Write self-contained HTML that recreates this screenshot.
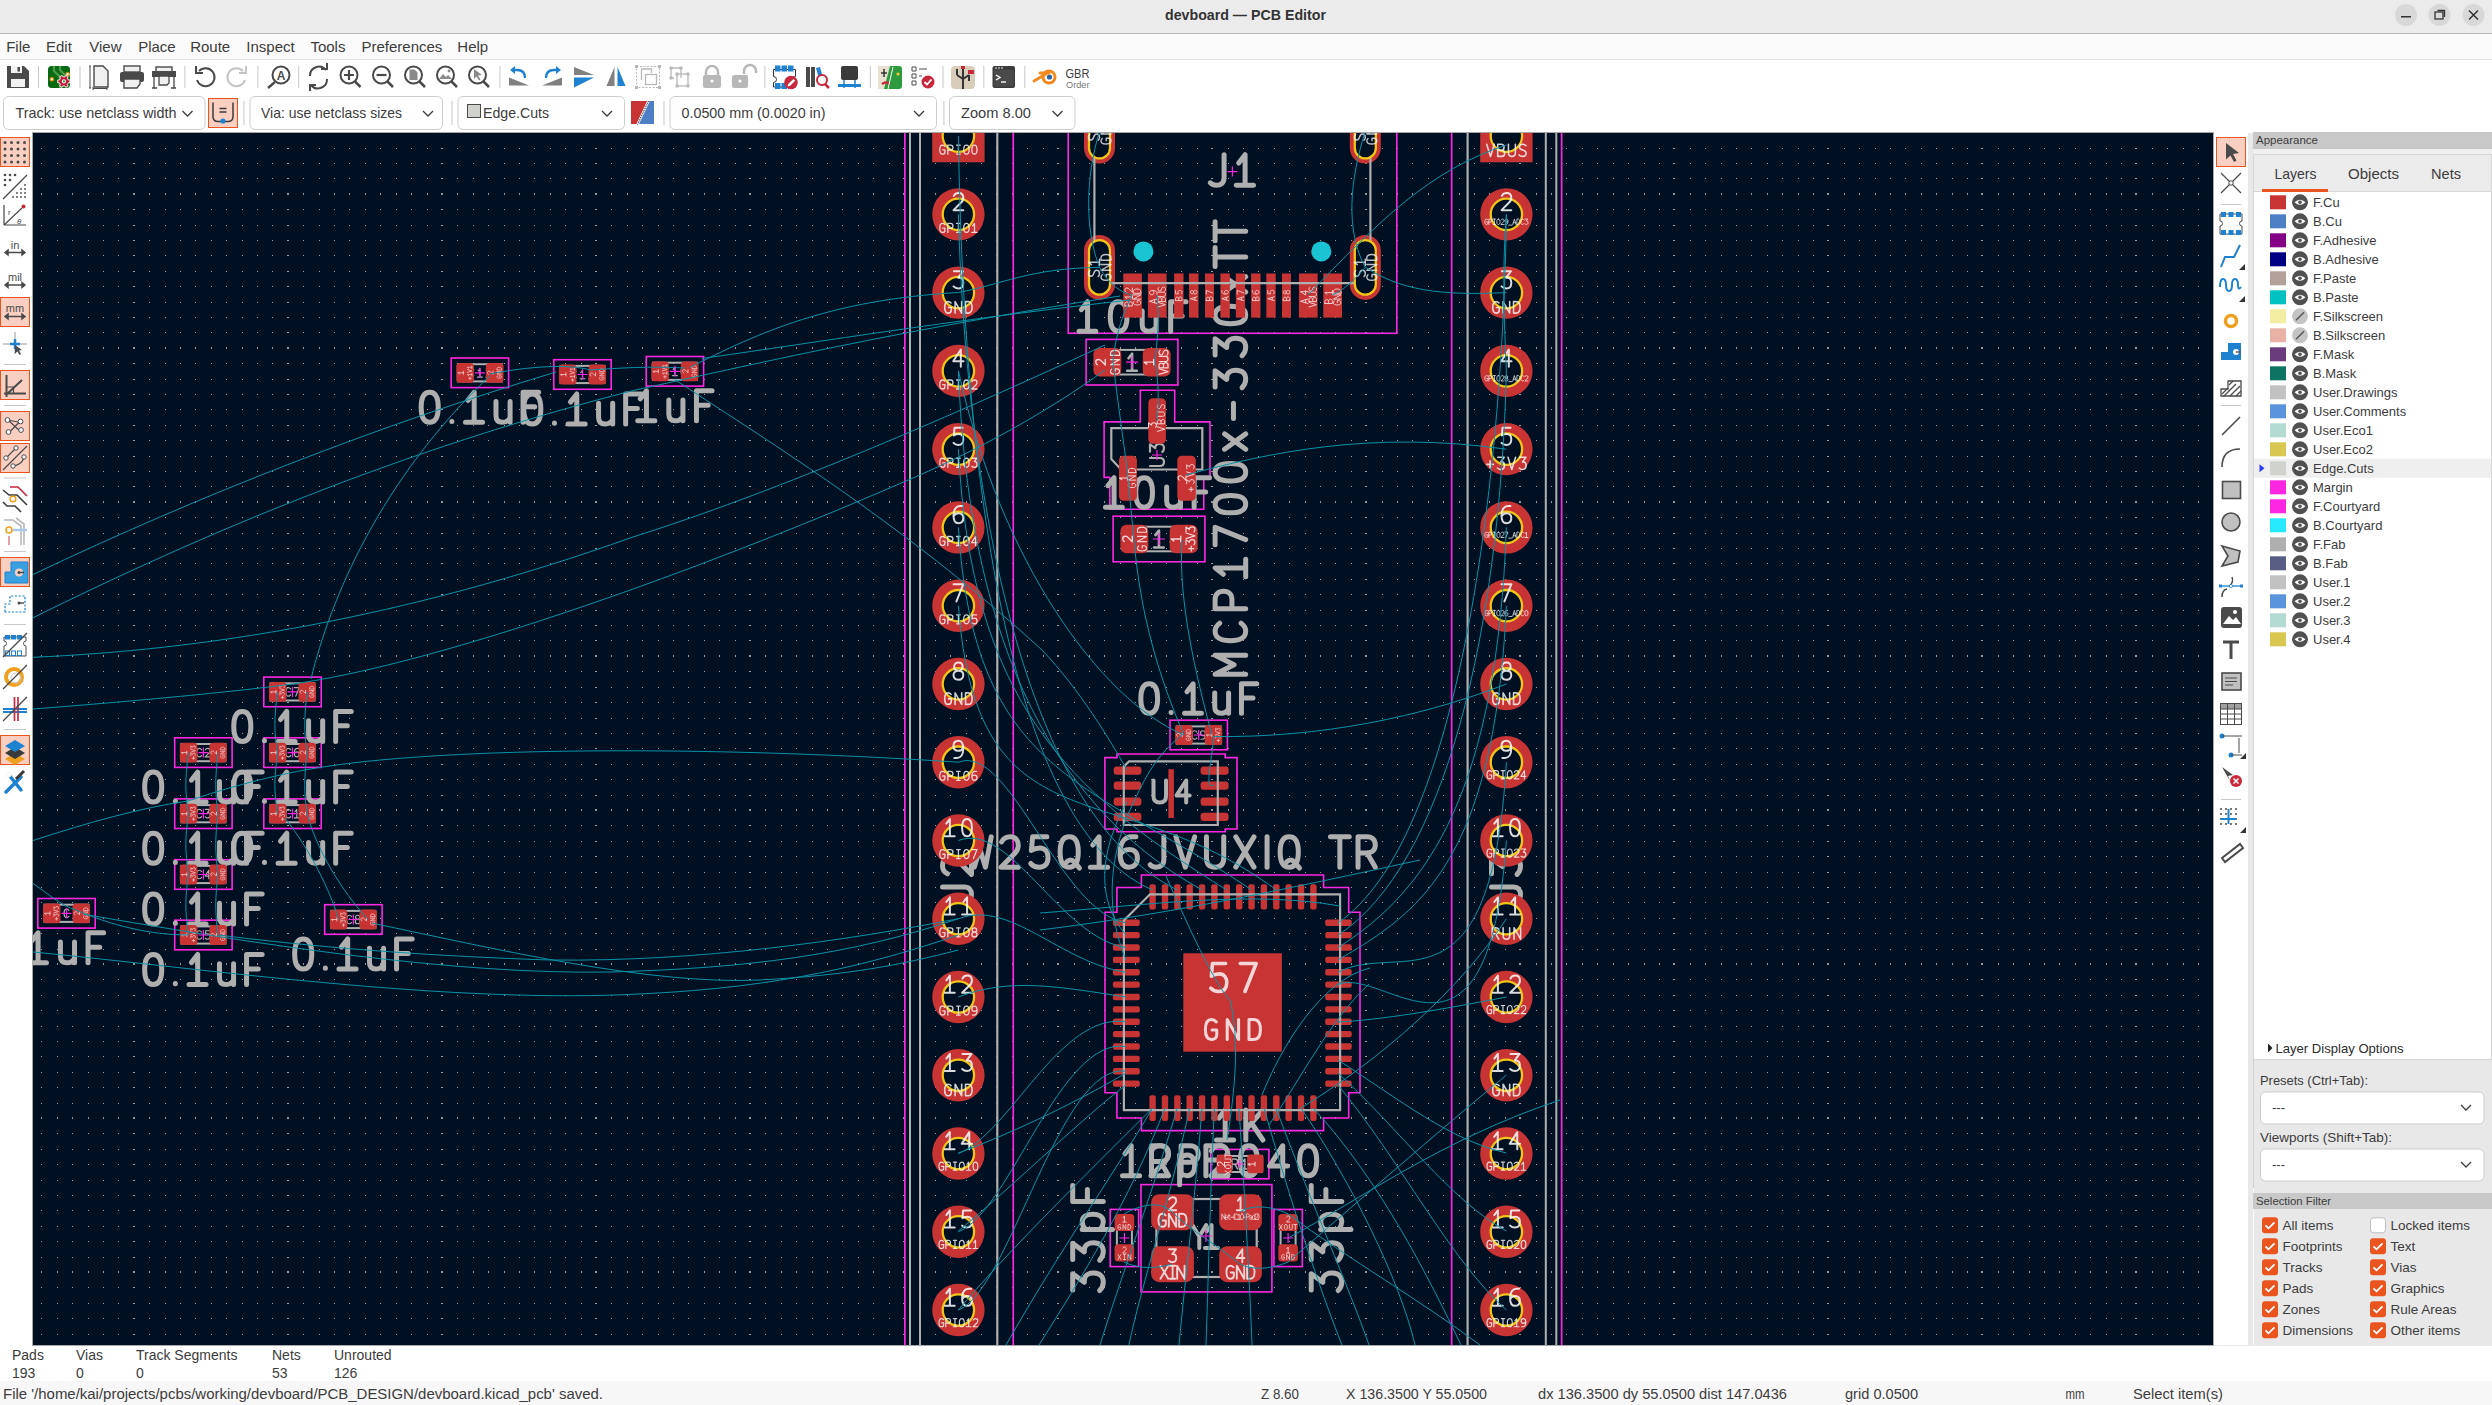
<!DOCTYPE html><html><head><meta charset="utf-8"><style>
html,body{margin:0;padding:0;width:2492px;height:1405px;overflow:hidden;background:#fafafa}
svg{display:block}
text{font-family:"Liberation Sans", sans-serif}
</style></head><body>
<svg width="2492" height="1405" viewBox="0 0 2492 1405">
<rect x="0" y="0" width="2492" height="33" fill="#ebebeb"/>
<rect x="0" y="33" width="2492" height="1" fill="#bcbcbc"/>
<text x="1245.5" y="20" text-anchor="middle" font-size="15" font-weight="bold" fill="#333" textLength="161" lengthAdjust="spacingAndGlyphs">devboard — PCB Editor</text>
<circle cx="2406" cy="15" r="11" fill="#d8d8d8"/>
<circle cx="2439.5" cy="15" r="11" fill="#d8d8d8"/>
<circle cx="2473.5" cy="15" r="11" fill="#d8d8d8"/>
<rect x="2401" y="16" width="10" height="1.5" fill="#333"/>
<rect x="2435" y="12" width="8" height="7" fill="none" stroke="#333" stroke-width="1.3"/><path d="M2437.5 10.5h7v6.5" fill="none" stroke="#333" stroke-width="1.3"/>
<path d="M2469 10.5l9 9M2478 10.5l-9 9" stroke="#333" stroke-width="1.5"/>
<rect x="0" y="34" width="2492" height="25" fill="#fafafa"/>
<rect x="0" y="59" width="2492" height="1" fill="#e2e2e2"/>
<text x="6.2" y="52" font-size="15" fill="#3c3c3c">File</text>
<text x="46" y="52" font-size="15" fill="#3c3c3c">Edit</text>
<text x="89.3" y="52" font-size="15" fill="#3c3c3c">View</text>
<text x="138.2" y="52" font-size="15" fill="#3c3c3c">Place</text>
<text x="190.2" y="52" font-size="15" fill="#3c3c3c">Route</text>
<text x="246.3" y="52" font-size="15" fill="#3c3c3c">Inspect</text>
<text x="310.4" y="52" font-size="15" fill="#3c3c3c">Tools</text>
<text x="361.5" y="52" font-size="15" fill="#3c3c3c">Preferences</text>
<text x="457.3" y="52" font-size="15" fill="#3c3c3c">Help</text>
<rect x="0" y="60" width="2492" height="73" fill="#ffffff"/>
<path d="M7 66h17l5 5v17h-22z" fill="#4a4a4a"/><rect x="11" y="79" width="14" height="8" fill="#f2f2f2"/><rect x="11" y="66" width="11" height="7" fill="#f2f2f2"/><rect x="17.5" y="67" width="2.5" height="4.5" fill="#4a4a4a"/>
<rect x="38" y="66" width="1" height="22" fill="#c8c8c8"/>
<rect x="48" y="66" width="22" height="22" rx="3.5" fill="#0a6a12"/><path d="M54 66v5l6 6v11M60 66v4l5 5h5" stroke="#4a9a4a" stroke-width="2.2" fill="none"/><circle cx="51.8" cy="79.3" r="1.7" fill="#fff" stroke="#e88a10" stroke-width="1.1"/><circle cx="67.6" cy="74.2" r="1.7" fill="#fff" stroke="#e88a10" stroke-width="1.1"/>
<path d="M70.04 79.98L70.04 82.82L68.39 82.77L67.34 84.61L68.20 86.01L65.74 87.42L64.96 85.98L62.84 85.98L62.06 87.42L59.60 86.01L60.46 84.61L59.41 82.77L57.76 82.82L57.76 79.98L59.41 80.03L60.46 78.19L59.60 76.79L62.06 75.38L62.84 76.82L64.96 76.82L65.74 75.38L68.20 76.79L67.34 78.19L68.39 80.03Z" fill="#c0183a" stroke="#fff" stroke-width="0.9" stroke-linejoin="round"/><circle cx="63.9" cy="81.4" r="2.1" fill="#fff"/><circle cx="63.9" cy="81.4" r="1.1" fill="#2a9a2a"/>
<rect x="79.5" y="66" width="1" height="22" fill="#c8c8c8"/>
<path d="M94 66h9l5 5v16h-14z" fill="#f0f0f0" stroke="#4a4a4a" stroke-width="1.4"/><path d="M90 66v22M89 66h2M89 88h2M93 88.5h14M93 87v3M107 87v3" stroke="#4a4a4a" stroke-width="1"/>
<rect x="124" y="66" width="16" height="6" fill="#f0f0f0" stroke="#4a4a4a" stroke-width="1.4"/><rect x="120" y="72" width="24" height="10" rx="2" fill="#4a4a4a"/><path d="M124 79h16v5l-3 4h-13z" fill="#f0f0f0" stroke="#4a4a4a" stroke-width="1.4"/>
<rect x="156" y="67" width="16" height="5" fill="#f0f0f0" stroke="#4a4a4a" stroke-width="1.4"/><rect x="152" y="71" width="24" height="6" fill="#4a4a4a"/><path d="M159 76h10v7l-2 2h-8z" fill="#f0f0f0" stroke="#4a4a4a" stroke-width="1.3"/><path d="M154 77v11M174 77v11M152 88h5M171 88h5" stroke="#4a4a4a" stroke-width="1.3"/>
<rect x="184.4" y="66" width="1" height="22" fill="#c8c8c8"/>
<path d="M199 71a9 9 0 1 1 -2 9" fill="none" stroke="#4a4a4a" stroke-width="2"/><path d="M196 66v7h7" fill="none" stroke="#4a4a4a" stroke-width="2"/>
<path d="M243 71a9 9 0 1 0 2 9" fill="none" stroke="#c4c4c4" stroke-width="2"/><path d="M246 66v7h-7" fill="none" stroke="#c4c4c4" stroke-width="2"/>
<rect x="257.4" y="66" width="1" height="22" fill="#c8c8c8"/>
<circle cx="281" cy="75" r="8.5" fill="none" stroke="#4a4a4a" stroke-width="2"/><path d="M275 82l-7 6" stroke="#4a4a4a" stroke-width="2.4"/><text x="281" y="80" font-size="12" font-weight="bold" text-anchor="middle" fill="#4a4a4a">A</text>
<rect x="298.2" y="66" width="1" height="22" fill="#c8c8c8"/>
<path d="M310 76a9 9 0 0 1 16-6M327 79a9 9 0 0 1 -16 6" fill="none" stroke="#4a4a4a" stroke-width="2"/><path d="M321 69h6v-6M316 85h-6v6" fill="none" stroke="#4a4a4a" stroke-width="2"/>
<circle cx="349" cy="75" r="8.5" fill="none" stroke="#4a4a4a" stroke-width="2"/><path d="M355 81.5l5.5 5.5" stroke="#4a4a4a" stroke-width="2.5"/><path d="M344 75h10M349 70v10" stroke="#4a4a4a" stroke-width="2.2"/>
<circle cx="381.5" cy="75" r="8.5" fill="none" stroke="#4a4a4a" stroke-width="2"/><path d="M387.5 81.5l5.5 5.5" stroke="#4a4a4a" stroke-width="2.5"/><path d="M376.5 75h10" stroke="#4a4a4a" stroke-width="2.2"/>
<circle cx="413.5" cy="75" r="8.5" fill="none" stroke="#4a4a4a" stroke-width="2"/><path d="M419.5 81.5l5.5 5.5" stroke="#4a4a4a" stroke-width="2.5"/><path d="M409.5 69.5h5l3 3v7.5h-8z" fill="#8a8a8a"/>
<circle cx="445.5" cy="75" r="8.5" fill="none" stroke="#4a4a4a" stroke-width="2"/><path d="M451.5 81.5l5.5 5.5" stroke="#4a4a4a" stroke-width="2.5"/><path d="M439 79l4-5 3 3 2-2 4 4z" fill="#8a8a8a"/><circle cx="449" cy="71" r="1.4" fill="#8a8a8a"/>
<circle cx="477.5" cy="75" r="8.5" fill="none" stroke="#4a4a4a" stroke-width="2"/><path d="M483.5 81.5l5.5 5.5" stroke="#4a4a4a" stroke-width="2.5"/><path d="M474 69l8 6-4 .5 2.5 4-1.5 1-2.5-4-2.5 2.5z" fill="#8a8a8a"/>
<rect x="499.4" y="66" width="1" height="22" fill="#c8c8c8"/>
<path d="M509 85.5v-8l20 8z" fill="#808080"/><path d="M525 78q0-8-8-8h-3" fill="none" stroke="#1e82d0" stroke-width="2.3"/><path d="M510 70l5-4v8z" fill="#1e82d0"/>
<path d="M562 85.5v-8l-20 8z" fill="#808080"/><path d="M546 78q0-8 8-8h3" fill="none" stroke="#1e82d0" stroke-width="2.3"/><path d="M561 70l-5-4v8z" fill="#1e82d0"/>
<path d="M574 67l20 8h-20z" fill="#808080"/><path d="M574 77.5h20l-20 10z" fill="#1e82d0"/>
<path d="M614.5 67v19h-8z" fill="#808080"/><path d="M617.5 67v19h8z" fill="#1e82d0"/>
<rect x="636.5" y="66.5" width="23" height="21" fill="none" stroke="#b8b8b8" stroke-width="1" stroke-dasharray="2 1.5"/><path d="M641.5 80v-11h10v4" fill="none" stroke="#b8b8b8" stroke-width="1.3"/><rect x="645.5" y="74.5" width="11" height="10" fill="none" stroke="#b8b8b8" stroke-width="1.3"/>
<rect x="635.0" y="65.0" width="3" height="3" fill="#b8b8b8"/>
<rect x="658.0" y="65.0" width="3" height="3" fill="#b8b8b8"/>
<rect x="635.0" y="86.0" width="3" height="3" fill="#b8b8b8"/>
<rect x="658.0" y="86.0" width="3" height="3" fill="#b8b8b8"/>
<path d="M671 68h10v10" fill="none" stroke="#b8b8b8" stroke-width="1.3"/><path d="M671 68v10h3" fill="none" stroke="#b8b8b8" stroke-width="1.3"/><rect x="677" y="74" width="11" height="12" fill="none" stroke="#b8b8b8" stroke-width="1.3"/>
<rect x="669.5" y="66.5" width="3" height="3" fill="#b8b8b8"/>
<rect x="679.5" y="66.5" width="3" height="3" fill="#b8b8b8"/>
<rect x="669.5" y="76.5" width="3" height="3" fill="#b8b8b8"/>
<rect x="675.5" y="72.5" width="3" height="3" fill="#b8b8b8"/>
<rect x="686.5" y="72.5" width="3" height="3" fill="#b8b8b8"/>
<rect x="675.5" y="84.5" width="3" height="3" fill="#b8b8b8"/>
<rect x="686.5" y="84.5" width="3" height="3" fill="#b8b8b8"/>
<path d="M706 75v-3a6 6 0 0 1 12 0v3" fill="none" stroke="#b8b8b8" stroke-width="2.5"/><rect x="703" y="75" width="18" height="13" rx="2" fill="#b8b8b8"/><circle cx="712" cy="81" r="1.6" fill="#fff"/>
<path d="M744 74v-3a6 6 0 0 1 12 0v2" fill="none" stroke="#b8b8b8" stroke-width="2.5"/><rect x="732" y="75" width="16" height="13" rx="2" fill="#b8b8b8"/><circle cx="740" cy="81" r="1.6" fill="#fff"/>
<rect x="764.4" y="66" width="1" height="22" fill="#c8c8c8"/>
<path d="M773.5 69.5h22v7a3 3 0 0 0 0 6v4.5h-22v-4.5a3 3 0 0 0 0-6z" fill="none" stroke="#333" stroke-width="1"/>
<rect x="775" y="65.5" width="5.5" height="6" fill="#1e82d0"/><rect x="775" y="83" width="5.5" height="6" fill="#1e82d0"/>
<rect x="781.5" y="65.5" width="5.5" height="6" fill="#1e82d0"/><rect x="781.5" y="83" width="5.5" height="6" fill="#1e82d0"/>
<rect x="788" y="65.5" width="5.5" height="6" fill="#1e82d0"/><rect x="788" y="83" width="5.5" height="6" fill="#1e82d0"/>
<circle cx="791" cy="82.5" r="6.8" fill="#c8283c"/><path d="M787.5 86.5l.8-2.6 5-5 1.9 1.9-5 5z" fill="#fff"/>
<rect x="806" y="67" width="4" height="20" fill="#4a4a4a"/><rect x="811" y="67" width="4" height="20" fill="#4a4a4a"/><path d="M816 68l4-1 5 18-4 1z" fill="#1e82d0"/><circle cx="822" cy="80" r="5" fill="#fff" stroke="#c8283c" stroke-width="2"/><path d="M825 84l4 4" stroke="#c8283c" stroke-width="2.5"/>
<rect x="841" y="66" width="17" height="14" rx="2" fill="#3a3a3a"/><rect x="838" y="84" width="23" height="3" fill="#1e82d0"/><path d="M844 80v8M855 80v8" stroke="#1e82d0" stroke-width="1.5"/>
<rect x="869.8" y="66" width="1" height="22" fill="#c8c8c8"/>
<rect x="878" y="66" width="24" height="23" rx="3" fill="#2e9a3e"/><path d="M878 66h12l-6 23h-6z" fill="#e8e0d0"/><path d="M884 69v8m-3-4h6" stroke="#333" stroke-width="1.5"/><path d="M882 84q4-3 8 0" stroke="#c8283c" stroke-width="2.5" fill="none"/><path d="M893 67l-5 22" stroke="#fff" stroke-width="1"/><circle cx="898" cy="74" r="1.6" fill="#ffc040"/>
<path d="M912 67h4v4h-4zM912 74h4v4h-4zM912 81h4v4h-4z" fill="none" stroke="#4a4a4a" stroke-width="1"/><path d="M919 69h8M919 76h3" stroke="#4a4a4a" stroke-width="1.2"/><circle cx="928" cy="82" r="6.5" fill="#c8283c"/><path d="M924.5 82l2.5 2.5 4.5-5" stroke="#fff" stroke-width="1.8" fill="none"/>
<rect x="942.5" y="66" width="1" height="22" fill="#c8c8c8"/>
<rect x="951" y="66" width="24" height="23" rx="4" fill="#d8cdb8"/><path d="M963 66v23M957 75l6 4M963 79l6-4M957 75v-6M969 75v6" stroke="#333" stroke-width="2" fill="none"/><rect x="968" y="70" width="6" height="4" fill="#c8283c"/><rect x="961" y="66" width="4" height="3" fill="#c8283c"/>
<rect x="983.3" y="66" width="1" height="22" fill="#c8c8c8"/>
<rect x="992.5" y="66" width="22.5" height="22" rx="2" fill="#3c3c3c"/><rect x="994" y="70" width="19.5" height="16.5" fill="#4a4a4a"/><path d="M996 75l4 2.5-4 2.5" stroke="#fff" stroke-width="1.4" fill="none"/><path d="M1001 82h5" stroke="#fff" stroke-width="1.4"/><circle cx="996" cy="68" r=".8" fill="#fff"/><circle cx="999" cy="68" r=".8" fill="#fff"/><circle cx="1002" cy="68" r=".8" fill="#fff"/>
<rect x="1024.3" y="66" width="1" height="22" fill="#c8c8c8"/>
<circle cx="1049" cy="77" r="7.5" fill="#f08a1e"/><circle cx="1049" cy="77" r="4.5" fill="#fff"/><circle cx="1049.5" cy="77" r="2.6" fill="#2a64a8"/><path d="M1034 81l12-7M1040 73h9" stroke="#f08a1e" stroke-width="3" stroke-linecap="round"/>
<text x="1065.5" y="78" font-size="12.5" fill="#3a3a3a" textLength="24" lengthAdjust="spacingAndGlyphs">GBR</text><text x="1066" y="87.5" font-size="9" fill="#777" textLength="23.5" lengthAdjust="spacingAndGlyphs">Order</text>
<rect x="3.5" y="96.5" width="201.5" height="33" rx="5" fill="#fff" stroke="#cdcdcd" stroke-width="1"/>
<text x="15.5" y="117.8" font-size="15" fill="#3c3c3c" textLength="161" lengthAdjust="spacingAndGlyphs">Track: use netclass width</text>
<path d="M182.5 111l5 5 5-5" fill="none" stroke="#3c3c3c" stroke-width="1.3"/>
<rect x="208.5" y="98.5" width="29" height="29" fill="#f9cfc2" stroke="#e9541f" stroke-width="1"/><path d="M213 102.5v14q0 5 5 5h10q5 0 5-5v-14" fill="none" stroke="#3c3c3c" stroke-width="1.5"/><path d="M219.5 108.5h7M219.5 112h7" stroke="#3c3c3c" stroke-width="1.3"/><circle cx="223" cy="121" r="2.6" fill="#1e82d0"/>
<rect x="243.4" y="101" width="1" height="24" fill="#c8c8c8"/>
<rect x="250.0" y="96.5" width="192.5" height="33" rx="5" fill="#fff" stroke="#cdcdcd" stroke-width="1"/>
<text x="261" y="117.8" font-size="15" fill="#3c3c3c" textLength="141" lengthAdjust="spacingAndGlyphs">Via: use netclass sizes</text>
<path d="M423 111l5 5 5-5" fill="none" stroke="#3c3c3c" stroke-width="1.3"/>
<rect x="451.5" y="101" width="1" height="24" fill="#c8c8c8"/>
<rect x="458.0" y="96.5" width="166.5" height="33" rx="5" fill="#fff" stroke="#cdcdcd" stroke-width="1"/>
<text x="483" y="117.8" font-size="15" fill="#3c3c3c" textLength="66" lengthAdjust="spacingAndGlyphs">Edge.Cuts</text>
<path d="M602 111l5 5 5-5" fill="none" stroke="#3c3c3c" stroke-width="1.3"/>
<rect x="467.5" y="104.5" width="13" height="13" fill="#d0d2cd" stroke="#4a4a4a" stroke-width="1"/>
<path d="M631 101h23v23h-23z" fill="#4d7fc4"/><path d="M631 101h18l-11 23h-7z" fill="#c83434"/><path d="M648.5 101l-11 23.5" stroke="#fff" stroke-width="2.4"/><path d="M648.5 101l-11 23.5" stroke="#222" stroke-width="1" stroke-dasharray="1.5 1"/>
<rect x="663.5" y="101" width="1" height="24" fill="#c8c8c8"/>
<rect x="670.0" y="96.5" width="266.5" height="33" rx="5" fill="#fff" stroke="#cdcdcd" stroke-width="1"/>
<text x="681.5" y="117.8" font-size="15" fill="#3c3c3c" textLength="144" lengthAdjust="spacingAndGlyphs">0.0500 mm (0.0020 in)</text>
<path d="M914 111l5 5 5-5" fill="none" stroke="#3c3c3c" stroke-width="1.3"/>
<rect x="943.4" y="101" width="1" height="24" fill="#c8c8c8"/>
<rect x="949.5" y="96.5" width="125.5" height="33" rx="5" fill="#fff" stroke="#cdcdcd" stroke-width="1"/>
<text x="961" y="117.8" font-size="15" fill="#3c3c3c" textLength="70" lengthAdjust="spacingAndGlyphs">Zoom 8.00</text>
<path d="M1052.5 111l5 5 5-5" fill="none" stroke="#3c3c3c" stroke-width="1.3"/>
<rect x="0" y="133" width="33" height="1212" fill="#ffffff"/>
<rect x="0.5" y="137.5" width="29" height="29" fill="#f9cfc2" stroke="#e9541f" stroke-width="1"/>
<rect x="0.5" y="297.5" width="29" height="29" fill="#f9cfc2" stroke="#e9541f" stroke-width="1"/>
<rect x="0.5" y="370.5" width="29" height="29" fill="#f9cfc2" stroke="#e9541f" stroke-width="1"/>
<rect x="0.5" y="411.5" width="29" height="29" fill="#f9cfc2" stroke="#e9541f" stroke-width="1"/>
<rect x="0.5" y="443.5" width="29" height="29" fill="#f9cfc2" stroke="#e9541f" stroke-width="1"/>
<rect x="0.5" y="557.5" width="29" height="29" fill="#f9cfc2" stroke="#e9541f" stroke-width="1"/>
<rect x="0.5" y="735.5" width="29" height="29" fill="#f9cfc2" stroke="#e9541f" stroke-width="1"/>
<rect x="4" y="364" width="22" height="1" fill="#c8c8c8"/>
<rect x="4" y="405" width="22" height="1" fill="#c8c8c8"/>
<rect x="4" y="477.5" width="22" height="1" fill="#c8c8c8"/>
<rect x="4" y="551" width="22" height="1" fill="#c8c8c8"/>
<rect x="4" y="624" width="22" height="1" fill="#c8c8c8"/>
<rect x="4" y="729" width="22" height="1" fill="#c8c8c8"/>
<circle cx="5.0" cy="142.5" r="1.5" fill="#4a4a4a"/>
<circle cx="5.0" cy="149.0" r="1.5" fill="#4a4a4a"/>
<circle cx="5.0" cy="155.5" r="1.5" fill="#4a4a4a"/>
<circle cx="5.0" cy="162.0" r="1.5" fill="#4a4a4a"/>
<circle cx="11.5" cy="142.5" r="1.5" fill="#4a4a4a"/>
<circle cx="11.5" cy="149.0" r="1.5" fill="#4a4a4a"/>
<circle cx="11.5" cy="155.5" r="1.5" fill="#4a4a4a"/>
<circle cx="11.5" cy="162.0" r="1.5" fill="#4a4a4a"/>
<circle cx="18.0" cy="142.5" r="1.5" fill="#4a4a4a"/>
<circle cx="18.0" cy="149.0" r="1.5" fill="#4a4a4a"/>
<circle cx="18.0" cy="155.5" r="1.5" fill="#4a4a4a"/>
<circle cx="18.0" cy="162.0" r="1.5" fill="#4a4a4a"/>
<circle cx="24.5" cy="142.5" r="1.5" fill="#4a4a4a"/>
<circle cx="24.5" cy="149.0" r="1.5" fill="#4a4a4a"/>
<circle cx="24.5" cy="155.5" r="1.5" fill="#4a4a4a"/>
<circle cx="24.5" cy="162.0" r="1.5" fill="#4a4a4a"/>
<path d="M3 199l24-24" stroke="#4a4a4a" stroke-width="1.2"/>
<circle cx="5" cy="175" r="1.3" fill="#4a4a4a"/>
<circle cx="5" cy="180" r="1.3" fill="#4a4a4a"/>
<circle cx="5" cy="185" r="1.3" fill="#4a4a4a"/>
<circle cx="10" cy="175" r="1.3" fill="#4a4a4a"/>
<circle cx="10" cy="180" r="1.3" fill="#4a4a4a"/>
<circle cx="15" cy="175" r="1.3" fill="#4a4a4a"/>
<circle cx="25" cy="185" r=".9" fill="#4a4a4a"/>
<circle cx="25" cy="189" r=".9" fill="#4a4a4a"/>
<circle cx="21" cy="189" r=".9" fill="#4a4a4a"/>
<circle cx="25" cy="193" r=".9" fill="#4a4a4a"/>
<circle cx="21" cy="193" r=".9" fill="#4a4a4a"/>
<circle cx="17" cy="193" r=".9" fill="#4a4a4a"/>
<circle cx="25" cy="197" r=".9" fill="#4a4a4a"/>
<circle cx="21" cy="197" r=".9" fill="#4a4a4a"/>
<circle cx="17" cy="197" r=".9" fill="#4a4a4a"/>
<circle cx="13" cy="197" r=".9" fill="#4a4a4a"/>
<path d="M4 225v-20M4 225h22M4 225l18-17" stroke="#4a4a4a" stroke-width="1.2" fill="none"/><circle cx="23.5" cy="206.5" r="2" fill="#c8283c"/><text x="8" y="215" font-size="8" fill="#4a4a4a">r</text><text x="17" y="224" font-size="8" font-style="italic" fill="#4a4a4a">θ</text>
<text x="15" y="249" font-size="11" text-anchor="middle" fill="#4a4a4a">in</text><path d="M5 252.5h20M5 252.5l3-2.5v5zM25 252.5l-3-2.5v5z" stroke="#4a4a4a" stroke-width="1.5" fill="#4a4a4a"/>
<text x="15" y="281" font-size="11" text-anchor="middle" fill="#4a4a4a">mil</text><path d="M5 285h20M5 285l3-2.5v5zM25 285l-3-2.5v5z" stroke="#4a4a4a" stroke-width="1.5" fill="#4a4a4a"/>
<text x="15" y="312" font-size="11" text-anchor="middle" fill="#4a4a4a">mm</text><path d="M5 316.5h20M5 316.5l3-2.5v5zM25 316.5l-3-2.5v5z" stroke="#4a4a4a" stroke-width="1.5" fill="#4a4a4a"/>
<path d="M15 332v22M3 344h24" stroke="#999" stroke-width="1"/><path d="M15 339v10M10 344h10" stroke="#1e82d0" stroke-width="2.5"/><path d="M15 345l7 5-3 .5 2 3.5-1.5 1-2-3.5-2.5 2z" fill="#4a4a4a"/>
<path d="M6.5 375v22M4 393.5h22M6 395l16-15" stroke="#4a4a4a" stroke-width="2" fill="none"/><path d="M6.5 387h7v6.5" stroke="#4a4a4a" stroke-width="1.2" fill="none"/>
<path d="M7.5 420l13 2.5M8.5 433l13-13M8 420l13 12" stroke="#4a4a4a" stroke-width="1.2"/>
<circle cx="7.5" cy="420" r="2.4" fill="#fff" stroke="#4a4a4a" stroke-width="1"/>
<circle cx="20.5" cy="421.5" r="2.4" fill="#fff" stroke="#4a4a4a" stroke-width="1"/>
<circle cx="8.5" cy="432" r="2.4" fill="#fff" stroke="#4a4a4a" stroke-width="1"/>
<circle cx="21" cy="430" r="2.4" fill="#fff" stroke="#4a4a4a" stroke-width="1"/>
<path d="M3 470l24-24M6 458l10-10M13 466q8-1 11-8" stroke="#4a4a4a" stroke-width="1.2" fill="none"/>
<circle cx="6" cy="458" r="2.2" fill="#fff" stroke="#4a4a4a" stroke-width="1"/>
<circle cx="16" cy="448" r="2.2" fill="#fff" stroke="#4a4a4a" stroke-width="1"/>
<circle cx="13" cy="466" r="2.2" fill="#fff" stroke="#4a4a4a" stroke-width="1"/>
<circle cx="24" cy="457" r="2.2" fill="#fff" stroke="#4a4a4a" stroke-width="1"/>
<path d="M3 490l6 5h8l10 10M3 502l4 4h8l6 6" stroke="#3c3c3c" stroke-width="1.6" fill="none"/><path d="M10 487h8l9 9" stroke="#c8283c" stroke-width="1.6" fill="none"/><circle cx="13" cy="499" r="2.8" fill="#fff" stroke="#f0a020" stroke-width="1.6"/>
<path d="M9 545v-8M4 520h9l8 6v19M16 518l8 6v21" stroke="#b8b8b8" stroke-width="1.6" fill="none"/><path d="M9 545v-9" stroke="#e8a0a8" stroke-width="2"/><path d="M13 530h14" stroke="#a8c8e8" stroke-width="2.5"/><circle cx="9" cy="530" r="3" fill="#fff" stroke="#f0a020" stroke-width="1.6"/>
<path d="M5 583v-11h6v-10h17v21z" fill="#3aa0e0" stroke="#1e82d0" stroke-width="1"/><circle cx="19" cy="572.5" r="4" fill="#f9cfc2"/><path d="M18 572.5h6" stroke="#4a4a4a" stroke-width="1.5"/><circle cx="19" cy="572.5" r="1.5" fill="#4a4a4a"/>
<path d="M5 612v-8h5v-8h15v16z" fill="none" stroke="#1e82d0" stroke-width="1.2" stroke-dasharray="2.2 1.5"/><path d="M18 603h6" stroke="#4a4a4a" stroke-width="1.4"/><circle cx="19" cy="603" r="1.5" fill="#4a4a4a"/>
<path d="M4 637h22v4a2.5 2.5 0 0 0 0 5v10h-22v-10a2.5 2.5 0 0 0 0-5z" fill="none" stroke="#4a4a4a" stroke-width="1"/>
<rect x="5" y="635" width="5" height="4.5" fill="#1e82d0"/><rect x="5.5" y="651" width="4" height="4.5" fill="#fff" stroke="#1e82d0" stroke-width="1"/>
<rect x="11" y="635" width="5" height="4.5" fill="#1e82d0"/><rect x="11.5" y="651" width="4" height="4.5" fill="#fff" stroke="#1e82d0" stroke-width="1"/>
<rect x="17" y="635" width="5" height="4.5" fill="#1e82d0"/><rect x="17.5" y="651" width="4" height="4.5" fill="#fff" stroke="#1e82d0" stroke-width="1"/>
<path d="M3 657l24-24" stroke="#4a4a4a" stroke-width="1.2"/>
<circle cx="14" cy="677" r="8" fill="none" stroke="#f0a020" stroke-width="4"/><circle cx="16" cy="678" r="5" fill="none" stroke="#c8c8c8" stroke-width="1"/><path d="M3 689l24-24" stroke="#4a4a4a" stroke-width="1.2"/>
<path d="M3 709h24M3 712h24" stroke="#1e82d0" stroke-width="2"/><path d="M14.5 697v24M18 697v24" stroke="#c8283c" stroke-width="1.7"/><path d="M3 721l24-24" stroke="#4a4a4a" stroke-width="1.2"/>
<path d="M15 753l10 6-10 6-10-6z" fill="#f0a020"/><path d="M15 747l10 6-10 6-10-6z" fill="#3a3a3a"/><path d="M15 740l10 6-10 6-10-6z" fill="#1e82d0"/>
<path d="M6 792l15-15M9 775l12 15" stroke="#1e82d0" stroke-width="3.5" stroke-linecap="round"/><path d="M24 771l-8 8" stroke="#3a3a3a" stroke-width="3"/><circle cx="8" cy="774" r="3.5" fill="#fafafa"/>
<rect x="2213" y="133" width="35" height="1212" fill="#ffffff"/>
<rect x="2248" y="133" width="5" height="1212" fill="#e8e8e8"/><rect x="2253" y="133" width="1" height="1212" fill="#fafafa"/>
<rect x="2216.5" y="137.5" width="29" height="29" fill="#f9cfc2" stroke="#e9541f" stroke-width="1"/>
<path d="M2226 143l13 10-6 1 3.5 6.5-2.5 1.5-3.5-6.5-4.5 4z" fill="#4a4a4a"/>
<path d="M2221 173l20 20M2241 173l-20 20" stroke="#4a4a4a" stroke-width="1.2"/><circle cx="2231" cy="183" r="2.2" fill="#fafafa" stroke="#4a4a4a" stroke-width="1"/>
<rect x="2221" y="204" width="20" height="1" fill="#c8c8c8"/>
<path d="M2220 214h22v7a2.5 2.5 0 0 0 0 5v8h-22v-8a2.5 2.5 0 0 0 0-5z" fill="none" stroke="#4a4a4a" stroke-width="1"/>
<rect x="2221" y="212" width="5" height="5" fill="#1e82d0"/><rect x="2221" y="230" width="5" height="5" fill="#1e82d0"/>
<rect x="2228.5" y="212" width="5" height="5" fill="#1e82d0"/><rect x="2228.5" y="230" width="5" height="5" fill="#1e82d0"/>
<rect x="2236" y="212" width="5" height="5" fill="#1e82d0"/><rect x="2236" y="230" width="5" height="5" fill="#1e82d0"/>
<path d="M2221 267l4-10h9l6-12" stroke="#1e82d0" stroke-width="2" fill="none"/><path d="M2245 264v6h-6z" fill="#333"/>
<path d="M2220 287q0-8 3-8t3 6 3 6 3-6 3-6 3 6 3 2" stroke="#1e82d0" stroke-width="2" fill="none"/><path d="M2245 296v6h-6z" fill="#333"/>
<circle cx="2231" cy="321" r="5.5" fill="none" stroke="#f0a020" stroke-width="3.5"/>
<path d="M2221 360v-8h7v-9h13v17z" fill="#1e82d0"/><circle cx="2236" cy="352" r="3" fill="#fafafa"/><path d="M2236 352h5" stroke="#4a4a4a" stroke-width="1.3"/>
<path d="M2221 396v-7h7v-8h13v15z" fill="#fff" stroke="#4a4a4a" stroke-width="1.3"/><path d="M2222 394l6-6M2224 396l12-12M2230 396l10-10M2236 396l5-5M2229 385l4-4" stroke="#4a4a4a" stroke-width="1.3"/>
<rect x="2221" y="405" width="20" height="1" fill="#c8c8c8"/>
<path d="M2222 435l18-18" stroke="#4a4a4a" stroke-width="1.6"/>
<path d="M2222 467q0-18 18-18" stroke="#4a4a4a" stroke-width="1.6" fill="none"/>
<rect x="2222.5" y="481.5" width="18" height="17" fill="#c0c0c0" stroke="#4a4a4a" stroke-width="1.6"/>
<circle cx="2231" cy="522" r="9" fill="#c0c0c0" stroke="#4a4a4a" stroke-width="1.6"/>
<path d="M2222 546l18 5-2 11-16 4 6-10z" fill="#c0c0c0" stroke="#4a4a4a" stroke-width="1.6"/>
<path d="M2222 597q0-7 5-8M2232 577q2 5-3 10" stroke="#4a4a4a" stroke-width="1.5" fill="none"/><path d="M2220 586h22" stroke="#1e82d0" stroke-width="1.3"/><rect x="2219" y="584.5" width="3" height="3" fill="#1e82d0"/><rect x="2240" y="584.5" width="3" height="3" fill="#1e82d0"/><circle cx="2231" cy="586" r="1.6" fill="#fff" stroke="#1e82d0" stroke-width=".8"/>
<rect x="2221" y="607" width="21" height="21" rx="3" fill="#4a4a4a"/><path d="M2223 624l6-8 4 4 3-3 5 7z" fill="#fff"/><circle cx="2235" cy="612" r="2" fill="#fff"/>
<path d="M2223 642h16M2231 642v17" stroke="#4a4a4a" stroke-width="3"/>
<rect x="2222" y="673" width="19" height="17" fill="#c0c0c0" stroke="#4a4a4a" stroke-width="1.6"/><path d="M2225 678h12M2225 681.5h12M2225 685h8" stroke="#4a4a4a" stroke-width="1.2"/>
<rect x="2220.5" y="703.5" width="21" height="21" fill="#fff" stroke="#4a4a4a" stroke-width="1"/><rect x="2221" y="704" width="20" height="5" fill="#a0a0a0"/><path d="M2221 709h20M2221 714h20M2221 719h20M2227.5 704v20M2234.5 704v20" stroke="#4a4a4a" stroke-width="1"/>
<circle cx="2222" cy="736" r="2.5" fill="#1e82d0"/><circle cx="2231" cy="755" r="2.5" fill="#1e82d0"/><path d="M2222 736h20M2231 755h11M2239 738v15" stroke="#4a4a4a" stroke-width="1"/><path d="M2246 753v6h-6z" fill="#333"/>
<path d="M2222 767l11 8-5 1 2 5z" fill="#4a4a4a"/><circle cx="2236" cy="781" r="6" fill="#c8283c"/><path d="M2233.5 778.5l5 5M2238.5 778.5l-5 5" stroke="#fff" stroke-width="1.5"/>
<rect x="2221" y="799" width="20" height="1" fill="#c8c8c8"/>
<circle cx="2221" cy="809" r="1" fill="#4a4a4a"/>
<circle cx="2221" cy="814" r="1" fill="#4a4a4a"/>
<circle cx="2221" cy="819" r="1" fill="#4a4a4a"/>
<circle cx="2221" cy="824" r="1" fill="#4a4a4a"/>
<circle cx="2226" cy="809" r="1" fill="#4a4a4a"/>
<circle cx="2226" cy="814" r="1" fill="#4a4a4a"/>
<circle cx="2226" cy="819" r="1" fill="#4a4a4a"/>
<circle cx="2226" cy="824" r="1" fill="#4a4a4a"/>
<circle cx="2231" cy="809" r="1" fill="#4a4a4a"/>
<circle cx="2231" cy="814" r="1" fill="#4a4a4a"/>
<circle cx="2231" cy="819" r="1" fill="#4a4a4a"/>
<circle cx="2231" cy="824" r="1" fill="#4a4a4a"/>
<circle cx="2236" cy="809" r="1" fill="#4a4a4a"/>
<circle cx="2236" cy="814" r="1" fill="#4a4a4a"/>
<circle cx="2236" cy="819" r="1" fill="#4a4a4a"/>
<circle cx="2236" cy="824" r="1" fill="#4a4a4a"/>
<path d="M2228.5 809v15M2221 819h15" stroke="#1e82d0" stroke-width="2"/><path d="M2246 827v6h-6z" fill="#333"/>
<path d="M2222 858l18-14 3 4-18 14z" fill="none" stroke="#4a4a4a" stroke-width="2"/>
<rect x="2254" y="133" width="238" height="1212" fill="#e8e8e8"/>
<rect x="2253" y="132" width="239" height="17" fill="#c8c8c8"/>
<text x="2256" y="144" font-size="11.5" fill="#3c3c3c" textLength="62" lengthAdjust="spacingAndGlyphs">Appearance</text>
<rect x="2253" y="149" width="239" height="5" fill="#f0f0f0"/>
<rect x="2253.5" y="154.5" width="238" height="905" fill="#ffffff" stroke="#d6d6d6" stroke-width="1"/>
<rect x="2254" y="155" width="237" height="36" fill="#ebebeb"/>
<rect x="2254" y="191" width="237" height="1" fill="#d6d6d6"/>
<text x="2274.5" y="178.5" font-size="15" fill="#3c3c3c" textLength="42" lengthAdjust="spacingAndGlyphs">Layers</text>
<text x="2348" y="178.5" font-size="15" fill="#3c3c3c" textLength="51" lengthAdjust="spacingAndGlyphs">Objects</text>
<text x="2431" y="178.5" font-size="15" fill="#3c3c3c" textLength="30" lengthAdjust="spacingAndGlyphs">Nets</text>
<rect x="2262" y="189" width="66" height="3" fill="#e9541f"/>
<rect x="2270" y="195.3" width="16" height="14" fill="#c83434"/>
<circle cx="2300" cy="202.3" r="8" fill="#505050"/><path d="M2294.5 202.3q5.5-5 11 0q-5.5 5-11 0z" fill="#fff"/><circle cx="2300" cy="202.3" r="1.8" fill="#505050"/>
<text x="2313" y="206.8" font-size="13" fill="#3c3c3c">F.Cu</text>
<rect x="2270" y="214.3" width="16" height="14" fill="#4d7fc4"/>
<circle cx="2300" cy="221.3" r="8" fill="#505050"/><path d="M2294.5 221.3q5.5-5 11 0q-5.5 5-11 0z" fill="#fff"/><circle cx="2300" cy="221.3" r="1.8" fill="#505050"/>
<text x="2313" y="225.8" font-size="13" fill="#3c3c3c">B.Cu</text>
<rect x="2270" y="233.3" width="16" height="14" fill="#840084"/>
<circle cx="2300" cy="240.3" r="8" fill="#505050"/><path d="M2294.5 240.3q5.5-5 11 0q-5.5 5-11 0z" fill="#fff"/><circle cx="2300" cy="240.3" r="1.8" fill="#505050"/>
<text x="2313" y="244.8" font-size="13" fill="#3c3c3c">F.Adhesive</text>
<rect x="2270" y="252.3" width="16" height="14" fill="#000084"/>
<circle cx="2300" cy="259.3" r="8" fill="#505050"/><path d="M2294.5 259.3q5.5-5 11 0q-5.5 5-11 0z" fill="#fff"/><circle cx="2300" cy="259.3" r="1.8" fill="#505050"/>
<text x="2313" y="263.8" font-size="13" fill="#3c3c3c">B.Adhesive</text>
<rect x="2270" y="271.3" width="16" height="14" fill="#b4a09a"/>
<circle cx="2300" cy="278.3" r="8" fill="#505050"/><path d="M2294.5 278.3q5.5-5 11 0q-5.5 5-11 0z" fill="#fff"/><circle cx="2300" cy="278.3" r="1.8" fill="#505050"/>
<text x="2313" y="282.8" font-size="13" fill="#3c3c3c">F.Paste</text>
<rect x="2270" y="290.3" width="16" height="14" fill="#00c2c2"/>
<circle cx="2300" cy="297.3" r="8" fill="#505050"/><path d="M2294.5 297.3q5.5-5 11 0q-5.5 5-11 0z" fill="#fff"/><circle cx="2300" cy="297.3" r="1.8" fill="#505050"/>
<text x="2313" y="301.8" font-size="13" fill="#3c3c3c">B.Paste</text>
<rect x="2270" y="309.3" width="16" height="14" fill="#f2eda1"/>
<circle cx="2300" cy="316.3" r="8" fill="#c4c4c4"/><path d="M2296 320.3l8-8" stroke="#555" stroke-width="1.4"/>
<text x="2313" y="320.8" font-size="13" fill="#3c3c3c">F.Silkscreen</text>
<rect x="2270" y="328.3" width="16" height="14" fill="#e8b2a7"/>
<circle cx="2300" cy="335.3" r="8" fill="#c4c4c4"/><path d="M2296 339.3l8-8" stroke="#555" stroke-width="1.4"/>
<text x="2313" y="339.8" font-size="13" fill="#3c3c3c">B.Silkscreen</text>
<rect x="2270" y="347.3" width="16" height="14" fill="#6a3c7e"/>
<circle cx="2300" cy="354.3" r="8" fill="#505050"/><path d="M2294.5 354.3q5.5-5 11 0q-5.5 5-11 0z" fill="#fff"/><circle cx="2300" cy="354.3" r="1.8" fill="#505050"/>
<text x="2313" y="358.8" font-size="13" fill="#3c3c3c">F.Mask</text>
<rect x="2270" y="366.3" width="16" height="14" fill="#0e7462"/>
<circle cx="2300" cy="373.3" r="8" fill="#505050"/><path d="M2294.5 373.3q5.5-5 11 0q-5.5 5-11 0z" fill="#fff"/><circle cx="2300" cy="373.3" r="1.8" fill="#505050"/>
<text x="2313" y="377.8" font-size="13" fill="#3c3c3c">B.Mask</text>
<rect x="2270" y="385.3" width="16" height="14" fill="#c2c2c2"/>
<circle cx="2300" cy="392.3" r="8" fill="#505050"/><path d="M2294.5 392.3q5.5-5 11 0q-5.5 5-11 0z" fill="#fff"/><circle cx="2300" cy="392.3" r="1.8" fill="#505050"/>
<text x="2313" y="396.8" font-size="13" fill="#3c3c3c">User.Drawings</text>
<rect x="2270" y="404.3" width="16" height="14" fill="#5994dc"/>
<circle cx="2300" cy="411.3" r="8" fill="#505050"/><path d="M2294.5 411.3q5.5-5 11 0q-5.5 5-11 0z" fill="#fff"/><circle cx="2300" cy="411.3" r="1.8" fill="#505050"/>
<text x="2313" y="415.8" font-size="13" fill="#3c3c3c">User.Comments</text>
<rect x="2270" y="423.3" width="16" height="14" fill="#b4dbd2"/>
<circle cx="2300" cy="430.3" r="8" fill="#505050"/><path d="M2294.5 430.3q5.5-5 11 0q-5.5 5-11 0z" fill="#fff"/><circle cx="2300" cy="430.3" r="1.8" fill="#505050"/>
<text x="2313" y="434.8" font-size="13" fill="#3c3c3c">User.Eco1</text>
<rect x="2270" y="442.3" width="16" height="14" fill="#d8c852"/>
<circle cx="2300" cy="449.3" r="8" fill="#505050"/><path d="M2294.5 449.3q5.5-5 11 0q-5.5 5-11 0z" fill="#fff"/><circle cx="2300" cy="449.3" r="1.8" fill="#505050"/>
<text x="2313" y="453.8" font-size="13" fill="#3c3c3c">User.Eco2</text>
<rect x="2254" y="458.8" width="237" height="19" fill="#efefef"/>
<path d="M2259.5 464.3l5 4-5 4z" fill="#2a3cf0"/>
<rect x="2270" y="461.3" width="16" height="14" fill="#d0d2cd"/>
<circle cx="2300" cy="468.3" r="8" fill="#505050"/><path d="M2294.5 468.3q5.5-5 11 0q-5.5 5-11 0z" fill="#fff"/><circle cx="2300" cy="468.3" r="1.8" fill="#505050"/>
<text x="2313" y="472.8" font-size="13" fill="#3c3c3c">Edge.Cuts</text>
<rect x="2270" y="480.3" width="16" height="14" fill="#ff26e2"/>
<circle cx="2300" cy="487.3" r="8" fill="#505050"/><path d="M2294.5 487.3q5.5-5 11 0q-5.5 5-11 0z" fill="#fff"/><circle cx="2300" cy="487.3" r="1.8" fill="#505050"/>
<text x="2313" y="491.8" font-size="13" fill="#3c3c3c">Margin</text>
<rect x="2270" y="499.3" width="16" height="14" fill="#ff26e2"/>
<circle cx="2300" cy="506.3" r="8" fill="#505050"/><path d="M2294.5 506.3q5.5-5 11 0q-5.5 5-11 0z" fill="#fff"/><circle cx="2300" cy="506.3" r="1.8" fill="#505050"/>
<text x="2313" y="510.8" font-size="13" fill="#3c3c3c">F.Courtyard</text>
<rect x="2270" y="518.3" width="16" height="14" fill="#26e9ff"/>
<circle cx="2300" cy="525.3" r="8" fill="#505050"/><path d="M2294.5 525.3q5.5-5 11 0q-5.5 5-11 0z" fill="#fff"/><circle cx="2300" cy="525.3" r="1.8" fill="#505050"/>
<text x="2313" y="529.8" font-size="13" fill="#3c3c3c">B.Courtyard</text>
<rect x="2270" y="537.3" width="16" height="14" fill="#afafaf"/>
<circle cx="2300" cy="544.3" r="8" fill="#505050"/><path d="M2294.5 544.3q5.5-5 11 0q-5.5 5-11 0z" fill="#fff"/><circle cx="2300" cy="544.3" r="1.8" fill="#505050"/>
<text x="2313" y="548.8" font-size="13" fill="#3c3c3c">F.Fab</text>
<rect x="2270" y="556.3" width="16" height="14" fill="#585d84"/>
<circle cx="2300" cy="563.3" r="8" fill="#505050"/><path d="M2294.5 563.3q5.5-5 11 0q-5.5 5-11 0z" fill="#fff"/><circle cx="2300" cy="563.3" r="1.8" fill="#505050"/>
<text x="2313" y="567.8" font-size="13" fill="#3c3c3c">B.Fab</text>
<rect x="2270" y="575.3" width="16" height="14" fill="#c2c2c2"/>
<circle cx="2300" cy="582.3" r="8" fill="#505050"/><path d="M2294.5 582.3q5.5-5 11 0q-5.5 5-11 0z" fill="#fff"/><circle cx="2300" cy="582.3" r="1.8" fill="#505050"/>
<text x="2313" y="586.8" font-size="13" fill="#3c3c3c">User.1</text>
<rect x="2270" y="594.3" width="16" height="14" fill="#5994dc"/>
<circle cx="2300" cy="601.3" r="8" fill="#505050"/><path d="M2294.5 601.3q5.5-5 11 0q-5.5 5-11 0z" fill="#fff"/><circle cx="2300" cy="601.3" r="1.8" fill="#505050"/>
<text x="2313" y="605.8" font-size="13" fill="#3c3c3c">User.2</text>
<rect x="2270" y="613.3" width="16" height="14" fill="#b4dbd2"/>
<circle cx="2300" cy="620.3" r="8" fill="#505050"/><path d="M2294.5 620.3q5.5-5 11 0q-5.5 5-11 0z" fill="#fff"/><circle cx="2300" cy="620.3" r="1.8" fill="#505050"/>
<text x="2313" y="624.8" font-size="13" fill="#3c3c3c">User.3</text>
<rect x="2270" y="632.3" width="16" height="14" fill="#d8c852"/>
<circle cx="2300" cy="639.3" r="8" fill="#505050"/><path d="M2294.5 639.3q5.5-5 11 0q-5.5 5-11 0z" fill="#fff"/><circle cx="2300" cy="639.3" r="1.8" fill="#505050"/>
<text x="2313" y="643.8" font-size="13" fill="#3c3c3c">User.4</text>
<path d="M2268 1043.5l4.5 4.5-4.5 4.5z" fill="#222"/><text x="2275.5" y="1052.5" font-size="13" fill="#2c2c2c" textLength="128" lengthAdjust="spacingAndGlyphs">Layer Display Options</text>
<text x="2260" y="1085" font-size="13" fill="#3c3c3c" textLength="108" lengthAdjust="spacingAndGlyphs">Presets (Ctrl+Tab):</text>
<rect x="2260.5" y="1092" width="223.5" height="32" rx="5" fill="#fff" stroke="#cdcdcd"/><text x="2272" y="1112" font-size="13" fill="#3c3c3c">---</text><path d="M2461 1105l5 5 5-5" fill="none" stroke="#3c3c3c" stroke-width="1.3"/>
<text x="2260" y="1142" font-size="13" fill="#3c3c3c" textLength="132" lengthAdjust="spacingAndGlyphs">Viewports (Shift+Tab):</text>
<rect x="2260.5" y="1149" width="223.5" height="32" rx="5" fill="#fff" stroke="#cdcdcd"/><text x="2272" y="1169" font-size="13" fill="#3c3c3c">---</text><path d="M2461 1162l5 5 5-5" fill="none" stroke="#3c3c3c" stroke-width="1.3"/>
<rect x="2253" y="1060" width="1" height="128" fill="#cfcfcf"/>
<rect x="2253" y="1193" width="239" height="16" fill="#c8c8c8"/><text x="2256" y="1205" font-size="11.5" fill="#3c3c3c" textLength="75" lengthAdjust="spacingAndGlyphs">Selection Filter</text>
<rect x="2262" y="1217.3" width="16" height="16" rx="3" fill="#e9541f"/><path d="M2265.5 1225.3l3 3 6-6" stroke="#fff" stroke-width="1.8" fill="none"/>
<text x="2282.5" y="1230.3" font-size="13.5" fill="#3c3c3c">All items</text>
<rect x="2370.5" y="1217.8" width="15" height="15" rx="3" fill="#fff" stroke="#bdbdbd"/>
<text x="2390.5" y="1230.3" font-size="13.5" fill="#3c3c3c">Locked items</text>
<rect x="2262" y="1238.3" width="16" height="16" rx="3" fill="#e9541f"/><path d="M2265.5 1246.3l3 3 6-6" stroke="#fff" stroke-width="1.8" fill="none"/>
<text x="2282.5" y="1251.3" font-size="13.5" fill="#3c3c3c">Footprints</text>
<rect x="2370" y="1238.3" width="16" height="16" rx="3" fill="#e9541f"/><path d="M2373.5 1246.3l3 3 6-6" stroke="#fff" stroke-width="1.8" fill="none"/>
<text x="2390.5" y="1251.3" font-size="13.5" fill="#3c3c3c">Text</text>
<rect x="2262" y="1259.3" width="16" height="16" rx="3" fill="#e9541f"/><path d="M2265.5 1267.3l3 3 6-6" stroke="#fff" stroke-width="1.8" fill="none"/>
<text x="2282.5" y="1272.3" font-size="13.5" fill="#3c3c3c">Tracks</text>
<rect x="2370" y="1259.3" width="16" height="16" rx="3" fill="#e9541f"/><path d="M2373.5 1267.3l3 3 6-6" stroke="#fff" stroke-width="1.8" fill="none"/>
<text x="2390.5" y="1272.3" font-size="13.5" fill="#3c3c3c">Vias</text>
<rect x="2262" y="1280.3" width="16" height="16" rx="3" fill="#e9541f"/><path d="M2265.5 1288.3l3 3 6-6" stroke="#fff" stroke-width="1.8" fill="none"/>
<text x="2282.5" y="1293.3" font-size="13.5" fill="#3c3c3c">Pads</text>
<rect x="2370" y="1280.3" width="16" height="16" rx="3" fill="#e9541f"/><path d="M2373.5 1288.3l3 3 6-6" stroke="#fff" stroke-width="1.8" fill="none"/>
<text x="2390.5" y="1293.3" font-size="13.5" fill="#3c3c3c">Graphics</text>
<rect x="2262" y="1301.3" width="16" height="16" rx="3" fill="#e9541f"/><path d="M2265.5 1309.3l3 3 6-6" stroke="#fff" stroke-width="1.8" fill="none"/>
<text x="2282.5" y="1314.3" font-size="13.5" fill="#3c3c3c">Zones</text>
<rect x="2370" y="1301.3" width="16" height="16" rx="3" fill="#e9541f"/><path d="M2373.5 1309.3l3 3 6-6" stroke="#fff" stroke-width="1.8" fill="none"/>
<text x="2390.5" y="1314.3" font-size="13.5" fill="#3c3c3c">Rule Areas</text>
<rect x="2262" y="1322.3" width="16" height="16" rx="3" fill="#e9541f"/><path d="M2265.5 1330.3l3 3 6-6" stroke="#fff" stroke-width="1.8" fill="none"/>
<text x="2282.5" y="1335.3" font-size="13.5" fill="#3c3c3c">Dimensions</text>
<rect x="2370" y="1322.3" width="16" height="16" rx="3" fill="#e9541f"/><path d="M2373.5 1330.3l3 3 6-6" stroke="#fff" stroke-width="1.8" fill="none"/>
<text x="2390.5" y="1335.3" font-size="13.5" fill="#3c3c3c">Other items</text>
<rect x="0" y="1345" width="2492" height="37" fill="#ffffff"/>
<rect x="2214" y="1345" width="278" height="1" fill="#e8e8e8"/>
<rect x="0" y="1381" width="2492" height="24" fill="#f7f7f7"/>
<text x="12" y="1360" font-size="14" fill="#3c3c3c">Pads</text><text x="12" y="1378" font-size="14" fill="#3c3c3c">193</text>
<text x="76" y="1360" font-size="14" fill="#3c3c3c">Vias</text><text x="76" y="1378" font-size="14" fill="#3c3c3c">0</text>
<text x="136" y="1360" font-size="14" fill="#3c3c3c">Track Segments</text><text x="136" y="1378" font-size="14" fill="#3c3c3c">0</text>
<text x="272" y="1360" font-size="14" fill="#3c3c3c">Nets</text><text x="272" y="1378" font-size="14" fill="#3c3c3c">53</text>
<text x="334" y="1360" font-size="14" fill="#3c3c3c">Unrouted</text><text x="334" y="1378" font-size="14" fill="#3c3c3c">126</text>
<text x="3" y="1399" font-size="14" fill="#3c3c3c" textLength="600" lengthAdjust="spacingAndGlyphs">File '/home/kai/projects/pcbs/working/devboard/PCB_DESIGN/devboard.kicad_pcb' saved.</text>
<text x="1261" y="1399" font-size="14" fill="#3c3c3c" textLength="38" lengthAdjust="spacingAndGlyphs">Z 8.60</text>
<text x="1346" y="1399" font-size="14" fill="#3c3c3c" textLength="141" lengthAdjust="spacingAndGlyphs">X 136.3500  Y 55.0500</text>
<text x="1538" y="1399" font-size="14" fill="#3c3c3c" textLength="249" lengthAdjust="spacingAndGlyphs">dx 136.3500  dy 55.0500  dist 147.0436</text>
<text x="1845" y="1399" font-size="14" fill="#3c3c3c" textLength="73" lengthAdjust="spacingAndGlyphs">grid 0.0500</text>
<text x="2065.5" y="1399" font-size="14" fill="#3c3c3c" textLength="19" lengthAdjust="spacingAndGlyphs">mm</text>
<text x="2133" y="1399" font-size="14" fill="#3c3c3c" textLength="90" lengthAdjust="spacingAndGlyphs">Select item(s)</text>
<defs><clipPath id="cv"><rect x="33" y="133" width="2180" height="1212"/></clipPath>
<path id="grow" d="M41 0h1m15 0h1m14 0h1m15 0h1m14 0h1m14 0h1m14 0h2m14 0h1m15 0h1m14 0h1m14 0h1m15 0h1m14 0h1m15 0h1m14 0h1m14 0h1m14 0h2m14 0h1m15 0h1m14 0h1m14 0h1m15 0h1m14 0h1m15 0h1m14 0h1m15 0h1m13 0h2m14 0h1m15 0h1m14 0h1m15 0h1m14 0h1m14 0h1m15 0h1m14 0h1m15 0h1m13 0h2m14 0h1m15 0h1m14 0h1m15 0h1m14 0h1m14 0h1m15 0h1m14 0h1m15 0h1m13 0h2m14 0h1m15 0h1m14 0h1m15 0h1m14 0h1m14 0h1m15 0h1m14 0h1m15 0h1m13 0h2m14 0h1m15 0h1m14 0h1m15 0h1m14 0h1m14 0h1m15 0h1m14 0h1m15 0h1m13 0h2m15 0h1m14 0h1m14 0h1m15 0h1m14 0h1m15 0h1m14 0h1m14 0h1m15 0h1m13 0h2m15 0h1m14 0h1m14 0h1m15 0h1m14 0h1m15 0h1m14 0h1m14 0h1m15 0h1m13 0h2m15 0h1m14 0h1m14 0h1m15 0h1m14 0h1m15 0h1m14 0h1m14 0h1m15 0h1m13 0h2m15 0h1m14 0h1m14 0h1m15 0h1m14 0h1m15 0h1m14 0h1m15 0h1m14 0h1m13 0h2m15 0h1m14 0h1m15 0h1m14 0h1m14 0h1m15 0h1m14 0h1m15 0h1m14 0h1m13 0h2m15 0h1m14 0h1m15 0h1m14 0h1m14 0h1m15 0h1m14 0h1m15 0h1m14 0h1m13 0h2m15 0h1m14 0h1m15 0h1m14 0h1m14 0h1m15 0h1m14 0h1m15 0h1m14 0h1m13 0h2m15 0h1m14 0h1m15 0h1m14 0h1m14 0h1" transform="translate(0 0.5)" stroke="#9c9c9c" stroke-width="1" shape-rendering="crispEdges"/>
<path id="grow2" d="M41 0h1m15 0h1m14 0h1m15 0h1m14 0h1m14 0h1m14 0h2m14 0h1m15 0h1m14 0h1m14 0h1m15 0h1m14 0h1m15 0h1m14 0h1m14 0h1m14 0h2m14 0h1m15 0h1m14 0h1m14 0h1m15 0h1m14 0h1m15 0h1m14 0h1m15 0h1m13 0h2m14 0h1m15 0h1m14 0h1m15 0h1m14 0h1m14 0h1m15 0h1m14 0h1m15 0h1m13 0h2m14 0h1m15 0h1m14 0h1m15 0h1m14 0h1m14 0h1m15 0h1m14 0h1m15 0h1m13 0h2m14 0h1m15 0h1m14 0h1m15 0h1m14 0h1m14 0h1m15 0h1m14 0h1m15 0h1m13 0h2m14 0h1m15 0h1m14 0h1m15 0h1m14 0h1m14 0h1m15 0h1m14 0h1m15 0h1m13 0h2m15 0h1m14 0h1m14 0h1m15 0h1m14 0h1m15 0h1m14 0h1m14 0h1m15 0h1m13 0h2m15 0h1m14 0h1m14 0h1m15 0h1m14 0h1m15 0h1m14 0h1m14 0h1m15 0h1m13 0h2m15 0h1m14 0h1m14 0h1m15 0h1m14 0h1m15 0h1m14 0h1m14 0h1m15 0h1m13 0h2m15 0h1m14 0h1m14 0h1m15 0h1m14 0h1m15 0h1m14 0h1m15 0h1m14 0h1m13 0h2m15 0h1m14 0h1m15 0h1m14 0h1m14 0h1m15 0h1m14 0h1m15 0h1m14 0h1m13 0h2m15 0h1m14 0h1m15 0h1m14 0h1m14 0h1m15 0h1m14 0h1m15 0h1m14 0h1m13 0h2m15 0h1m14 0h1m15 0h1m14 0h1m14 0h1m15 0h1m14 0h1m15 0h1m14 0h1m13 0h2m15 0h1m14 0h1m15 0h1m14 0h1m14 0h1" stroke="#969696" stroke-width="2" shape-rendering="crispEdges"/></defs>
<rect x="32" y="132" width="2182" height="1214" fill="#a8a8a8"/>
<rect x="33" y="133" width="2180" height="1212" fill="#001023"/>
<g clip-path="url(#cv)">
<use href="#grow" y="148"/>
<use href="#grow" y="163"/>
<use href="#grow" y="178"/>
<use href="#grow2" y="194"/>
<use href="#grow" y="209"/>
<use href="#grow" y="225"/>
<use href="#grow" y="240"/>
<use href="#grow" y="255"/>
<use href="#grow" y="271"/>
<use href="#grow" y="286"/>
<use href="#grow" y="302"/>
<use href="#grow" y="317"/>
<use href="#grow" y="332"/>
<use href="#grow2" y="348"/>
<use href="#grow" y="363"/>
<use href="#grow" y="379"/>
<use href="#grow" y="394"/>
<use href="#grow" y="409"/>
<use href="#grow" y="425"/>
<use href="#grow" y="440"/>
<use href="#grow" y="456"/>
<use href="#grow" y="471"/>
<use href="#grow" y="486"/>
<use href="#grow2" y="502"/>
<use href="#grow" y="517"/>
<use href="#grow" y="533"/>
<use href="#grow" y="548"/>
<use href="#grow" y="563"/>
<use href="#grow" y="579"/>
<use href="#grow" y="594"/>
<use href="#grow" y="610"/>
<use href="#grow" y="625"/>
<use href="#grow" y="640"/>
<use href="#grow2" y="656"/>
<use href="#grow" y="671"/>
<use href="#grow" y="687"/>
<use href="#grow" y="702"/>
<use href="#grow" y="718"/>
<use href="#grow" y="733"/>
<use href="#grow" y="748"/>
<use href="#grow" y="764"/>
<use href="#grow" y="779"/>
<use href="#grow" y="795"/>
<use href="#grow2" y="810"/>
<use href="#grow" y="825"/>
<use href="#grow" y="841"/>
<use href="#grow" y="856"/>
<use href="#grow" y="872"/>
<use href="#grow" y="887"/>
<use href="#grow" y="902"/>
<use href="#grow" y="918"/>
<use href="#grow" y="933"/>
<use href="#grow" y="949"/>
<use href="#grow2" y="964"/>
<use href="#grow" y="979"/>
<use href="#grow" y="995"/>
<use href="#grow" y="1010"/>
<use href="#grow" y="1026"/>
<use href="#grow" y="1041"/>
<use href="#grow" y="1056"/>
<use href="#grow" y="1072"/>
<use href="#grow" y="1087"/>
<use href="#grow" y="1103"/>
<use href="#grow2" y="1118"/>
<use href="#grow" y="1133"/>
<use href="#grow" y="1149"/>
<use href="#grow" y="1164"/>
<use href="#grow" y="1180"/>
<use href="#grow" y="1195"/>
<use href="#grow" y="1210"/>
<use href="#grow" y="1226"/>
<use href="#grow" y="1241"/>
<use href="#grow" y="1257"/>
<use href="#grow2" y="1272"/>
<use href="#grow" y="1287"/>
<use href="#grow" y="1303"/>
<use href="#grow" y="1318"/>
<use href="#grow" y="1334"/>
<use href="#grow" y="1349"/>
<rect x="909.00" y="133" width="2" height="1212" fill="#afafaf"/>
<rect x="919.00" y="133" width="2" height="1212" fill="#afafaf"/>
<rect x="996.20" y="133" width="2.2" height="1212" fill="#afafaf"/>
<rect x="1466.50" y="133" width="2.2" height="1212" fill="#afafaf"/>
<rect x="1544.80" y="133" width="2" height="1212" fill="#afafaf"/>
<rect x="1555.30" y="133" width="2" height="1212" fill="#afafaf"/>
<rect x="457.90" y="364.20" width="44.00" height="17.20" fill="none" stroke="#afafaf" stroke-width="2"/>
<rect x="560.50" y="365.90" width="44.00" height="17.20" fill="none" stroke="#afafaf" stroke-width="2"/>
<rect x="652.90" y="362.70" width="44.00" height="17.20" fill="none" stroke="#afafaf" stroke-width="2"/>
<rect x="270.50" y="683.30" width="44.00" height="17.20" fill="none" stroke="#afafaf" stroke-width="2"/>
<rect x="181.40" y="744.00" width="44.00" height="17.20" fill="none" stroke="#afafaf" stroke-width="2"/>
<rect x="270.50" y="744.00" width="44.00" height="17.20" fill="none" stroke="#afafaf" stroke-width="2"/>
<rect x="181.40" y="805.10" width="44.00" height="17.20" fill="none" stroke="#afafaf" stroke-width="2"/>
<rect x="270.50" y="805.10" width="44.00" height="17.20" fill="none" stroke="#afafaf" stroke-width="2"/>
<rect x="181.40" y="865.90" width="44.00" height="17.20" fill="none" stroke="#afafaf" stroke-width="2"/>
<rect x="181.40" y="926.40" width="44.00" height="17.20" fill="none" stroke="#afafaf" stroke-width="2"/>
<rect x="44.50" y="904.70" width="44.00" height="17.20" fill="none" stroke="#afafaf" stroke-width="2"/>
<rect x="331.40" y="910.90" width="44.00" height="17.20" fill="none" stroke="#afafaf" stroke-width="2"/>
<rect x="1108.00" y="349.90" width="48.00" height="24.60" fill="none" stroke="#afafaf" stroke-width="2"/>
<path d="M1111.30 428.20L1202.30 428.20L1202.30 469.50L1121.00 469.50L1111.30 459.00L1111.30 428.20Z" fill="none" stroke="#afafaf" stroke-width="2.2"/>
<rect x="1135.00" y="526.70" width="48.00" height="24.60" fill="none" stroke="#afafaf" stroke-width="2"/>
<rect x="1176.70" y="726.40" width="44.00" height="17.20" fill="none" stroke="#afafaf" stroke-width="2"/>
<rect x="1218.00" y="1156.00" width="44.00" height="16.00" fill="none" stroke="#afafaf" stroke-width="2"/>
<rect x="1156.40" y="1199.00" width="100.30" height="78.00" fill="none" stroke="#afafaf" stroke-width="2.2"/>
<rect x="1116.90" y="1218.00" width="15.00" height="40.00" fill="none" stroke="#afafaf" stroke-width="2"/>
<rect x="1280.60" y="1218.00" width="15.00" height="40.00" fill="none" stroke="#afafaf" stroke-width="2"/>
<rect x="904.00" y="133" width="1.7" height="1212" fill="#ff26e2"/>
<rect x="1012.40" y="133" width="1.7" height="1212" fill="#ff26e2"/>
<rect x="1450.80" y="133" width="1.7" height="1212" fill="#ff26e2"/>
<rect x="1560.80" y="133" width="1.7" height="1212" fill="#ff26e2"/>
<rect x="451.20" y="358.00" width="57.40" height="29.60" fill="none" stroke="#ff26e2" stroke-width="1.6"/>
<rect x="553.80" y="359.70" width="57.40" height="29.60" fill="none" stroke="#ff26e2" stroke-width="1.6"/>
<rect x="646.20" y="356.50" width="57.40" height="29.60" fill="none" stroke="#ff26e2" stroke-width="1.6"/>
<rect x="263.80" y="677.10" width="57.40" height="29.60" fill="none" stroke="#ff26e2" stroke-width="1.6"/>
<rect x="174.70" y="737.80" width="57.40" height="29.60" fill="none" stroke="#ff26e2" stroke-width="1.6"/>
<rect x="263.80" y="737.80" width="57.40" height="29.60" fill="none" stroke="#ff26e2" stroke-width="1.6"/>
<rect x="174.70" y="798.90" width="57.40" height="29.60" fill="none" stroke="#ff26e2" stroke-width="1.6"/>
<rect x="263.80" y="798.90" width="57.40" height="29.60" fill="none" stroke="#ff26e2" stroke-width="1.6"/>
<rect x="174.70" y="859.70" width="57.40" height="29.60" fill="none" stroke="#ff26e2" stroke-width="1.6"/>
<rect x="174.70" y="920.20" width="57.40" height="29.60" fill="none" stroke="#ff26e2" stroke-width="1.6"/>
<rect x="37.80" y="898.50" width="57.40" height="29.60" fill="none" stroke="#ff26e2" stroke-width="1.6"/>
<rect x="324.70" y="904.70" width="57.40" height="29.60" fill="none" stroke="#ff26e2" stroke-width="1.6"/>
<rect x="1068.20" y="60.00" width="328.60" height="273.30" fill="none" stroke="#ff26e2" stroke-width="1.6"/>
<rect x="1086.10" y="339.40" width="91.80" height="45.60" fill="none" stroke="#ff26e2" stroke-width="1.6"/>
<path d="M1140.30 390.30L1174.70 390.30L1174.70 421.90L1210.00 421.90L1210.00 477.40L1203.80 477.40L1203.80 509.30L1109.80 509.30L1109.80 477.40L1104.10 477.40L1104.10 421.90L1140.30 421.90Z" fill="none" stroke="#ff26e2" stroke-width="1.6"/>
<rect x="1113.10" y="516.20" width="91.80" height="45.60" fill="none" stroke="#ff26e2" stroke-width="1.6"/>
<rect x="1170.00" y="720.20" width="57.40" height="29.60" fill="none" stroke="#ff26e2" stroke-width="1.6"/>
<path d="M1117.00 754.00L1225.20 754.00L1225.20 757.60L1237.00 757.60L1237.00 829.00L1225.20 829.00L1225.20 831.70L1117.00 831.70L1117.00 829.00L1104.90 829.00L1104.90 757.60L1117.00 757.60Z" fill="none" stroke="#ff26e2" stroke-width="1.6"/>
<path d="M1141.40 875.00L1323.60 875.00L1323.60 887.50L1348.70 887.50L1348.70 912.20L1360.00 912.20L1360.00 1092.80L1348.70 1092.80L1348.70 1118.00L1323.60 1118.00L1323.60 1130.60L1141.40 1130.60L1141.40 1118.00L1116.90 1118.00L1116.90 1092.80L1105.00 1092.80L1105.00 912.20L1116.90 912.20L1116.90 887.50L1141.40 887.50Z" fill="none" stroke="#ff26e2" stroke-width="1.6"/>
<rect x="1210.80" y="1149.40" width="58.10" height="29.40" fill="none" stroke="#ff26e2" stroke-width="1.6"/>
<rect x="1141.00" y="1184.60" width="130.90" height="107.30" fill="none" stroke="#ff26e2" stroke-width="1.6"/>
<rect x="1110.20" y="1209.40" width="28.40" height="57.20" fill="none" stroke="#ff26e2" stroke-width="1.6"/>
<rect x="1273.90" y="1209.40" width="28.40" height="57.20" fill="none" stroke="#ff26e2" stroke-width="1.6"/>
<g transform="translate(957.00 879.00) rotate(-90)" fill="none" stroke="#afafaf" stroke-width="0.1724" stroke-linecap="round" stroke-linejoin="round"><path transform="translate(-21.17 -14.50) scale(29.000)" d="M0.45 0V0.75C0.45 0.92 0.35 1 0.2 1C0.1 1 0.03 0.96 0 0.92"/><path transform="translate(4.64 -14.50) scale(29.000)" d="M0.02 0.17C0.08 0.05 0.18 0 0.3 0C0.48 0 0.57 0.12 0.57 0.28C0.57 0.42 0.5 0.52 0.4 0.6L0 1H0.57"/></g>
<g transform="translate(1506.00 879.00) rotate(-90)" fill="none" stroke="#afafaf" stroke-width="0.1724" stroke-linecap="round" stroke-linejoin="round"><path transform="translate(-21.17 -14.50) scale(29.000)" d="M0.45 0V0.75C0.45 0.92 0.35 1 0.2 1C0.1 1 0.03 0.96 0 0.92"/><path transform="translate(4.64 -14.50) scale(29.000)" d="M0.02 0H0.55L0.27 0.38H0.33C0.5 0.38 0.57 0.52 0.57 0.68C0.57 0.88 0.47 1 0.28 1C0.15 1 0.07 0.95 0 0.88"/></g>
<g transform="translate(479.90 372.80)" fill="none" stroke="#afafaf" stroke-width="0.1412" stroke-linecap="round" stroke-linejoin="round"><path transform="translate(-10.92 -4.25) scale(8.500)" d="M0.57 0.15C0.5 0.05 0.4 0 0.3 0C0.1 0 0 0.2 0 0.5C0 0.8 0.1 1 0.3 1C0.4 1 0.5 0.95 0.57 0.85"/><path transform="translate(-2.42 -4.25) scale(8.500)" d="M0.08 0.27L0.29 0V1M0 1H0.57"/><path transform="translate(6.08 -4.25) scale(8.500)" d="M0.02 0.17C0.08 0.05 0.18 0 0.3 0C0.48 0 0.57 0.12 0.57 0.28C0.57 0.42 0.5 0.52 0.4 0.6L0 1H0.57"/></g>
<g transform="translate(479.90 407.30)" fill="none" stroke="#afafaf" stroke-width="0.1667" stroke-linecap="round" stroke-linejoin="round"><path transform="translate(-58.75 -15.00) scale(30.000)" d="M0.285 0C0.06 0 0 0.22 0 0.5C0 0.78 0.06 1 0.285 1C0.51 1 0.57 0.78 0.57 0.5C0.57 0.22 0.51 0 0.285 0Z"/><path transform="translate(-28.94 -15.00) scale(30.000)" d="M0.03 0.97L0.03 0.975"/><path transform="translate(-14.42 -15.00) scale(30.000)" d="M0.08 0.27L0.29 0V1M0 1H0.57"/><path transform="translate(16.08 -15.00) scale(30.000)" d="M0 0.31V0.78C0 0.93 0.08 1 0.22 1C0.33 1 0.43 0.93 0.47 0.85M0.47 0.31V1"/><path transform="translate(43.15 -15.00) scale(30.000)" d="M0.52 0H0V1M0 0.48H0.39"/></g>
<g transform="translate(582.50 374.50)" fill="none" stroke="#afafaf" stroke-width="0.1412" stroke-linecap="round" stroke-linejoin="round"><path transform="translate(-10.92 -4.25) scale(8.500)" d="M0.57 0.15C0.5 0.05 0.4 0 0.3 0C0.1 0 0 0.2 0 0.5C0 0.8 0.1 1 0.3 1C0.4 1 0.5 0.95 0.57 0.85"/><path transform="translate(-2.42 -4.25) scale(8.500)" d="M0.08 0.27L0.29 0V1M0 1H0.57"/><path transform="translate(6.08 -4.25) scale(8.500)" d="M0.08 0.27L0.29 0V1M0 1H0.57"/></g>
<g transform="translate(582.50 409.00)" fill="none" stroke="#afafaf" stroke-width="0.1667" stroke-linecap="round" stroke-linejoin="round"><path transform="translate(-58.75 -15.00) scale(30.000)" d="M0.285 0C0.06 0 0 0.22 0 0.5C0 0.78 0.06 1 0.285 1C0.51 1 0.57 0.78 0.57 0.5C0.57 0.22 0.51 0 0.285 0Z"/><path transform="translate(-28.94 -15.00) scale(30.000)" d="M0.03 0.97L0.03 0.975"/><path transform="translate(-14.42 -15.00) scale(30.000)" d="M0.08 0.27L0.29 0V1M0 1H0.57"/><path transform="translate(16.08 -15.00) scale(30.000)" d="M0 0.31V0.78C0 0.93 0.08 1 0.22 1C0.33 1 0.43 0.93 0.47 0.85M0.47 0.31V1"/><path transform="translate(43.15 -15.00) scale(30.000)" d="M0.52 0H0V1M0 0.48H0.39"/></g>
<g transform="translate(674.90 371.30)" fill="none" stroke="#afafaf" stroke-width="0.1412" stroke-linecap="round" stroke-linejoin="round"><path transform="translate(-10.92 -4.25) scale(8.500)" d="M0.57 0.15C0.5 0.05 0.4 0 0.3 0C0.1 0 0 0.2 0 0.5C0 0.8 0.1 1 0.3 1C0.4 1 0.5 0.95 0.57 0.85"/><path transform="translate(-2.42 -4.25) scale(8.500)" d="M0.08 0.27L0.29 0V1M0 1H0.57"/><path transform="translate(6.08 -4.25) scale(8.500)" d="M0.285 0C0.06 0 0 0.22 0 0.5C0 0.78 0.06 1 0.285 1C0.51 1 0.57 0.78 0.57 0.5C0.57 0.22 0.51 0 0.285 0Z"/></g>
<g transform="translate(674.90 405.80)" fill="none" stroke="#afafaf" stroke-width="0.1667" stroke-linecap="round" stroke-linejoin="round"><path transform="translate(-37.15 -15.00) scale(30.000)" d="M0.08 0.27L0.29 0V1M0 1H0.57"/><path transform="translate(-6.07 -15.00) scale(30.000)" d="M0 0.31V0.78C0 0.93 0.08 1 0.22 1C0.33 1 0.43 0.93 0.47 0.85M0.47 0.31V1"/><path transform="translate(21.55 -15.00) scale(30.000)" d="M0.52 0H0V1M0 0.48H0.39"/></g>
<g transform="translate(292.50 691.90)" fill="none" stroke="#afafaf" stroke-width="0.1412" stroke-linecap="round" stroke-linejoin="round"><path transform="translate(-6.67 -4.25) scale(8.500)" d="M0.57 0.15C0.5 0.05 0.4 0 0.3 0C0.1 0 0 0.2 0 0.5C0 0.8 0.1 1 0.3 1C0.4 1 0.5 0.95 0.57 0.85"/><path transform="translate(1.83 -4.25) scale(8.500)" d="M0 0H0.57L0.17 1"/></g>
<g transform="translate(292.50 726.40)" fill="none" stroke="#afafaf" stroke-width="0.1667" stroke-linecap="round" stroke-linejoin="round"><path transform="translate(-58.75 -15.00) scale(30.000)" d="M0.285 0C0.06 0 0 0.22 0 0.5C0 0.78 0.06 1 0.285 1C0.51 1 0.57 0.78 0.57 0.5C0.57 0.22 0.51 0 0.285 0Z"/><path transform="translate(-28.94 -15.00) scale(30.000)" d="M0.03 0.97L0.03 0.975"/><path transform="translate(-14.42 -15.00) scale(30.000)" d="M0.08 0.27L0.29 0V1M0 1H0.57"/><path transform="translate(16.08 -15.00) scale(30.000)" d="M0 0.31V0.78C0 0.93 0.08 1 0.22 1C0.33 1 0.43 0.93 0.47 0.85M0.47 0.31V1"/><path transform="translate(43.15 -15.00) scale(30.000)" d="M0.52 0H0V1M0 0.48H0.39"/></g>
<g transform="translate(203.40 752.60)" fill="none" stroke="#afafaf" stroke-width="0.1412" stroke-linecap="round" stroke-linejoin="round"><path transform="translate(-6.67 -4.25) scale(8.500)" d="M0.57 0.15C0.5 0.05 0.4 0 0.3 0C0.1 0 0 0.2 0 0.5C0 0.8 0.1 1 0.3 1C0.4 1 0.5 0.95 0.57 0.85"/><path transform="translate(1.83 -4.25) scale(8.500)" d="M0.02 0.17C0.08 0.05 0.18 0 0.3 0C0.48 0 0.57 0.12 0.57 0.28C0.57 0.42 0.5 0.52 0.4 0.6L0 1H0.57"/></g>
<g transform="translate(203.40 787.10)" fill="none" stroke="#afafaf" stroke-width="0.1667" stroke-linecap="round" stroke-linejoin="round"><path transform="translate(-58.75 -15.00) scale(30.000)" d="M0.285 0C0.06 0 0 0.22 0 0.5C0 0.78 0.06 1 0.285 1C0.51 1 0.57 0.78 0.57 0.5C0.57 0.22 0.51 0 0.285 0Z"/><path transform="translate(-28.94 -15.00) scale(30.000)" d="M0.03 0.97L0.03 0.975"/><path transform="translate(-14.42 -15.00) scale(30.000)" d="M0.08 0.27L0.29 0V1M0 1H0.57"/><path transform="translate(16.08 -15.00) scale(30.000)" d="M0 0.31V0.78C0 0.93 0.08 1 0.22 1C0.33 1 0.43 0.93 0.47 0.85M0.47 0.31V1"/><path transform="translate(43.15 -15.00) scale(30.000)" d="M0.52 0H0V1M0 0.48H0.39"/></g>
<g transform="translate(292.50 752.60)" fill="none" stroke="#afafaf" stroke-width="0.1412" stroke-linecap="round" stroke-linejoin="round"><path transform="translate(-6.67 -4.25) scale(8.500)" d="M0.57 0.15C0.5 0.05 0.4 0 0.3 0C0.1 0 0 0.2 0 0.5C0 0.8 0.1 1 0.3 1C0.4 1 0.5 0.95 0.57 0.85"/><path transform="translate(1.83 -4.25) scale(8.500)" d="M0.52 0H0.38C0.15 0 0 0.2 0 0.55C0 0.85 0.1 1 0.29 1C0.47 1 0.57 0.88 0.57 0.7C0.57 0.52 0.47 0.42 0.3 0.42C0.15 0.42 0.05 0.5 0 0.6"/></g>
<g transform="translate(292.50 787.10)" fill="none" stroke="#afafaf" stroke-width="0.1667" stroke-linecap="round" stroke-linejoin="round"><path transform="translate(-58.75 -15.00) scale(30.000)" d="M0.285 0C0.06 0 0 0.22 0 0.5C0 0.78 0.06 1 0.285 1C0.51 1 0.57 0.78 0.57 0.5C0.57 0.22 0.51 0 0.285 0Z"/><path transform="translate(-28.94 -15.00) scale(30.000)" d="M0.03 0.97L0.03 0.975"/><path transform="translate(-14.42 -15.00) scale(30.000)" d="M0.08 0.27L0.29 0V1M0 1H0.57"/><path transform="translate(16.08 -15.00) scale(30.000)" d="M0 0.31V0.78C0 0.93 0.08 1 0.22 1C0.33 1 0.43 0.93 0.47 0.85M0.47 0.31V1"/><path transform="translate(43.15 -15.00) scale(30.000)" d="M0.52 0H0V1M0 0.48H0.39"/></g>
<g transform="translate(203.40 813.70)" fill="none" stroke="#afafaf" stroke-width="0.1412" stroke-linecap="round" stroke-linejoin="round"><path transform="translate(-6.67 -4.25) scale(8.500)" d="M0.57 0.15C0.5 0.05 0.4 0 0.3 0C0.1 0 0 0.2 0 0.5C0 0.8 0.1 1 0.3 1C0.4 1 0.5 0.95 0.57 0.85"/><path transform="translate(1.83 -4.25) scale(8.500)" d="M0.02 0H0.55L0.27 0.38H0.33C0.5 0.38 0.57 0.52 0.57 0.68C0.57 0.88 0.47 1 0.28 1C0.15 1 0.07 0.95 0 0.88"/></g>
<g transform="translate(203.40 848.20)" fill="none" stroke="#afafaf" stroke-width="0.1667" stroke-linecap="round" stroke-linejoin="round"><path transform="translate(-58.75 -15.00) scale(30.000)" d="M0.285 0C0.06 0 0 0.22 0 0.5C0 0.78 0.06 1 0.285 1C0.51 1 0.57 0.78 0.57 0.5C0.57 0.22 0.51 0 0.285 0Z"/><path transform="translate(-28.94 -15.00) scale(30.000)" d="M0.03 0.97L0.03 0.975"/><path transform="translate(-14.42 -15.00) scale(30.000)" d="M0.08 0.27L0.29 0V1M0 1H0.57"/><path transform="translate(16.08 -15.00) scale(30.000)" d="M0 0.31V0.78C0 0.93 0.08 1 0.22 1C0.33 1 0.43 0.93 0.47 0.85M0.47 0.31V1"/><path transform="translate(43.15 -15.00) scale(30.000)" d="M0.52 0H0V1M0 0.48H0.39"/></g>
<g transform="translate(292.50 813.70)" fill="none" stroke="#afafaf" stroke-width="0.1412" stroke-linecap="round" stroke-linejoin="round"><path transform="translate(-6.67 -4.25) scale(8.500)" d="M0.57 0.15C0.5 0.05 0.4 0 0.3 0C0.1 0 0 0.2 0 0.5C0 0.8 0.1 1 0.3 1C0.4 1 0.5 0.95 0.57 0.85"/><path transform="translate(1.83 -4.25) scale(8.500)" d="M0.08 0.27L0.29 0V1M0 1H0.57"/></g>
<g transform="translate(292.50 848.20)" fill="none" stroke="#afafaf" stroke-width="0.1667" stroke-linecap="round" stroke-linejoin="round"><path transform="translate(-58.75 -15.00) scale(30.000)" d="M0.285 0C0.06 0 0 0.22 0 0.5C0 0.78 0.06 1 0.285 1C0.51 1 0.57 0.78 0.57 0.5C0.57 0.22 0.51 0 0.285 0Z"/><path transform="translate(-28.94 -15.00) scale(30.000)" d="M0.03 0.97L0.03 0.975"/><path transform="translate(-14.42 -15.00) scale(30.000)" d="M0.08 0.27L0.29 0V1M0 1H0.57"/><path transform="translate(16.08 -15.00) scale(30.000)" d="M0 0.31V0.78C0 0.93 0.08 1 0.22 1C0.33 1 0.43 0.93 0.47 0.85M0.47 0.31V1"/><path transform="translate(43.15 -15.00) scale(30.000)" d="M0.52 0H0V1M0 0.48H0.39"/></g>
<g transform="translate(203.40 874.50)" fill="none" stroke="#afafaf" stroke-width="0.1412" stroke-linecap="round" stroke-linejoin="round"><path transform="translate(-6.74 -4.25) scale(8.500)" d="M0.57 0.15C0.5 0.05 0.4 0 0.3 0C0.1 0 0 0.2 0 0.5C0 0.8 0.1 1 0.3 1C0.4 1 0.5 0.95 0.57 0.85"/><path transform="translate(1.64 -4.25) scale(8.500)" d="M0.44 1V0L0 0.68H0.6"/></g>
<g transform="translate(203.40 909.00)" fill="none" stroke="#afafaf" stroke-width="0.1667" stroke-linecap="round" stroke-linejoin="round"><path transform="translate(-58.75 -15.00) scale(30.000)" d="M0.285 0C0.06 0 0 0.22 0 0.5C0 0.78 0.06 1 0.285 1C0.51 1 0.57 0.78 0.57 0.5C0.57 0.22 0.51 0 0.285 0Z"/><path transform="translate(-28.94 -15.00) scale(30.000)" d="M0.03 0.97L0.03 0.975"/><path transform="translate(-14.42 -15.00) scale(30.000)" d="M0.08 0.27L0.29 0V1M0 1H0.57"/><path transform="translate(16.08 -15.00) scale(30.000)" d="M0 0.31V0.78C0 0.93 0.08 1 0.22 1C0.33 1 0.43 0.93 0.47 0.85M0.47 0.31V1"/><path transform="translate(43.15 -15.00) scale(30.000)" d="M0.52 0H0V1M0 0.48H0.39"/></g>
<g transform="translate(203.40 935.00)" fill="none" stroke="#afafaf" stroke-width="0.1412" stroke-linecap="round" stroke-linejoin="round"><path transform="translate(-6.67 -4.25) scale(8.500)" d="M0.57 0.15C0.5 0.05 0.4 0 0.3 0C0.1 0 0 0.2 0 0.5C0 0.8 0.1 1 0.3 1C0.4 1 0.5 0.95 0.57 0.85"/><path transform="translate(1.83 -4.25) scale(8.500)" d="M0.53 0H0.06L0.02 0.45C0.1 0.4 0.2 0.37 0.3 0.37C0.47 0.37 0.57 0.5 0.57 0.68C0.57 0.88 0.47 1 0.28 1C0.15 1 0.06 0.95 0 0.88"/></g>
<g transform="translate(203.40 969.50)" fill="none" stroke="#afafaf" stroke-width="0.1667" stroke-linecap="round" stroke-linejoin="round"><path transform="translate(-58.75 -15.00) scale(30.000)" d="M0.285 0C0.06 0 0 0.22 0 0.5C0 0.78 0.06 1 0.285 1C0.51 1 0.57 0.78 0.57 0.5C0.57 0.22 0.51 0 0.285 0Z"/><path transform="translate(-28.94 -15.00) scale(30.000)" d="M0.03 0.97L0.03 0.975"/><path transform="translate(-14.42 -15.00) scale(30.000)" d="M0.08 0.27L0.29 0V1M0 1H0.57"/><path transform="translate(16.08 -15.00) scale(30.000)" d="M0 0.31V0.78C0 0.93 0.08 1 0.22 1C0.33 1 0.43 0.93 0.47 0.85M0.47 0.31V1"/><path transform="translate(43.15 -15.00) scale(30.000)" d="M0.52 0H0V1M0 0.48H0.39"/></g>
<g transform="translate(66.50 913.30)" fill="none" stroke="#afafaf" stroke-width="0.1412" stroke-linecap="round" stroke-linejoin="round"><path transform="translate(-2.42 -4.25) scale(8.500)" d="M0.57 0.15C0.5 0.05 0.4 0 0.3 0C0.1 0 0 0.2 0 0.5C0 0.8 0.1 1 0.3 1C0.4 1 0.5 0.95 0.57 0.85"/></g>
<g transform="translate(66.50 947.80)" fill="none" stroke="#afafaf" stroke-width="0.1667" stroke-linecap="round" stroke-linejoin="round"><path transform="translate(-37.15 -15.00) scale(30.000)" d="M0.08 0.27L0.29 0V1M0 1H0.57"/><path transform="translate(-6.07 -15.00) scale(30.000)" d="M0 0.31V0.78C0 0.93 0.08 1 0.22 1C0.33 1 0.43 0.93 0.47 0.85M0.47 0.31V1"/><path transform="translate(21.55 -15.00) scale(30.000)" d="M0.52 0H0V1M0 0.48H0.39"/></g>
<g transform="translate(353.40 919.50)" fill="none" stroke="#afafaf" stroke-width="0.1412" stroke-linecap="round" stroke-linejoin="round"><path transform="translate(-6.67 -4.25) scale(8.500)" d="M0.57 0.15C0.5 0.05 0.4 0 0.3 0C0.1 0 0 0.2 0 0.5C0 0.8 0.1 1 0.3 1C0.4 1 0.5 0.95 0.57 0.85"/><path transform="translate(1.83 -4.25) scale(8.500)" d="M0.285 0.47C0.12 0.47 0.04 0.38 0.04 0.24C0.04 0.09 0.13 0 0.285 0C0.44 0 0.53 0.09 0.53 0.24C0.53 0.38 0.45 0.47 0.285 0.47C0.1 0.47 0 0.58 0 0.73C0 0.9 0.1 1 0.285 1C0.47 1 0.57 0.9 0.57 0.73C0.57 0.58 0.47 0.47 0.285 0.47Z"/></g>
<g transform="translate(353.40 954.00)" fill="none" stroke="#afafaf" stroke-width="0.1667" stroke-linecap="round" stroke-linejoin="round"><path transform="translate(-58.75 -15.00) scale(30.000)" d="M0.285 0C0.06 0 0 0.22 0 0.5C0 0.78 0.06 1 0.285 1C0.51 1 0.57 0.78 0.57 0.5C0.57 0.22 0.51 0 0.285 0Z"/><path transform="translate(-28.94 -15.00) scale(30.000)" d="M0.03 0.97L0.03 0.975"/><path transform="translate(-14.42 -15.00) scale(30.000)" d="M0.08 0.27L0.29 0V1M0 1H0.57"/><path transform="translate(16.08 -15.00) scale(30.000)" d="M0 0.31V0.78C0 0.93 0.08 1 0.22 1C0.33 1 0.43 0.93 0.47 0.85M0.47 0.31V1"/><path transform="translate(43.15 -15.00) scale(30.000)" d="M0.52 0H0V1M0 0.48H0.39"/></g>
<g transform="translate(1232.00 170.00)" fill="none" stroke="#afafaf" stroke-width="0.1639" stroke-linecap="round" stroke-linejoin="round"><path transform="translate(-21.65 -15.25) scale(30.500)" d="M0.45 0V0.75C0.45 0.92 0.35 1 0.2 1C0.1 1 0.03 0.96 0 0.92"/><path transform="translate(4.26 -15.25) scale(30.500)" d="M0.08 0.27L0.29 0V1M0 1H0.57"/></g>
<g transform="translate(1132.50 316.50)" fill="none" stroke="#afafaf" stroke-width="0.1695" stroke-linecap="round" stroke-linejoin="round"><path transform="translate(-53.50 -14.75) scale(29.500)" d="M0.08 0.27L0.29 0V1M0 1H0.57"/><path transform="translate(-22.26 -14.75) scale(29.500)" d="M0.285 0C0.06 0 0 0.22 0 0.5C0 0.78 0.06 1 0.285 1C0.51 1 0.57 0.78 0.57 0.5C0.57 0.22 0.51 0 0.285 0Z"/><path transform="translate(9.68 -14.75) scale(29.500)" d="M0 0.31V0.78C0 0.93 0.08 1 0.22 1C0.33 1 0.43 0.93 0.47 0.85M0.47 0.31V1"/><path transform="translate(38.16 -14.75) scale(29.500)" d="M0.52 0H0V1M0 0.48H0.39"/></g>
<g transform="translate(1132.00 362.20)" fill="none" stroke="#afafaf" stroke-width="0.1529" stroke-linecap="round" stroke-linejoin="round"><path transform="translate(-21.84 -8.50) scale(17.000)" d="M0.57 0.15C0.5 0.05 0.4 0 0.3 0C0.1 0 0 0.2 0 0.5C0 0.8 0.1 1 0.3 1C0.4 1 0.5 0.95 0.57 0.85"/><path transform="translate(-4.84 -8.50) scale(17.000)" d="M0.08 0.27L0.29 0V1M0 1H0.57"/><path transform="translate(12.16 -8.50) scale(17.000)" d="M0.02 0H0.55L0.27 0.38H0.33C0.5 0.38 0.57 0.52 0.57 0.68C0.57 0.88 0.47 1 0.28 1C0.15 1 0.07 0.95 0 0.88"/></g>
<g transform="translate(1157.00 455.00) rotate(-90)" fill="none" stroke="#afafaf" stroke-width="0.1571" stroke-linecap="round" stroke-linejoin="round"><path transform="translate(-10.99 -7.00) scale(14.000)" d="M0 0V0.7C0 0.9 0.1 1 0.285 1C0.47 1 0.57 0.9 0.57 0.7V0"/><path transform="translate(3.01 -7.00) scale(14.000)" d="M0.02 0H0.55L0.27 0.38H0.33C0.5 0.38 0.57 0.52 0.57 0.68C0.57 0.88 0.47 1 0.28 1C0.15 1 0.07 0.95 0 0.88"/></g>
<g transform="translate(1230.40 448.00) rotate(-90)" fill="none" stroke="#afafaf" stroke-width="0.1634" stroke-linecap="round" stroke-linejoin="round"><path transform="translate(-226.15 -15.30) scale(30.600)" d="M0 1V0L0.31 0.62L0.62 0V1"/><path transform="translate(-192.64 -15.30) scale(30.600)" d="M0.57 0.15C0.5 0.05 0.4 0 0.3 0C0.1 0 0 0.2 0 0.5C0 0.8 0.1 1 0.3 1C0.4 1 0.5 0.95 0.57 0.85"/><path transform="translate(-160.70 -15.30) scale(30.600)" d="M0 1V0H0.3C0.47 0 0.57 0.1 0.57 0.28C0.57 0.45 0.47 0.55 0.3 0.55H0"/><path transform="translate(-128.75 -15.30) scale(30.600)" d="M0.08 0.27L0.29 0V1M0 1H0.57"/><path transform="translate(-96.81 -15.30) scale(30.600)" d="M0 0H0.57L0.17 1"/><path transform="translate(-64.86 -15.30) scale(30.600)" d="M0.285 0C0.06 0 0 0.22 0 0.5C0 0.78 0.06 1 0.285 1C0.51 1 0.57 0.78 0.57 0.5C0.57 0.22 0.51 0 0.285 0Z"/><path transform="translate(-32.92 -15.30) scale(30.600)" d="M0.285 0C0.06 0 0 0.22 0 0.5C0 0.78 0.06 1 0.285 1C0.51 1 0.57 0.78 0.57 0.5C0.57 0.22 0.51 0 0.285 0Z"/><path transform="translate(-1.18 -15.30) scale(30.600)" d="M0 0.31L0.5 1M0.5 0.31L0 1"/><path transform="translate(29.49 -15.30) scale(30.600)" d="M0 0.6H0.5"/><path transform="translate(60.36 -15.30) scale(30.600)" d="M0.02 0H0.55L0.27 0.38H0.33C0.5 0.38 0.57 0.52 0.57 0.68C0.57 0.88 0.47 1 0.28 1C0.15 1 0.07 0.95 0 0.88"/><path transform="translate(92.30 -15.30) scale(30.600)" d="M0.02 0H0.55L0.27 0.38H0.33C0.5 0.38 0.57 0.52 0.57 0.68C0.57 0.88 0.47 1 0.28 1C0.15 1 0.07 0.95 0 0.88"/><path transform="translate(124.25 -15.30) scale(30.600)" d="M0.285 0C0.06 0 0 0.22 0 0.5C0 0.78 0.06 1 0.285 1C0.51 1 0.57 0.78 0.57 0.5C0.57 0.22 0.51 0 0.285 0Z"/><path transform="translate(155.99 -15.30) scale(30.600)" d="M0 0.31L0.5 1M0.5 0.31L0 1"/><path transform="translate(181.62 -15.30) scale(30.600)" d="M0 0H0.62M0.31 0V1"/><path transform="translate(207.18 -15.30) scale(30.600)" d="M0 0H0.62M0.31 0V1"/></g>
<g transform="translate(1157.50 492.50)" fill="none" stroke="#afafaf" stroke-width="0.1695" stroke-linecap="round" stroke-linejoin="round"><path transform="translate(-52.00 -14.75) scale(29.500)" d="M0.08 0.27L0.29 0V1M0 1H0.57"/><path transform="translate(-21.79 -14.75) scale(29.500)" d="M0.285 0C0.06 0 0 0.22 0 0.5C0 0.78 0.06 1 0.285 1C0.51 1 0.57 0.78 0.57 0.5C0.57 0.22 0.51 0 0.285 0Z"/><path transform="translate(9.15 -14.75) scale(29.500)" d="M0 0.31V0.78C0 0.93 0.08 1 0.22 1C0.33 1 0.43 0.93 0.47 0.85M0.47 0.31V1"/><path transform="translate(36.66 -14.75) scale(29.500)" d="M0.52 0H0V1M0 0.48H0.39"/></g>
<g transform="translate(1159.00 539.00)" fill="none" stroke="#afafaf" stroke-width="0.1529" stroke-linecap="round" stroke-linejoin="round"><path transform="translate(-21.97 -8.50) scale(17.000)" d="M0.57 0.15C0.5 0.05 0.4 0 0.3 0C0.1 0 0 0.2 0 0.5C0 0.8 0.1 1 0.3 1C0.4 1 0.5 0.95 0.57 0.85"/><path transform="translate(-4.97 -8.50) scale(17.000)" d="M0.08 0.27L0.29 0V1M0 1H0.57"/><path transform="translate(11.77 -8.50) scale(17.000)" d="M0.44 1V0L0 0.68H0.6"/></g>
<g transform="translate(1198.80 698.60)" fill="none" stroke="#afafaf" stroke-width="0.1695" stroke-linecap="round" stroke-linejoin="round"><path transform="translate(-58.00 -14.75) scale(29.500)" d="M0.285 0C0.06 0 0 0.22 0 0.5C0 0.78 0.06 1 0.285 1C0.51 1 0.57 0.78 0.57 0.5C0.57 0.22 0.51 0 0.285 0Z"/><path transform="translate(-28.58 -14.75) scale(29.500)" d="M0.03 0.97L0.03 0.975"/><path transform="translate(-14.21 -14.75) scale(29.500)" d="M0.08 0.27L0.29 0V1M0 1H0.57"/><path transform="translate(15.92 -14.75) scale(29.500)" d="M0 0.31V0.78C0 0.93 0.08 1 0.22 1C0.33 1 0.43 0.93 0.47 0.85M0.47 0.31V1"/><path transform="translate(42.66 -14.75) scale(29.500)" d="M0.52 0H0V1M0 0.48H0.39"/></g>
<g transform="translate(1198.70 735.00)" fill="none" stroke="#afafaf" stroke-width="0.1412" stroke-linecap="round" stroke-linejoin="round"><path transform="translate(-6.67 -4.25) scale(8.500)" d="M0.57 0.15C0.5 0.05 0.4 0 0.3 0C0.1 0 0 0.2 0 0.5C0 0.8 0.1 1 0.3 1C0.4 1 0.5 0.95 0.57 0.85"/><path transform="translate(1.83 -4.25) scale(8.500)" d="M0.05 1H0.2C0.42 1 0.57 0.8 0.57 0.45C0.57 0.15 0.47 0 0.28 0C0.1 0 0 0.12 0 0.3C0 0.48 0.1 0.58 0.27 0.58C0.42 0.58 0.52 0.5 0.57 0.4"/></g>
<g transform="translate(1171.60 791.50)" fill="none" stroke="#afafaf" stroke-width="0.1818" stroke-linecap="round" stroke-linejoin="round"><path transform="translate(-18.10 -11.00) scale(22.000)" d="M0 0V0.7C0 0.9 0.1 1 0.285 1C0.47 1 0.57 0.9 0.57 0.7V0"/><path transform="translate(4.90 -11.00) scale(22.000)" d="M0.44 1V0L0 0.68H0.6"/></g>
<g transform="translate(1171.90 852.00)" fill="none" stroke="#afafaf" stroke-width="0.1650" stroke-linecap="round" stroke-linejoin="round"><path transform="translate(-203.40 -15.15) scale(30.300)" d="M0 0L0.19 1L0.375 0.4L0.56 1L0.75 0"/><path transform="translate(-170.90 -15.15) scale(30.300)" d="M0.02 0.17C0.08 0.05 0.18 0 0.3 0C0.48 0 0.57 0.12 0.57 0.28C0.57 0.42 0.5 0.52 0.4 0.6L0 1H0.57"/><path transform="translate(-141.12 -15.15) scale(30.300)" d="M0.53 0H0.06L0.02 0.45C0.1 0.4 0.2 0.37 0.3 0.37C0.47 0.37 0.57 0.5 0.57 0.68C0.57 0.88 0.47 1 0.28 1C0.15 1 0.06 0.95 0 0.88"/><path transform="translate(-111.80 -15.15) scale(30.300)" d="M0.3 0C0.06 0 0 0.22 0 0.5C0 0.78 0.06 1 0.3 1C0.54 1 0.6 0.78 0.6 0.5C0.6 0.22 0.54 0 0.3 0ZM0.22 0.82C0.3 0.74 0.4 0.74 0.46 0.82L0.64 1.03"/><path transform="translate(-81.57 -15.15) scale(30.300)" d="M0.08 0.27L0.29 0V1M0 1H0.57"/><path transform="translate(-51.79 -15.15) scale(30.300)" d="M0.52 0H0.38C0.15 0 0 0.2 0 0.55C0 0.85 0.1 1 0.29 1C0.47 1 0.57 0.88 0.57 0.7C0.57 0.52 0.47 0.42 0.3 0.42C0.15 0.42 0.05 0.5 0 0.6"/><path transform="translate(-21.68 -15.15) scale(30.300)" d="M0.45 0V0.75C0.45 0.92 0.35 1 0.2 1C0.1 1 0.03 0.96 0 0.92"/><path transform="translate(4.03 -15.15) scale(30.300)" d="M0 0L0.31 1L0.62 0"/><path transform="translate(34.56 -15.15) scale(30.300)" d="M0 0V0.7C0 0.9 0.1 1 0.285 1C0.47 1 0.57 0.9 0.57 0.7V0"/><path transform="translate(63.89 -15.15) scale(30.300)" d="M0 0L0.6 1M0.6 0L0 1"/><path transform="translate(95.16 -15.15) scale(30.300)" d="M0 0V1"/><path transform="translate(108.25 -15.15) scale(30.300)" d="M0.3 0C0.06 0 0 0.22 0 0.5C0 0.78 0.06 1 0.3 1C0.54 1 0.6 0.78 0.6 0.5C0.6 0.22 0.54 0 0.3 0ZM0.22 0.82C0.3 0.74 0.4 0.74 0.46 0.82L0.64 1.03"/><path transform="translate(158.57 -15.15) scale(30.300)" d="M0 0H0.62M0.31 0V1"/><path transform="translate(186.13 -15.15) scale(30.300)" d="M0 1V0H0.3C0.47 0 0.57 0.1 0.57 0.27C0.57 0.43 0.47 0.53 0.3 0.53H0M0.3 0.53L0.57 1"/></g>
<g transform="translate(1239.70 1125.00)" fill="none" stroke="#afafaf" stroke-width="0.1667" stroke-linecap="round" stroke-linejoin="round"><path transform="translate(-23.20 -15.00) scale(30.000)" d="M0.08 0.27L0.29 0V1M0 1H0.57"/><path transform="translate(6.10 -15.00) scale(30.000)" d="M0 0V1M0.57 0L0 0.65M0.2 0.45L0.57 1"/></g>
<g transform="translate(1172.00 1160.70)" fill="none" stroke="#afafaf" stroke-width="0.1667" stroke-linecap="round" stroke-linejoin="round"><path transform="translate(-49.50 -15.00) scale(30.000)" d="M0.08 0.27L0.29 0V1M0 1H0.57"/><path transform="translate(-21.10 -15.00) scale(30.000)" d="M0.02 0.17C0.08 0.05 0.18 0 0.3 0C0.48 0 0.57 0.12 0.57 0.28C0.57 0.42 0.5 0.52 0.4 0.6L0 1H0.57"/><path transform="translate(7.64 -15.00) scale(30.000)" d="M0 0.31V1.3M0 0.42C0.08 0.35 0.16 0.31 0.25 0.31C0.42 0.31 0.5 0.45 0.5 0.655C0.5 0.86 0.42 1 0.25 1C0.16 1 0.08 0.96 0 0.9"/><path transform="translate(33.90 -15.00) scale(30.000)" d="M0.52 0H0V1M0 0.48H0.39"/></g>
<g transform="translate(1234.10 1160.70)" fill="none" stroke="#afafaf" stroke-width="0.1667" stroke-linecap="round" stroke-linejoin="round"><path transform="translate(-82.60 -15.00) scale(30.000)" d="M0 1V0H0.3C0.47 0 0.57 0.1 0.57 0.27C0.57 0.43 0.47 0.53 0.3 0.53H0M0.3 0.53L0.57 1"/><path transform="translate(-52.98 -15.00) scale(30.000)" d="M0 1V0H0.3C0.47 0 0.57 0.1 0.57 0.28C0.57 0.45 0.47 0.55 0.3 0.55H0"/><path transform="translate(-23.36 -15.00) scale(30.000)" d="M0.02 0.17C0.08 0.05 0.18 0 0.3 0C0.48 0 0.57 0.12 0.57 0.28C0.57 0.42 0.5 0.52 0.4 0.6L0 1H0.57"/><path transform="translate(6.26 -15.00) scale(30.000)" d="M0.285 0C0.06 0 0 0.22 0 0.5C0 0.78 0.06 1 0.285 1C0.51 1 0.57 0.78 0.57 0.5C0.57 0.22 0.51 0 0.285 0Z"/><path transform="translate(35.43 -15.00) scale(30.000)" d="M0.44 1V0L0 0.68H0.6"/><path transform="translate(65.50 -15.00) scale(30.000)" d="M0.285 0C0.06 0 0 0.22 0 0.5C0 0.78 0.06 1 0.285 1C0.51 1 0.57 0.78 0.57 0.5C0.57 0.22 0.51 0 0.285 0Z"/></g>
<g transform="translate(1239.80 1164.00)" fill="none" stroke="#afafaf" stroke-width="0.1500" stroke-linecap="round" stroke-linejoin="round"><path transform="translate(-7.85 -5.00) scale(10.000)" d="M0 1V0H0.3C0.47 0 0.57 0.1 0.57 0.27C0.57 0.43 0.47 0.53 0.3 0.53H0M0.3 0.53L0.57 1"/><path transform="translate(2.15 -5.00) scale(10.000)" d="M0.08 0.27L0.29 0V1M0 1H0.57"/></g>
<g transform="translate(1205.20 1236.50)" fill="none" stroke="#afafaf" stroke-width="0.1739" stroke-linecap="round" stroke-linejoin="round"><path transform="translate(-12.80 -11.50) scale(23.000)" d="M0 0L0.3 0.5L0.6 0M0.3 0.5V1"/><path transform="translate(-0.31 -11.50) scale(23.000)" d="M0.08 0.27L0.29 0V1M0 1H0.57"/></g>
<g transform="translate(1088.00 1238.00) rotate(-90)" fill="none" stroke="#afafaf" stroke-width="0.1634" stroke-linecap="round" stroke-linejoin="round"><path transform="translate(-52.50 -15.30) scale(30.600)" d="M0.02 0H0.55L0.27 0.38H0.33C0.5 0.38 0.57 0.52 0.57 0.68C0.57 0.88 0.47 1 0.28 1C0.15 1 0.07 0.95 0 0.88"/><path transform="translate(-22.15 -15.30) scale(30.600)" d="M0.02 0H0.55L0.27 0.38H0.33C0.5 0.38 0.57 0.52 0.57 0.68C0.57 0.88 0.47 1 0.28 1C0.15 1 0.07 0.95 0 0.88"/><path transform="translate(8.52 -15.30) scale(30.600)" d="M0 0.31V1.3M0 0.42C0.08 0.35 0.16 0.31 0.25 0.31C0.42 0.31 0.5 0.45 0.5 0.655C0.5 0.86 0.42 1 0.25 1C0.16 1 0.08 0.96 0 0.9"/><path transform="translate(36.59 -15.30) scale(30.600)" d="M0.52 0H0V1M0 0.48H0.39"/></g>
<g transform="translate(1326.50 1238.00) rotate(-90)" fill="none" stroke="#afafaf" stroke-width="0.1634" stroke-linecap="round" stroke-linejoin="round"><path transform="translate(-52.50 -15.30) scale(30.600)" d="M0.02 0H0.55L0.27 0.38H0.33C0.5 0.38 0.57 0.52 0.57 0.68C0.57 0.88 0.47 1 0.28 1C0.15 1 0.07 0.95 0 0.88"/><path transform="translate(-22.15 -15.30) scale(30.600)" d="M0.02 0H0.55L0.27 0.38H0.33C0.5 0.38 0.57 0.52 0.57 0.68C0.57 0.88 0.47 1 0.28 1C0.15 1 0.07 0.95 0 0.88"/><path transform="translate(8.52 -15.30) scale(30.600)" d="M0 0.31V1.3M0 0.42C0.08 0.35 0.16 0.31 0.25 0.31C0.42 0.31 0.5 0.45 0.5 0.655C0.5 0.86 0.42 1 0.25 1C0.16 1 0.08 0.96 0 0.9"/><path transform="translate(36.59 -15.30) scale(30.600)" d="M0.52 0H0V1M0 0.48H0.39"/></g>
<rect x="932.20" y="109.90" width="52.40" height="52.40" rx="0" fill="#c83434"/>
<circle cx="958.40" cy="214.37" r="26.2" fill="#c83434"/>
<circle cx="958.40" cy="292.63" r="26.2" fill="#c83434"/>
<circle cx="958.40" cy="370.89" r="26.2" fill="#c83434"/>
<circle cx="958.40" cy="449.16" r="26.2" fill="#c83434"/>
<circle cx="958.40" cy="527.42" r="26.2" fill="#c83434"/>
<circle cx="958.40" cy="605.69" r="26.2" fill="#c83434"/>
<circle cx="958.40" cy="683.96" r="26.2" fill="#c83434"/>
<circle cx="958.40" cy="762.22" r="26.2" fill="#c83434"/>
<circle cx="958.40" cy="840.49" r="26.2" fill="#c83434"/>
<circle cx="958.40" cy="918.75" r="26.2" fill="#c83434"/>
<circle cx="958.40" cy="997.01" r="26.2" fill="#c83434"/>
<circle cx="958.40" cy="1075.28" r="26.2" fill="#c83434"/>
<circle cx="958.40" cy="1153.55" r="26.2" fill="#c83434"/>
<circle cx="958.40" cy="1231.81" r="26.2" fill="#c83434"/>
<circle cx="958.40" cy="1310.07" r="26.2" fill="#c83434"/>
<rect x="1480.20" y="109.90" width="52.40" height="52.40" rx="0" fill="#c83434"/>
<circle cx="1506.40" cy="214.37" r="26.2" fill="#c83434"/>
<circle cx="1506.40" cy="292.63" r="26.2" fill="#c83434"/>
<circle cx="1506.40" cy="370.89" r="26.2" fill="#c83434"/>
<circle cx="1506.40" cy="449.16" r="26.2" fill="#c83434"/>
<circle cx="1506.40" cy="527.42" r="26.2" fill="#c83434"/>
<circle cx="1506.40" cy="605.69" r="26.2" fill="#c83434"/>
<circle cx="1506.40" cy="683.96" r="26.2" fill="#c83434"/>
<circle cx="1506.40" cy="762.22" r="26.2" fill="#c83434"/>
<circle cx="1506.40" cy="840.49" r="26.2" fill="#c83434"/>
<circle cx="1506.40" cy="918.75" r="26.2" fill="#c83434"/>
<circle cx="1506.40" cy="997.01" r="26.2" fill="#c83434"/>
<circle cx="1506.40" cy="1075.28" r="26.2" fill="#c83434"/>
<circle cx="1506.40" cy="1153.55" r="26.2" fill="#c83434"/>
<circle cx="1506.40" cy="1231.81" r="26.2" fill="#c83434"/>
<circle cx="1506.40" cy="1310.07" r="26.2" fill="#c83434"/>
<rect x="456.30" y="362.90" width="17.60" height="19.80" rx="3.5" fill="#c83434"/>
<rect x="485.90" y="362.90" width="17.60" height="19.80" rx="3.5" fill="#c83434"/>
<rect x="558.90" y="364.60" width="17.60" height="19.80" rx="3.5" fill="#c83434"/>
<rect x="588.50" y="364.60" width="17.60" height="19.80" rx="3.5" fill="#c83434"/>
<rect x="651.30" y="361.40" width="17.60" height="19.80" rx="3.5" fill="#c83434"/>
<rect x="680.90" y="361.40" width="17.60" height="19.80" rx="3.5" fill="#c83434"/>
<rect x="268.90" y="682.00" width="17.60" height="19.80" rx="3.5" fill="#c83434"/>
<rect x="298.50" y="682.00" width="17.60" height="19.80" rx="3.5" fill="#c83434"/>
<rect x="179.80" y="742.70" width="17.60" height="19.80" rx="3.5" fill="#c83434"/>
<rect x="209.40" y="742.70" width="17.60" height="19.80" rx="3.5" fill="#c83434"/>
<rect x="268.90" y="742.70" width="17.60" height="19.80" rx="3.5" fill="#c83434"/>
<rect x="298.50" y="742.70" width="17.60" height="19.80" rx="3.5" fill="#c83434"/>
<rect x="179.80" y="803.80" width="17.60" height="19.80" rx="3.5" fill="#c83434"/>
<rect x="209.40" y="803.80" width="17.60" height="19.80" rx="3.5" fill="#c83434"/>
<rect x="268.90" y="803.80" width="17.60" height="19.80" rx="3.5" fill="#c83434"/>
<rect x="298.50" y="803.80" width="17.60" height="19.80" rx="3.5" fill="#c83434"/>
<rect x="179.80" y="864.60" width="17.60" height="19.80" rx="3.5" fill="#c83434"/>
<rect x="209.40" y="864.60" width="17.60" height="19.80" rx="3.5" fill="#c83434"/>
<rect x="179.80" y="925.10" width="17.60" height="19.80" rx="3.5" fill="#c83434"/>
<rect x="209.40" y="925.10" width="17.60" height="19.80" rx="3.5" fill="#c83434"/>
<rect x="42.90" y="903.40" width="17.60" height="19.80" rx="3.5" fill="#c83434"/>
<rect x="72.50" y="903.40" width="17.60" height="19.80" rx="3.5" fill="#c83434"/>
<rect x="329.80" y="909.60" width="17.60" height="19.80" rx="3.5" fill="#c83434"/>
<rect x="359.40" y="909.60" width="17.60" height="19.80" rx="3.5" fill="#c83434"/>
<rect x="1084.00" y="98.60" width="31.00" height="65.00" rx="15.5" fill="#c83434"/>
<rect x="1084.00" y="234.90" width="31.00" height="65.00" rx="15.5" fill="#c83434"/>
<rect x="1349.80" y="98.60" width="31.00" height="65.00" rx="15.5" fill="#c83434"/>
<rect x="1349.80" y="234.90" width="31.00" height="65.00" rx="15.5" fill="#c83434"/>
<rect x="1123.30" y="273.50" width="18.60" height="44.10" rx="0" fill="#c83434"/>
<rect x="1147.90" y="273.50" width="18.70" height="44.10" rx="0" fill="#c83434"/>
<rect x="1174.10" y="273.50" width="9.40" height="44.10" rx="0" fill="#c83434"/>
<rect x="1189.00" y="273.50" width="9.50" height="44.10" rx="0" fill="#c83434"/>
<rect x="1205.00" y="273.50" width="9.00" height="44.10" rx="0" fill="#c83434"/>
<rect x="1220.40" y="273.50" width="9.40" height="44.10" rx="0" fill="#c83434"/>
<rect x="1235.80" y="273.50" width="9.30" height="44.10" rx="0" fill="#c83434"/>
<rect x="1251.10" y="273.50" width="9.40" height="44.10" rx="0" fill="#c83434"/>
<rect x="1266.30" y="273.50" width="9.40" height="44.10" rx="0" fill="#c83434"/>
<rect x="1282.00" y="273.50" width="9.00" height="44.10" rx="0" fill="#c83434"/>
<rect x="1298.90" y="273.50" width="18.70" height="44.10" rx="0" fill="#c83434"/>
<rect x="1323.30" y="273.50" width="18.70" height="44.10" rx="0" fill="#c83434"/>
<rect x="1093.40" y="347.90" width="27.90" height="28.60" rx="6" fill="#c83434"/>
<rect x="1142.70" y="347.90" width="27.90" height="28.60" rx="6" fill="#c83434"/>
<rect x="1148.30" y="398.30" width="17.60" height="45.50" rx="4.5" fill="#c83434"/>
<rect x="1119.00" y="455.80" width="17.90" height="45.00" rx="4.5" fill="#c83434"/>
<rect x="1177.30" y="455.80" width="18.50" height="45.00" rx="4.5" fill="#c83434"/>
<rect x="1120.40" y="524.70" width="27.90" height="28.60" rx="6" fill="#c83434"/>
<rect x="1169.70" y="524.70" width="27.90" height="28.60" rx="6" fill="#c83434"/>
<rect x="1175.10" y="725.10" width="17.60" height="19.80" rx="3.5" fill="#c83434"/>
<rect x="1204.70" y="725.10" width="17.60" height="19.80" rx="3.5" fill="#c83434"/>
<rect x="1113.70" y="766.50" width="27.70" height="8.20" rx="3" fill="#c83434"/>
<rect x="1200.60" y="766.50" width="28.00" height="8.20" rx="3" fill="#c83434"/>
<rect x="1113.70" y="781.60" width="27.70" height="8.20" rx="3" fill="#c83434"/>
<rect x="1200.60" y="781.60" width="28.00" height="8.20" rx="3" fill="#c83434"/>
<rect x="1113.70" y="797.60" width="27.70" height="8.20" rx="3" fill="#c83434"/>
<rect x="1200.60" y="797.60" width="28.00" height="8.20" rx="3" fill="#c83434"/>
<rect x="1113.70" y="812.70" width="27.70" height="8.20" rx="3" fill="#c83434"/>
<rect x="1200.60" y="812.70" width="28.00" height="8.20" rx="3" fill="#c83434"/>
<rect x="1168.40" y="769.20" width="5.50" height="48.70" rx="0" fill="#c83434"/>
<rect x="1149.40" y="884.30" width="6.40" height="25.10" rx="2" fill="#c83434"/>
<rect x="1149.40" y="1095.20" width="6.40" height="25.80" rx="2" fill="#c83434"/>
<rect x="1112.90" y="919.60" width="26.90" height="6.40" rx="2" fill="#c83434"/>
<rect x="1325.20" y="919.60" width="26.50" height="6.40" rx="2" fill="#c83434"/>
<rect x="1161.77" y="884.30" width="6.40" height="25.10" rx="2" fill="#c83434"/>
<rect x="1161.77" y="1095.20" width="6.40" height="25.80" rx="2" fill="#c83434"/>
<rect x="1112.90" y="931.97" width="26.90" height="6.40" rx="2" fill="#c83434"/>
<rect x="1325.20" y="931.97" width="26.50" height="6.40" rx="2" fill="#c83434"/>
<rect x="1174.14" y="884.30" width="6.40" height="25.10" rx="2" fill="#c83434"/>
<rect x="1174.14" y="1095.20" width="6.40" height="25.80" rx="2" fill="#c83434"/>
<rect x="1112.90" y="944.34" width="26.90" height="6.40" rx="2" fill="#c83434"/>
<rect x="1325.20" y="944.34" width="26.50" height="6.40" rx="2" fill="#c83434"/>
<rect x="1186.51" y="884.30" width="6.40" height="25.10" rx="2" fill="#c83434"/>
<rect x="1186.51" y="1095.20" width="6.40" height="25.80" rx="2" fill="#c83434"/>
<rect x="1112.90" y="956.71" width="26.90" height="6.40" rx="2" fill="#c83434"/>
<rect x="1325.20" y="956.71" width="26.50" height="6.40" rx="2" fill="#c83434"/>
<rect x="1198.88" y="884.30" width="6.40" height="25.10" rx="2" fill="#c83434"/>
<rect x="1198.88" y="1095.20" width="6.40" height="25.80" rx="2" fill="#c83434"/>
<rect x="1112.90" y="969.08" width="26.90" height="6.40" rx="2" fill="#c83434"/>
<rect x="1325.20" y="969.08" width="26.50" height="6.40" rx="2" fill="#c83434"/>
<rect x="1211.25" y="884.30" width="6.40" height="25.10" rx="2" fill="#c83434"/>
<rect x="1211.25" y="1095.20" width="6.40" height="25.80" rx="2" fill="#c83434"/>
<rect x="1112.90" y="981.45" width="26.90" height="6.40" rx="2" fill="#c83434"/>
<rect x="1325.20" y="981.45" width="26.50" height="6.40" rx="2" fill="#c83434"/>
<rect x="1223.62" y="884.30" width="6.40" height="25.10" rx="2" fill="#c83434"/>
<rect x="1223.62" y="1095.20" width="6.40" height="25.80" rx="2" fill="#c83434"/>
<rect x="1112.90" y="993.82" width="26.90" height="6.40" rx="2" fill="#c83434"/>
<rect x="1325.20" y="993.82" width="26.50" height="6.40" rx="2" fill="#c83434"/>
<rect x="1235.99" y="884.30" width="6.40" height="25.10" rx="2" fill="#c83434"/>
<rect x="1235.99" y="1095.20" width="6.40" height="25.80" rx="2" fill="#c83434"/>
<rect x="1112.90" y="1006.19" width="26.90" height="6.40" rx="2" fill="#c83434"/>
<rect x="1325.20" y="1006.19" width="26.50" height="6.40" rx="2" fill="#c83434"/>
<rect x="1248.36" y="884.30" width="6.40" height="25.10" rx="2" fill="#c83434"/>
<rect x="1248.36" y="1095.20" width="6.40" height="25.80" rx="2" fill="#c83434"/>
<rect x="1112.90" y="1018.56" width="26.90" height="6.40" rx="2" fill="#c83434"/>
<rect x="1325.20" y="1018.56" width="26.50" height="6.40" rx="2" fill="#c83434"/>
<rect x="1260.73" y="884.30" width="6.40" height="25.10" rx="2" fill="#c83434"/>
<rect x="1260.73" y="1095.20" width="6.40" height="25.80" rx="2" fill="#c83434"/>
<rect x="1112.90" y="1030.93" width="26.90" height="6.40" rx="2" fill="#c83434"/>
<rect x="1325.20" y="1030.93" width="26.50" height="6.40" rx="2" fill="#c83434"/>
<rect x="1273.10" y="884.30" width="6.40" height="25.10" rx="2" fill="#c83434"/>
<rect x="1273.10" y="1095.20" width="6.40" height="25.80" rx="2" fill="#c83434"/>
<rect x="1112.90" y="1043.30" width="26.90" height="6.40" rx="2" fill="#c83434"/>
<rect x="1325.20" y="1043.30" width="26.50" height="6.40" rx="2" fill="#c83434"/>
<rect x="1285.47" y="884.30" width="6.40" height="25.10" rx="2" fill="#c83434"/>
<rect x="1285.47" y="1095.20" width="6.40" height="25.80" rx="2" fill="#c83434"/>
<rect x="1112.90" y="1055.67" width="26.90" height="6.40" rx="2" fill="#c83434"/>
<rect x="1325.20" y="1055.67" width="26.50" height="6.40" rx="2" fill="#c83434"/>
<rect x="1297.84" y="884.30" width="6.40" height="25.10" rx="2" fill="#c83434"/>
<rect x="1297.84" y="1095.20" width="6.40" height="25.80" rx="2" fill="#c83434"/>
<rect x="1112.90" y="1068.04" width="26.90" height="6.40" rx="2" fill="#c83434"/>
<rect x="1325.20" y="1068.04" width="26.50" height="6.40" rx="2" fill="#c83434"/>
<rect x="1310.21" y="884.30" width="6.40" height="25.10" rx="2" fill="#c83434"/>
<rect x="1310.21" y="1095.20" width="6.40" height="25.80" rx="2" fill="#c83434"/>
<rect x="1112.90" y="1080.41" width="26.90" height="6.40" rx="2" fill="#c83434"/>
<rect x="1325.20" y="1080.41" width="26.50" height="6.40" rx="2" fill="#c83434"/>
<rect x="1183.30" y="953.30" width="98.60" height="98.40" rx="0" fill="#c83434"/>
<rect x="1216.60" y="1154.40" width="15.70" height="18.90" rx="3.5" fill="#c83434"/>
<rect x="1247.10" y="1154.40" width="16.60" height="18.90" rx="3.5" fill="#c83434"/>
<rect x="1151.20" y="1194.20" width="42.70" height="36.00" rx="8" fill="#c83434"/>
<rect x="1219.20" y="1194.20" width="42.70" height="36.00" rx="8" fill="#c83434"/>
<rect x="1151.20" y="1246.20" width="42.70" height="36.00" rx="8" fill="#c83434"/>
<rect x="1219.20" y="1246.20" width="42.70" height="36.00" rx="8" fill="#c83434"/>
<rect x="1114.60" y="1214.10" width="19.60" height="17.00" rx="3.5" fill="#c83434"/>
<rect x="1114.60" y="1244.30" width="19.60" height="17.30" rx="3.5" fill="#c83434"/>
<rect x="1278.30" y="1214.10" width="19.60" height="17.00" rx="3.5" fill="#c83434"/>
<rect x="1278.30" y="1244.30" width="19.60" height="17.30" rx="3.5" fill="#c83434"/>
<path d="M1094.40 60.00L1094.40 283.20L1370.40 283.20L1370.40 60.00" fill="none" stroke="#afafaf" stroke-width="2.2"/>
<path d="M1129.00 761.40L1217.80 761.40L1217.80 825.00L1123.80 825.00L1123.80 766.50Z" fill="none" stroke="#afafaf" stroke-width="2.2"/>
<path d="M1150.00 894.30L1340.10 894.30L1340.10 1110.10L1123.90 1110.10L1123.90 920.50Z" fill="none" stroke="#afafaf" stroke-width="2.2"/>
<circle cx="958.4" cy="136.10" r="15.7" fill="#001023" stroke="#f0c419" stroke-width="2.3"/>
<circle cx="958.4" cy="214.37" r="15.7" fill="#001023" stroke="#f0c419" stroke-width="2.3"/>
<circle cx="958.4" cy="292.63" r="15.7" fill="#001023" stroke="#f0c419" stroke-width="2.3"/>
<circle cx="958.4" cy="370.89" r="15.7" fill="#001023" stroke="#f0c419" stroke-width="2.3"/>
<circle cx="958.4" cy="449.16" r="15.7" fill="#001023" stroke="#f0c419" stroke-width="2.3"/>
<circle cx="958.4" cy="527.42" r="15.7" fill="#001023" stroke="#f0c419" stroke-width="2.3"/>
<circle cx="958.4" cy="605.69" r="15.7" fill="#001023" stroke="#f0c419" stroke-width="2.3"/>
<circle cx="958.4" cy="683.96" r="15.7" fill="#001023" stroke="#f0c419" stroke-width="2.3"/>
<circle cx="958.4" cy="762.22" r="15.7" fill="#001023" stroke="#f0c419" stroke-width="2.3"/>
<circle cx="958.4" cy="840.49" r="15.7" fill="#001023" stroke="#f0c419" stroke-width="2.3"/>
<circle cx="958.4" cy="918.75" r="15.7" fill="#001023" stroke="#f0c419" stroke-width="2.3"/>
<circle cx="958.4" cy="997.01" r="15.7" fill="#001023" stroke="#f0c419" stroke-width="2.3"/>
<circle cx="958.4" cy="1075.28" r="15.7" fill="#001023" stroke="#f0c419" stroke-width="2.3"/>
<circle cx="958.4" cy="1153.55" r="15.7" fill="#001023" stroke="#f0c419" stroke-width="2.3"/>
<circle cx="958.4" cy="1231.81" r="15.7" fill="#001023" stroke="#f0c419" stroke-width="2.3"/>
<circle cx="958.4" cy="1310.07" r="15.7" fill="#001023" stroke="#f0c419" stroke-width="2.3"/>
<circle cx="1506.4" cy="136.10" r="15.7" fill="#001023" stroke="#f0c419" stroke-width="2.3"/>
<circle cx="1506.4" cy="214.37" r="15.7" fill="#001023" stroke="#f0c419" stroke-width="2.3"/>
<circle cx="1506.4" cy="292.63" r="15.7" fill="#001023" stroke="#f0c419" stroke-width="2.3"/>
<circle cx="1506.4" cy="370.89" r="15.7" fill="#001023" stroke="#f0c419" stroke-width="2.3"/>
<circle cx="1506.4" cy="449.16" r="15.7" fill="#001023" stroke="#f0c419" stroke-width="2.3"/>
<circle cx="1506.4" cy="527.42" r="15.7" fill="#001023" stroke="#f0c419" stroke-width="2.3"/>
<circle cx="1506.4" cy="605.69" r="15.7" fill="#001023" stroke="#f0c419" stroke-width="2.3"/>
<circle cx="1506.4" cy="683.96" r="15.7" fill="#001023" stroke="#f0c419" stroke-width="2.3"/>
<circle cx="1506.4" cy="762.22" r="15.7" fill="#001023" stroke="#f0c419" stroke-width="2.3"/>
<circle cx="1506.4" cy="840.49" r="15.7" fill="#001023" stroke="#f0c419" stroke-width="2.3"/>
<circle cx="1506.4" cy="918.75" r="15.7" fill="#001023" stroke="#f0c419" stroke-width="2.3"/>
<circle cx="1506.4" cy="997.01" r="15.7" fill="#001023" stroke="#f0c419" stroke-width="2.3"/>
<circle cx="1506.4" cy="1075.28" r="15.7" fill="#001023" stroke="#f0c419" stroke-width="2.3"/>
<circle cx="1506.4" cy="1153.55" r="15.7" fill="#001023" stroke="#f0c419" stroke-width="2.3"/>
<circle cx="1506.4" cy="1231.81" r="15.7" fill="#001023" stroke="#f0c419" stroke-width="2.3"/>
<circle cx="1506.4" cy="1310.07" r="15.7" fill="#001023" stroke="#f0c419" stroke-width="2.3"/>
<rect x="1089.00" y="103.80" width="21" height="54.6" rx="10.5" fill="#001023" stroke="#f0c419" stroke-width="2.3"/>
<rect x="1089.00" y="240.10" width="21" height="54.6" rx="10.5" fill="#001023" stroke="#f0c419" stroke-width="2.3"/>
<rect x="1354.80" y="103.80" width="21" height="54.6" rx="10.5" fill="#001023" stroke="#f0c419" stroke-width="2.3"/>
<rect x="1354.80" y="240.10" width="21" height="54.6" rx="10.5" fill="#001023" stroke="#f0c419" stroke-width="2.3"/>
<circle cx="1143.4" cy="251.4" r="10" fill="#1ac4d2"/>
<circle cx="1321.3" cy="251.4" r="10" fill="#1ac4d2"/>
<g transform="translate(958.40 123.30)" fill="none" stroke="#ffffff" stroke-width="0.1163" stroke-linecap="round" stroke-linejoin="round" opacity="0.85"><path transform="translate(-4.90 -8.60) scale(17.200)" d="M0.08 0.27L0.29 0V1M0 1H0.57"/></g>
<g transform="translate(958.40 149.70)" fill="none" stroke="#ffffff" stroke-width="0.1444" stroke-linecap="round" stroke-linejoin="round" opacity="0.8"><path transform="translate(-18.60 -4.50) scale(9.000)" d="M0.55 0.12C0.48 0.04 0.4 0 0.3 0C0.1 0 0 0.2 0 0.5C0 0.8 0.1 1 0.3 1C0.45 1 0.57 0.92 0.57 0.75V0.52H0.33"/><path transform="translate(-10.58 -4.50) scale(9.000)" d="M0 1V0H0.3C0.47 0 0.57 0.1 0.57 0.28C0.57 0.45 0.47 0.55 0.3 0.55H0"/><path transform="translate(-1.80 -4.50) scale(9.000)" d="M0 0H0.4M0.2 0V1M0 1H0.4"/><path transform="translate(5.32 -4.50) scale(9.000)" d="M0.3 0C0.06 0 0 0.22 0 0.5C0 0.78 0.06 1 0.3 1C0.54 1 0.6 0.78 0.6 0.5C0.6 0.22 0.54 0 0.3 0Z"/><path transform="translate(13.47 -4.50) scale(9.000)" d="M0.285 0C0.06 0 0 0.22 0 0.5C0 0.78 0.06 1 0.285 1C0.51 1 0.57 0.78 0.57 0.5C0.57 0.22 0.51 0 0.285 0Z"/></g>
<g transform="translate(958.40 201.56)" fill="none" stroke="#ffffff" stroke-width="0.1163" stroke-linecap="round" stroke-linejoin="round" opacity="0.85"><path transform="translate(-4.90 -8.60) scale(17.200)" d="M0.02 0.17C0.08 0.05 0.18 0 0.3 0C0.48 0 0.57 0.12 0.57 0.28C0.57 0.42 0.5 0.52 0.4 0.6L0 1H0.57"/></g>
<g transform="translate(958.40 227.97)" fill="none" stroke="#ffffff" stroke-width="0.1444" stroke-linecap="round" stroke-linejoin="round" opacity="0.8"><path transform="translate(-18.60 -4.50) scale(9.000)" d="M0.55 0.12C0.48 0.04 0.4 0 0.3 0C0.1 0 0 0.2 0 0.5C0 0.8 0.1 1 0.3 1C0.45 1 0.57 0.92 0.57 0.75V0.52H0.33"/><path transform="translate(-10.58 -4.50) scale(9.000)" d="M0 1V0H0.3C0.47 0 0.57 0.1 0.57 0.28C0.57 0.45 0.47 0.55 0.3 0.55H0"/><path transform="translate(-1.80 -4.50) scale(9.000)" d="M0 0H0.4M0.2 0V1M0 1H0.4"/><path transform="translate(5.32 -4.50) scale(9.000)" d="M0.3 0C0.06 0 0 0.22 0 0.5C0 0.78 0.06 1 0.3 1C0.54 1 0.6 0.78 0.6 0.5C0.6 0.22 0.54 0 0.3 0Z"/><path transform="translate(13.47 -4.50) scale(9.000)" d="M0.08 0.27L0.29 0V1M0 1H0.57"/></g>
<g transform="translate(958.40 279.83)" fill="none" stroke="#ffffff" stroke-width="0.1163" stroke-linecap="round" stroke-linejoin="round" opacity="0.85"><path transform="translate(-4.90 -8.60) scale(17.200)" d="M0.02 0H0.55L0.27 0.38H0.33C0.5 0.38 0.57 0.52 0.57 0.68C0.57 0.88 0.47 1 0.28 1C0.15 1 0.07 0.95 0 0.88"/></g>
<g transform="translate(958.40 307.33)" fill="none" stroke="#ffffff" stroke-width="0.1391" stroke-linecap="round" stroke-linejoin="round" opacity="0.8"><path transform="translate(-13.70 -5.75) scale(11.500)" d="M0.55 0.12C0.48 0.04 0.4 0 0.3 0C0.1 0 0 0.2 0 0.5C0 0.8 0.1 1 0.3 1C0.45 1 0.57 0.92 0.57 0.75V0.52H0.33"/><path transform="translate(-3.28 -5.75) scale(11.500)" d="M0 1V0L0.57 1V0"/><path transform="translate(7.14 -5.75) scale(11.500)" d="M0 1V0H0.22C0.47 0 0.57 0.2 0.57 0.5C0.57 0.8 0.47 1 0.22 1Z"/></g>
<g transform="translate(958.40 358.09)" fill="none" stroke="#ffffff" stroke-width="0.1163" stroke-linecap="round" stroke-linejoin="round" opacity="0.85"><path transform="translate(-5.16 -8.60) scale(17.200)" d="M0.44 1V0L0 0.68H0.6"/></g>
<g transform="translate(958.40 384.50)" fill="none" stroke="#ffffff" stroke-width="0.1444" stroke-linecap="round" stroke-linejoin="round" opacity="0.8"><path transform="translate(-18.60 -4.50) scale(9.000)" d="M0.55 0.12C0.48 0.04 0.4 0 0.3 0C0.1 0 0 0.2 0 0.5C0 0.8 0.1 1 0.3 1C0.45 1 0.57 0.92 0.57 0.75V0.52H0.33"/><path transform="translate(-10.58 -4.50) scale(9.000)" d="M0 1V0H0.3C0.47 0 0.57 0.1 0.57 0.28C0.57 0.45 0.47 0.55 0.3 0.55H0"/><path transform="translate(-1.80 -4.50) scale(9.000)" d="M0 0H0.4M0.2 0V1M0 1H0.4"/><path transform="translate(5.32 -4.50) scale(9.000)" d="M0.3 0C0.06 0 0 0.22 0 0.5C0 0.78 0.06 1 0.3 1C0.54 1 0.6 0.78 0.6 0.5C0.6 0.22 0.54 0 0.3 0Z"/><path transform="translate(13.47 -4.50) scale(9.000)" d="M0.02 0.17C0.08 0.05 0.18 0 0.3 0C0.48 0 0.57 0.12 0.57 0.28C0.57 0.42 0.5 0.52 0.4 0.6L0 1H0.57"/></g>
<g transform="translate(958.40 436.36)" fill="none" stroke="#ffffff" stroke-width="0.1163" stroke-linecap="round" stroke-linejoin="round" opacity="0.85"><path transform="translate(-4.90 -8.60) scale(17.200)" d="M0.53 0H0.06L0.02 0.45C0.1 0.4 0.2 0.37 0.3 0.37C0.47 0.37 0.57 0.5 0.57 0.68C0.57 0.88 0.47 1 0.28 1C0.15 1 0.06 0.95 0 0.88"/></g>
<g transform="translate(958.40 462.76)" fill="none" stroke="#ffffff" stroke-width="0.1444" stroke-linecap="round" stroke-linejoin="round" opacity="0.8"><path transform="translate(-18.60 -4.50) scale(9.000)" d="M0.55 0.12C0.48 0.04 0.4 0 0.3 0C0.1 0 0 0.2 0 0.5C0 0.8 0.1 1 0.3 1C0.45 1 0.57 0.92 0.57 0.75V0.52H0.33"/><path transform="translate(-10.58 -4.50) scale(9.000)" d="M0 1V0H0.3C0.47 0 0.57 0.1 0.57 0.28C0.57 0.45 0.47 0.55 0.3 0.55H0"/><path transform="translate(-1.80 -4.50) scale(9.000)" d="M0 0H0.4M0.2 0V1M0 1H0.4"/><path transform="translate(5.32 -4.50) scale(9.000)" d="M0.3 0C0.06 0 0 0.22 0 0.5C0 0.78 0.06 1 0.3 1C0.54 1 0.6 0.78 0.6 0.5C0.6 0.22 0.54 0 0.3 0Z"/><path transform="translate(13.47 -4.50) scale(9.000)" d="M0.02 0H0.55L0.27 0.38H0.33C0.5 0.38 0.57 0.52 0.57 0.68C0.57 0.88 0.47 1 0.28 1C0.15 1 0.07 0.95 0 0.88"/></g>
<g transform="translate(958.40 514.62)" fill="none" stroke="#ffffff" stroke-width="0.1163" stroke-linecap="round" stroke-linejoin="round" opacity="0.85"><path transform="translate(-4.90 -8.60) scale(17.200)" d="M0.52 0H0.38C0.15 0 0 0.2 0 0.55C0 0.85 0.1 1 0.29 1C0.47 1 0.57 0.88 0.57 0.7C0.57 0.52 0.47 0.42 0.3 0.42C0.15 0.42 0.05 0.5 0 0.6"/></g>
<g transform="translate(958.40 541.02)" fill="none" stroke="#ffffff" stroke-width="0.1444" stroke-linecap="round" stroke-linejoin="round" opacity="0.8"><path transform="translate(-18.60 -4.50) scale(9.000)" d="M0.55 0.12C0.48 0.04 0.4 0 0.3 0C0.1 0 0 0.2 0 0.5C0 0.8 0.1 1 0.3 1C0.45 1 0.57 0.92 0.57 0.75V0.52H0.33"/><path transform="translate(-10.62 -4.50) scale(9.000)" d="M0 1V0H0.3C0.47 0 0.57 0.1 0.57 0.28C0.57 0.45 0.47 0.55 0.3 0.55H0"/><path transform="translate(-1.87 -4.50) scale(9.000)" d="M0 0H0.4M0.2 0V1M0 1H0.4"/><path transform="translate(5.22 -4.50) scale(9.000)" d="M0.3 0C0.06 0 0 0.22 0 0.5C0 0.78 0.06 1 0.3 1C0.54 1 0.6 0.78 0.6 0.5C0.6 0.22 0.54 0 0.3 0Z"/><path transform="translate(13.20 -4.50) scale(9.000)" d="M0.44 1V0L0 0.68H0.6"/></g>
<g transform="translate(958.40 592.89)" fill="none" stroke="#ffffff" stroke-width="0.1163" stroke-linecap="round" stroke-linejoin="round" opacity="0.85"><path transform="translate(-4.90 -8.60) scale(17.200)" d="M0 0H0.57L0.17 1"/></g>
<g transform="translate(958.40 619.29)" fill="none" stroke="#ffffff" stroke-width="0.1444" stroke-linecap="round" stroke-linejoin="round" opacity="0.8"><path transform="translate(-18.60 -4.50) scale(9.000)" d="M0.55 0.12C0.48 0.04 0.4 0 0.3 0C0.1 0 0 0.2 0 0.5C0 0.8 0.1 1 0.3 1C0.45 1 0.57 0.92 0.57 0.75V0.52H0.33"/><path transform="translate(-10.58 -4.50) scale(9.000)" d="M0 1V0H0.3C0.47 0 0.57 0.1 0.57 0.28C0.57 0.45 0.47 0.55 0.3 0.55H0"/><path transform="translate(-1.80 -4.50) scale(9.000)" d="M0 0H0.4M0.2 0V1M0 1H0.4"/><path transform="translate(5.32 -4.50) scale(9.000)" d="M0.3 0C0.06 0 0 0.22 0 0.5C0 0.78 0.06 1 0.3 1C0.54 1 0.6 0.78 0.6 0.5C0.6 0.22 0.54 0 0.3 0Z"/><path transform="translate(13.47 -4.50) scale(9.000)" d="M0.53 0H0.06L0.02 0.45C0.1 0.4 0.2 0.37 0.3 0.37C0.47 0.37 0.57 0.5 0.57 0.68C0.57 0.88 0.47 1 0.28 1C0.15 1 0.06 0.95 0 0.88"/></g>
<g transform="translate(958.40 671.16)" fill="none" stroke="#ffffff" stroke-width="0.1163" stroke-linecap="round" stroke-linejoin="round" opacity="0.85"><path transform="translate(-4.90 -8.60) scale(17.200)" d="M0.285 0.47C0.12 0.47 0.04 0.38 0.04 0.24C0.04 0.09 0.13 0 0.285 0C0.44 0 0.53 0.09 0.53 0.24C0.53 0.38 0.45 0.47 0.285 0.47C0.1 0.47 0 0.58 0 0.73C0 0.9 0.1 1 0.285 1C0.47 1 0.57 0.9 0.57 0.73C0.57 0.58 0.47 0.47 0.285 0.47Z"/></g>
<g transform="translate(958.40 698.66)" fill="none" stroke="#ffffff" stroke-width="0.1391" stroke-linecap="round" stroke-linejoin="round" opacity="0.8"><path transform="translate(-13.70 -5.75) scale(11.500)" d="M0.55 0.12C0.48 0.04 0.4 0 0.3 0C0.1 0 0 0.2 0 0.5C0 0.8 0.1 1 0.3 1C0.45 1 0.57 0.92 0.57 0.75V0.52H0.33"/><path transform="translate(-3.28 -5.75) scale(11.500)" d="M0 1V0L0.57 1V0"/><path transform="translate(7.14 -5.75) scale(11.500)" d="M0 1V0H0.22C0.47 0 0.57 0.2 0.57 0.5C0.57 0.8 0.47 1 0.22 1Z"/></g>
<g transform="translate(958.40 749.42)" fill="none" stroke="#ffffff" stroke-width="0.1163" stroke-linecap="round" stroke-linejoin="round" opacity="0.85"><path transform="translate(-4.90 -8.60) scale(17.200)" d="M0.05 1H0.2C0.42 1 0.57 0.8 0.57 0.45C0.57 0.15 0.47 0 0.28 0C0.1 0 0 0.12 0 0.3C0 0.48 0.1 0.58 0.27 0.58C0.42 0.58 0.52 0.5 0.57 0.4"/></g>
<g transform="translate(958.40 775.82)" fill="none" stroke="#ffffff" stroke-width="0.1444" stroke-linecap="round" stroke-linejoin="round" opacity="0.8"><path transform="translate(-18.60 -4.50) scale(9.000)" d="M0.55 0.12C0.48 0.04 0.4 0 0.3 0C0.1 0 0 0.2 0 0.5C0 0.8 0.1 1 0.3 1C0.45 1 0.57 0.92 0.57 0.75V0.52H0.33"/><path transform="translate(-10.58 -4.50) scale(9.000)" d="M0 1V0H0.3C0.47 0 0.57 0.1 0.57 0.28C0.57 0.45 0.47 0.55 0.3 0.55H0"/><path transform="translate(-1.80 -4.50) scale(9.000)" d="M0 0H0.4M0.2 0V1M0 1H0.4"/><path transform="translate(5.32 -4.50) scale(9.000)" d="M0.3 0C0.06 0 0 0.22 0 0.5C0 0.78 0.06 1 0.3 1C0.54 1 0.6 0.78 0.6 0.5C0.6 0.22 0.54 0 0.3 0Z"/><path transform="translate(13.47 -4.50) scale(9.000)" d="M0.52 0H0.38C0.15 0 0 0.2 0 0.55C0 0.85 0.1 1 0.29 1C0.47 1 0.57 0.88 0.57 0.7C0.57 0.52 0.47 0.42 0.3 0.42C0.15 0.42 0.05 0.5 0 0.6"/></g>
<g transform="translate(958.40 827.69)" fill="none" stroke="#ffffff" stroke-width="0.1163" stroke-linecap="round" stroke-linejoin="round" opacity="0.85"><path transform="translate(-13.50 -8.60) scale(17.200)" d="M0.08 0.27L0.29 0V1M0 1H0.57"/><path transform="translate(3.70 -8.60) scale(17.200)" d="M0.285 0C0.06 0 0 0.22 0 0.5C0 0.78 0.06 1 0.285 1C0.51 1 0.57 0.78 0.57 0.5C0.57 0.22 0.51 0 0.285 0Z"/></g>
<g transform="translate(958.40 854.09)" fill="none" stroke="#ffffff" stroke-width="0.1444" stroke-linecap="round" stroke-linejoin="round" opacity="0.8"><path transform="translate(-18.60 -4.50) scale(9.000)" d="M0.55 0.12C0.48 0.04 0.4 0 0.3 0C0.1 0 0 0.2 0 0.5C0 0.8 0.1 1 0.3 1C0.45 1 0.57 0.92 0.57 0.75V0.52H0.33"/><path transform="translate(-10.58 -4.50) scale(9.000)" d="M0 1V0H0.3C0.47 0 0.57 0.1 0.57 0.28C0.57 0.45 0.47 0.55 0.3 0.55H0"/><path transform="translate(-1.80 -4.50) scale(9.000)" d="M0 0H0.4M0.2 0V1M0 1H0.4"/><path transform="translate(5.32 -4.50) scale(9.000)" d="M0.3 0C0.06 0 0 0.22 0 0.5C0 0.78 0.06 1 0.3 1C0.54 1 0.6 0.78 0.6 0.5C0.6 0.22 0.54 0 0.3 0Z"/><path transform="translate(13.47 -4.50) scale(9.000)" d="M0 0H0.57L0.17 1"/></g>
<g transform="translate(958.40 905.95)" fill="none" stroke="#ffffff" stroke-width="0.1163" stroke-linecap="round" stroke-linejoin="round" opacity="0.85"><path transform="translate(-13.50 -8.60) scale(17.200)" d="M0.08 0.27L0.29 0V1M0 1H0.57"/><path transform="translate(3.70 -8.60) scale(17.200)" d="M0.08 0.27L0.29 0V1M0 1H0.57"/></g>
<g transform="translate(958.40 932.35)" fill="none" stroke="#ffffff" stroke-width="0.1444" stroke-linecap="round" stroke-linejoin="round" opacity="0.8"><path transform="translate(-18.60 -4.50) scale(9.000)" d="M0.55 0.12C0.48 0.04 0.4 0 0.3 0C0.1 0 0 0.2 0 0.5C0 0.8 0.1 1 0.3 1C0.45 1 0.57 0.92 0.57 0.75V0.52H0.33"/><path transform="translate(-10.58 -4.50) scale(9.000)" d="M0 1V0H0.3C0.47 0 0.57 0.1 0.57 0.28C0.57 0.45 0.47 0.55 0.3 0.55H0"/><path transform="translate(-1.80 -4.50) scale(9.000)" d="M0 0H0.4M0.2 0V1M0 1H0.4"/><path transform="translate(5.32 -4.50) scale(9.000)" d="M0.3 0C0.06 0 0 0.22 0 0.5C0 0.78 0.06 1 0.3 1C0.54 1 0.6 0.78 0.6 0.5C0.6 0.22 0.54 0 0.3 0Z"/><path transform="translate(13.47 -4.50) scale(9.000)" d="M0.285 0.47C0.12 0.47 0.04 0.38 0.04 0.24C0.04 0.09 0.13 0 0.285 0C0.44 0 0.53 0.09 0.53 0.24C0.53 0.38 0.45 0.47 0.285 0.47C0.1 0.47 0 0.58 0 0.73C0 0.9 0.1 1 0.285 1C0.47 1 0.57 0.9 0.57 0.73C0.57 0.58 0.47 0.47 0.285 0.47Z"/></g>
<g transform="translate(958.40 984.22)" fill="none" stroke="#ffffff" stroke-width="0.1163" stroke-linecap="round" stroke-linejoin="round" opacity="0.85"><path transform="translate(-13.50 -8.60) scale(17.200)" d="M0.08 0.27L0.29 0V1M0 1H0.57"/><path transform="translate(3.70 -8.60) scale(17.200)" d="M0.02 0.17C0.08 0.05 0.18 0 0.3 0C0.48 0 0.57 0.12 0.57 0.28C0.57 0.42 0.5 0.52 0.4 0.6L0 1H0.57"/></g>
<g transform="translate(958.40 1010.62)" fill="none" stroke="#ffffff" stroke-width="0.1444" stroke-linecap="round" stroke-linejoin="round" opacity="0.8"><path transform="translate(-18.60 -4.50) scale(9.000)" d="M0.55 0.12C0.48 0.04 0.4 0 0.3 0C0.1 0 0 0.2 0 0.5C0 0.8 0.1 1 0.3 1C0.45 1 0.57 0.92 0.57 0.75V0.52H0.33"/><path transform="translate(-10.58 -4.50) scale(9.000)" d="M0 1V0H0.3C0.47 0 0.57 0.1 0.57 0.28C0.57 0.45 0.47 0.55 0.3 0.55H0"/><path transform="translate(-1.80 -4.50) scale(9.000)" d="M0 0H0.4M0.2 0V1M0 1H0.4"/><path transform="translate(5.32 -4.50) scale(9.000)" d="M0.3 0C0.06 0 0 0.22 0 0.5C0 0.78 0.06 1 0.3 1C0.54 1 0.6 0.78 0.6 0.5C0.6 0.22 0.54 0 0.3 0Z"/><path transform="translate(13.47 -4.50) scale(9.000)" d="M0.05 1H0.2C0.42 1 0.57 0.8 0.57 0.45C0.57 0.15 0.47 0 0.28 0C0.1 0 0 0.12 0 0.3C0 0.48 0.1 0.58 0.27 0.58C0.42 0.58 0.52 0.5 0.57 0.4"/></g>
<g transform="translate(958.40 1062.48)" fill="none" stroke="#ffffff" stroke-width="0.1163" stroke-linecap="round" stroke-linejoin="round" opacity="0.85"><path transform="translate(-13.50 -8.60) scale(17.200)" d="M0.08 0.27L0.29 0V1M0 1H0.57"/><path transform="translate(3.70 -8.60) scale(17.200)" d="M0.02 0H0.55L0.27 0.38H0.33C0.5 0.38 0.57 0.52 0.57 0.68C0.57 0.88 0.47 1 0.28 1C0.15 1 0.07 0.95 0 0.88"/></g>
<g transform="translate(958.40 1089.98)" fill="none" stroke="#ffffff" stroke-width="0.1391" stroke-linecap="round" stroke-linejoin="round" opacity="0.8"><path transform="translate(-13.70 -5.75) scale(11.500)" d="M0.55 0.12C0.48 0.04 0.4 0 0.3 0C0.1 0 0 0.2 0 0.5C0 0.8 0.1 1 0.3 1C0.45 1 0.57 0.92 0.57 0.75V0.52H0.33"/><path transform="translate(-3.28 -5.75) scale(11.500)" d="M0 1V0L0.57 1V0"/><path transform="translate(7.14 -5.75) scale(11.500)" d="M0 1V0H0.22C0.47 0 0.57 0.2 0.57 0.5C0.57 0.8 0.47 1 0.22 1Z"/></g>
<g transform="translate(958.40 1140.75)" fill="none" stroke="#ffffff" stroke-width="0.1163" stroke-linecap="round" stroke-linejoin="round" opacity="0.85"><path transform="translate(-13.63 -8.60) scale(17.200)" d="M0.08 0.27L0.29 0V1M0 1H0.57"/><path transform="translate(3.31 -8.60) scale(17.200)" d="M0.44 1V0L0 0.68H0.6"/></g>
<g transform="translate(958.40 1166.14)" fill="none" stroke="#ffffff" stroke-width="0.1463" stroke-linecap="round" stroke-linejoin="round" opacity="0.8"><path transform="translate(-19.40 -4.10) scale(8.200)" d="M0.55 0.12C0.48 0.04 0.4 0 0.3 0C0.1 0 0 0.2 0 0.5C0 0.8 0.1 1 0.3 1C0.45 1 0.57 0.92 0.57 0.75V0.52H0.33"/><path transform="translate(-12.57 -4.10) scale(8.200)" d="M0 1V0H0.3C0.47 0 0.57 0.1 0.57 0.28C0.57 0.45 0.47 0.55 0.3 0.55H0"/><path transform="translate(-5.05 -4.10) scale(8.200)" d="M0 0H0.4M0.2 0V1M0 1H0.4"/><path transform="translate(0.95 -4.10) scale(8.200)" d="M0.3 0C0.06 0 0 0.22 0 0.5C0 0.78 0.06 1 0.3 1C0.54 1 0.6 0.78 0.6 0.5C0.6 0.22 0.54 0 0.3 0Z"/><path transform="translate(7.90 -4.10) scale(8.200)" d="M0.08 0.27L0.29 0V1M0 1H0.57"/><path transform="translate(14.73 -4.10) scale(8.200)" d="M0.285 0C0.06 0 0 0.22 0 0.5C0 0.78 0.06 1 0.285 1C0.51 1 0.57 0.78 0.57 0.5C0.57 0.22 0.51 0 0.285 0Z"/></g>
<g transform="translate(958.40 1219.01)" fill="none" stroke="#ffffff" stroke-width="0.1163" stroke-linecap="round" stroke-linejoin="round" opacity="0.85"><path transform="translate(-13.50 -8.60) scale(17.200)" d="M0.08 0.27L0.29 0V1M0 1H0.57"/><path transform="translate(3.70 -8.60) scale(17.200)" d="M0.53 0H0.06L0.02 0.45C0.1 0.4 0.2 0.37 0.3 0.37C0.47 0.37 0.57 0.5 0.57 0.68C0.57 0.88 0.47 1 0.28 1C0.15 1 0.06 0.95 0 0.88"/></g>
<g transform="translate(958.40 1244.41)" fill="none" stroke="#ffffff" stroke-width="0.1463" stroke-linecap="round" stroke-linejoin="round" opacity="0.8"><path transform="translate(-19.40 -4.10) scale(8.200)" d="M0.55 0.12C0.48 0.04 0.4 0 0.3 0C0.1 0 0 0.2 0 0.5C0 0.8 0.1 1 0.3 1C0.45 1 0.57 0.92 0.57 0.75V0.52H0.33"/><path transform="translate(-12.57 -4.10) scale(8.200)" d="M0 1V0H0.3C0.47 0 0.57 0.1 0.57 0.28C0.57 0.45 0.47 0.55 0.3 0.55H0"/><path transform="translate(-5.05 -4.10) scale(8.200)" d="M0 0H0.4M0.2 0V1M0 1H0.4"/><path transform="translate(0.95 -4.10) scale(8.200)" d="M0.3 0C0.06 0 0 0.22 0 0.5C0 0.78 0.06 1 0.3 1C0.54 1 0.6 0.78 0.6 0.5C0.6 0.22 0.54 0 0.3 0Z"/><path transform="translate(7.90 -4.10) scale(8.200)" d="M0.08 0.27L0.29 0V1M0 1H0.57"/><path transform="translate(14.73 -4.10) scale(8.200)" d="M0.08 0.27L0.29 0V1M0 1H0.57"/></g>
<g transform="translate(958.40 1297.27)" fill="none" stroke="#ffffff" stroke-width="0.1163" stroke-linecap="round" stroke-linejoin="round" opacity="0.85"><path transform="translate(-13.50 -8.60) scale(17.200)" d="M0.08 0.27L0.29 0V1M0 1H0.57"/><path transform="translate(3.70 -8.60) scale(17.200)" d="M0.52 0H0.38C0.15 0 0 0.2 0 0.55C0 0.85 0.1 1 0.29 1C0.47 1 0.57 0.88 0.57 0.7C0.57 0.52 0.47 0.42 0.3 0.42C0.15 0.42 0.05 0.5 0 0.6"/></g>
<g transform="translate(958.40 1322.67)" fill="none" stroke="#ffffff" stroke-width="0.1463" stroke-linecap="round" stroke-linejoin="round" opacity="0.8"><path transform="translate(-19.40 -4.10) scale(8.200)" d="M0.55 0.12C0.48 0.04 0.4 0 0.3 0C0.1 0 0 0.2 0 0.5C0 0.8 0.1 1 0.3 1C0.45 1 0.57 0.92 0.57 0.75V0.52H0.33"/><path transform="translate(-12.57 -4.10) scale(8.200)" d="M0 1V0H0.3C0.47 0 0.57 0.1 0.57 0.28C0.57 0.45 0.47 0.55 0.3 0.55H0"/><path transform="translate(-5.05 -4.10) scale(8.200)" d="M0 0H0.4M0.2 0V1M0 1H0.4"/><path transform="translate(0.95 -4.10) scale(8.200)" d="M0.3 0C0.06 0 0 0.22 0 0.5C0 0.78 0.06 1 0.3 1C0.54 1 0.6 0.78 0.6 0.5C0.6 0.22 0.54 0 0.3 0Z"/><path transform="translate(7.90 -4.10) scale(8.200)" d="M0.08 0.27L0.29 0V1M0 1H0.57"/><path transform="translate(14.73 -4.10) scale(8.200)" d="M0.02 0.17C0.08 0.05 0.18 0 0.3 0C0.48 0 0.57 0.12 0.57 0.28C0.57 0.42 0.5 0.52 0.4 0.6L0 1H0.57"/></g>
<g transform="translate(1506.40 123.30)" fill="none" stroke="#ffffff" stroke-width="0.1163" stroke-linecap="round" stroke-linejoin="round" opacity="0.85"><path transform="translate(-4.90 -8.60) scale(17.200)" d="M0.08 0.27L0.29 0V1M0 1H0.57"/></g>
<g transform="translate(1506.40 150.30)" fill="none" stroke="#ffffff" stroke-width="0.1311" stroke-linecap="round" stroke-linejoin="round" opacity="0.8"><path transform="translate(-19.70 -6.10) scale(12.200)" d="M0 0L0.31 1L0.62 0"/><path transform="translate(-8.68 -6.10) scale(12.200)" d="M0 0V1H0.32C0.48 1 0.57 0.9 0.57 0.74C0.57 0.58 0.47 0.5 0.3 0.5H0M0.3 0.5C0.43 0.5 0.52 0.42 0.52 0.26C0.52 0.1 0.43 0 0.28 0H0"/><path transform="translate(2.03 -6.10) scale(12.200)" d="M0 0V0.7C0 0.9 0.1 1 0.285 1C0.47 1 0.57 0.9 0.57 0.7V0"/><path transform="translate(12.75 -6.10) scale(12.200)" d="M0.55 0.12C0.45 0.03 0.38 0 0.28 0C0.1 0 0.02 0.1 0.02 0.25C0.02 0.55 0.57 0.4 0.57 0.72C0.57 0.9 0.45 1 0.28 1C0.15 1 0.07 0.96 0 0.88"/></g>
<g transform="translate(1506.40 201.56)" fill="none" stroke="#ffffff" stroke-width="0.1163" stroke-linecap="round" stroke-linejoin="round" opacity="0.85"><path transform="translate(-4.90 -8.60) scale(17.200)" d="M0.02 0.17C0.08 0.05 0.18 0 0.3 0C0.48 0 0.57 0.12 0.57 0.28C0.57 0.42 0.5 0.52 0.4 0.6L0 1H0.57"/></g>
<g transform="translate(1506.40 221.77)" fill="none" stroke="#ffffff" stroke-width="0.1667" stroke-linecap="round" stroke-linejoin="round" opacity="0.8"><path transform="translate(-21.55 -2.70) scale(5.400)" d="M0.55 0.12C0.48 0.04 0.4 0 0.3 0C0.1 0 0 0.2 0 0.5C0 0.8 0.1 1 0.3 1C0.45 1 0.57 0.92 0.57 0.75V0.52H0.33"/><path transform="translate(-17.55 -2.70) scale(5.400)" d="M0 1V0H0.3C0.47 0 0.57 0.1 0.57 0.28C0.57 0.45 0.47 0.55 0.3 0.55H0"/><path transform="translate(-13.09 -2.70) scale(5.400)" d="M0 0H0.4M0.2 0V1M0 1H0.4"/><path transform="translate(-9.62 -2.70) scale(5.400)" d="M0.3 0C0.06 0 0 0.22 0 0.5C0 0.78 0.06 1 0.3 1C0.54 1 0.6 0.78 0.6 0.5C0.6 0.22 0.54 0 0.3 0Z"/><path transform="translate(-5.54 -2.70) scale(5.400)" d="M0.02 0.17C0.08 0.05 0.18 0 0.3 0C0.48 0 0.57 0.12 0.57 0.28C0.57 0.42 0.5 0.52 0.4 0.6L0 1H0.57"/><path transform="translate(-1.54 -2.70) scale(5.400)" d="M0.05 1H0.2C0.42 1 0.57 0.8 0.57 0.45C0.57 0.15 0.47 0 0.28 0C0.1 0 0 0.12 0 0.3C0 0.48 0.1 0.58 0.27 0.58C0.42 0.58 0.52 0.5 0.57 0.4"/><path transform="translate(2.38 -2.70) scale(5.400)" d="M0 1.12H0.6"/><path transform="translate(6.38 -2.70) scale(5.400)" d="M0 1L0.3 0L0.6 1M0.1 0.68H0.5"/><path transform="translate(10.47 -2.70) scale(5.400)" d="M0 1V0H0.22C0.47 0 0.57 0.2 0.57 0.5C0.57 0.8 0.47 1 0.22 1Z"/><path transform="translate(14.47 -2.70) scale(5.400)" d="M0.57 0.15C0.5 0.05 0.4 0 0.3 0C0.1 0 0 0.2 0 0.5C0 0.8 0.1 1 0.3 1C0.4 1 0.5 0.95 0.57 0.85"/><path transform="translate(18.47 -2.70) scale(5.400)" d="M0.02 0H0.55L0.27 0.38H0.33C0.5 0.38 0.57 0.52 0.57 0.68C0.57 0.88 0.47 1 0.28 1C0.15 1 0.07 0.95 0 0.88"/></g>
<g transform="translate(1506.40 279.83)" fill="none" stroke="#ffffff" stroke-width="0.1163" stroke-linecap="round" stroke-linejoin="round" opacity="0.85"><path transform="translate(-4.90 -8.60) scale(17.200)" d="M0.02 0H0.55L0.27 0.38H0.33C0.5 0.38 0.57 0.52 0.57 0.68C0.57 0.88 0.47 1 0.28 1C0.15 1 0.07 0.95 0 0.88"/></g>
<g transform="translate(1506.40 307.33)" fill="none" stroke="#ffffff" stroke-width="0.1391" stroke-linecap="round" stroke-linejoin="round" opacity="0.8"><path transform="translate(-13.70 -5.75) scale(11.500)" d="M0.55 0.12C0.48 0.04 0.4 0 0.3 0C0.1 0 0 0.2 0 0.5C0 0.8 0.1 1 0.3 1C0.45 1 0.57 0.92 0.57 0.75V0.52H0.33"/><path transform="translate(-3.28 -5.75) scale(11.500)" d="M0 1V0L0.57 1V0"/><path transform="translate(7.14 -5.75) scale(11.500)" d="M0 1V0H0.22C0.47 0 0.57 0.2 0.57 0.5C0.57 0.8 0.47 1 0.22 1Z"/></g>
<g transform="translate(1506.40 358.09)" fill="none" stroke="#ffffff" stroke-width="0.1163" stroke-linecap="round" stroke-linejoin="round" opacity="0.85"><path transform="translate(-5.16 -8.60) scale(17.200)" d="M0.44 1V0L0 0.68H0.6"/></g>
<g transform="translate(1506.40 378.29)" fill="none" stroke="#ffffff" stroke-width="0.1667" stroke-linecap="round" stroke-linejoin="round" opacity="0.8"><path transform="translate(-21.55 -2.70) scale(5.400)" d="M0.55 0.12C0.48 0.04 0.4 0 0.3 0C0.1 0 0 0.2 0 0.5C0 0.8 0.1 1 0.3 1C0.45 1 0.57 0.92 0.57 0.75V0.52H0.33"/><path transform="translate(-17.55 -2.70) scale(5.400)" d="M0 1V0H0.3C0.47 0 0.57 0.1 0.57 0.28C0.57 0.45 0.47 0.55 0.3 0.55H0"/><path transform="translate(-13.09 -2.70) scale(5.400)" d="M0 0H0.4M0.2 0V1M0 1H0.4"/><path transform="translate(-9.62 -2.70) scale(5.400)" d="M0.3 0C0.06 0 0 0.22 0 0.5C0 0.78 0.06 1 0.3 1C0.54 1 0.6 0.78 0.6 0.5C0.6 0.22 0.54 0 0.3 0Z"/><path transform="translate(-5.54 -2.70) scale(5.400)" d="M0.02 0.17C0.08 0.05 0.18 0 0.3 0C0.48 0 0.57 0.12 0.57 0.28C0.57 0.42 0.5 0.52 0.4 0.6L0 1H0.57"/><path transform="translate(-1.54 -2.70) scale(5.400)" d="M0.285 0.47C0.12 0.47 0.04 0.38 0.04 0.24C0.04 0.09 0.13 0 0.285 0C0.44 0 0.53 0.09 0.53 0.24C0.53 0.38 0.45 0.47 0.285 0.47C0.1 0.47 0 0.58 0 0.73C0 0.9 0.1 1 0.285 1C0.47 1 0.57 0.9 0.57 0.73C0.57 0.58 0.47 0.47 0.285 0.47Z"/><path transform="translate(2.38 -2.70) scale(5.400)" d="M0 1.12H0.6"/><path transform="translate(6.38 -2.70) scale(5.400)" d="M0 1L0.3 0L0.6 1M0.1 0.68H0.5"/><path transform="translate(10.47 -2.70) scale(5.400)" d="M0 1V0H0.22C0.47 0 0.57 0.2 0.57 0.5C0.57 0.8 0.47 1 0.22 1Z"/><path transform="translate(14.47 -2.70) scale(5.400)" d="M0.57 0.15C0.5 0.05 0.4 0 0.3 0C0.1 0 0 0.2 0 0.5C0 0.8 0.1 1 0.3 1C0.4 1 0.5 0.95 0.57 0.85"/><path transform="translate(18.47 -2.70) scale(5.400)" d="M0.02 0.17C0.08 0.05 0.18 0 0.3 0C0.48 0 0.57 0.12 0.57 0.28C0.57 0.42 0.5 0.52 0.4 0.6L0 1H0.57"/></g>
<g transform="translate(1506.40 436.36)" fill="none" stroke="#ffffff" stroke-width="0.1163" stroke-linecap="round" stroke-linejoin="round" opacity="0.85"><path transform="translate(-4.90 -8.60) scale(17.200)" d="M0.53 0H0.06L0.02 0.45C0.1 0.4 0.2 0.37 0.3 0.37C0.47 0.37 0.57 0.5 0.57 0.68C0.57 0.88 0.47 1 0.28 1C0.15 1 0.06 0.95 0 0.88"/></g>
<g transform="translate(1506.40 463.36)" fill="none" stroke="#ffffff" stroke-width="0.1311" stroke-linecap="round" stroke-linejoin="round" opacity="0.8"><path transform="translate(-19.70 -6.10) scale(12.200)" d="M0.28 0.3V0.86M0 0.58H0.56"/><path transform="translate(-8.93 -6.10) scale(12.200)" d="M0.02 0H0.55L0.27 0.38H0.33C0.5 0.38 0.57 0.52 0.57 0.68C0.57 0.88 0.47 1 0.28 1C0.15 1 0.07 0.95 0 0.88"/><path transform="translate(1.61 -6.10) scale(12.200)" d="M0 0L0.31 1L0.62 0"/><path transform="translate(12.75 -6.10) scale(12.200)" d="M0.02 0H0.55L0.27 0.38H0.33C0.5 0.38 0.57 0.52 0.57 0.68C0.57 0.88 0.47 1 0.28 1C0.15 1 0.07 0.95 0 0.88"/></g>
<g transform="translate(1506.40 514.62)" fill="none" stroke="#ffffff" stroke-width="0.1163" stroke-linecap="round" stroke-linejoin="round" opacity="0.85"><path transform="translate(-4.90 -8.60) scale(17.200)" d="M0.52 0H0.38C0.15 0 0 0.2 0 0.55C0 0.85 0.1 1 0.29 1C0.47 1 0.57 0.88 0.57 0.7C0.57 0.52 0.47 0.42 0.3 0.42C0.15 0.42 0.05 0.5 0 0.6"/></g>
<g transform="translate(1506.40 534.82)" fill="none" stroke="#ffffff" stroke-width="0.1667" stroke-linecap="round" stroke-linejoin="round" opacity="0.8"><path transform="translate(-21.55 -2.70) scale(5.400)" d="M0.55 0.12C0.48 0.04 0.4 0 0.3 0C0.1 0 0 0.2 0 0.5C0 0.8 0.1 1 0.3 1C0.45 1 0.57 0.92 0.57 0.75V0.52H0.33"/><path transform="translate(-17.55 -2.70) scale(5.400)" d="M0 1V0H0.3C0.47 0 0.57 0.1 0.57 0.28C0.57 0.45 0.47 0.55 0.3 0.55H0"/><path transform="translate(-13.09 -2.70) scale(5.400)" d="M0 0H0.4M0.2 0V1M0 1H0.4"/><path transform="translate(-9.62 -2.70) scale(5.400)" d="M0.3 0C0.06 0 0 0.22 0 0.5C0 0.78 0.06 1 0.3 1C0.54 1 0.6 0.78 0.6 0.5C0.6 0.22 0.54 0 0.3 0Z"/><path transform="translate(-5.54 -2.70) scale(5.400)" d="M0.02 0.17C0.08 0.05 0.18 0 0.3 0C0.48 0 0.57 0.12 0.57 0.28C0.57 0.42 0.5 0.52 0.4 0.6L0 1H0.57"/><path transform="translate(-1.54 -2.70) scale(5.400)" d="M0 0H0.57L0.17 1"/><path transform="translate(2.38 -2.70) scale(5.400)" d="M0 1.12H0.6"/><path transform="translate(6.38 -2.70) scale(5.400)" d="M0 1L0.3 0L0.6 1M0.1 0.68H0.5"/><path transform="translate(10.47 -2.70) scale(5.400)" d="M0 1V0H0.22C0.47 0 0.57 0.2 0.57 0.5C0.57 0.8 0.47 1 0.22 1Z"/><path transform="translate(14.47 -2.70) scale(5.400)" d="M0.57 0.15C0.5 0.05 0.4 0 0.3 0C0.1 0 0 0.2 0 0.5C0 0.8 0.1 1 0.3 1C0.4 1 0.5 0.95 0.57 0.85"/><path transform="translate(18.47 -2.70) scale(5.400)" d="M0.08 0.27L0.29 0V1M0 1H0.57"/></g>
<g transform="translate(1506.40 592.89)" fill="none" stroke="#ffffff" stroke-width="0.1163" stroke-linecap="round" stroke-linejoin="round" opacity="0.85"><path transform="translate(-4.90 -8.60) scale(17.200)" d="M0 0H0.57L0.17 1"/></g>
<g transform="translate(1506.40 613.09)" fill="none" stroke="#ffffff" stroke-width="0.1667" stroke-linecap="round" stroke-linejoin="round" opacity="0.8"><path transform="translate(-21.55 -2.70) scale(5.400)" d="M0.55 0.12C0.48 0.04 0.4 0 0.3 0C0.1 0 0 0.2 0 0.5C0 0.8 0.1 1 0.3 1C0.45 1 0.57 0.92 0.57 0.75V0.52H0.33"/><path transform="translate(-17.55 -2.70) scale(5.400)" d="M0 1V0H0.3C0.47 0 0.57 0.1 0.57 0.28C0.57 0.45 0.47 0.55 0.3 0.55H0"/><path transform="translate(-13.09 -2.70) scale(5.400)" d="M0 0H0.4M0.2 0V1M0 1H0.4"/><path transform="translate(-9.62 -2.70) scale(5.400)" d="M0.3 0C0.06 0 0 0.22 0 0.5C0 0.78 0.06 1 0.3 1C0.54 1 0.6 0.78 0.6 0.5C0.6 0.22 0.54 0 0.3 0Z"/><path transform="translate(-5.54 -2.70) scale(5.400)" d="M0.02 0.17C0.08 0.05 0.18 0 0.3 0C0.48 0 0.57 0.12 0.57 0.28C0.57 0.42 0.5 0.52 0.4 0.6L0 1H0.57"/><path transform="translate(-1.54 -2.70) scale(5.400)" d="M0.52 0H0.38C0.15 0 0 0.2 0 0.55C0 0.85 0.1 1 0.29 1C0.47 1 0.57 0.88 0.57 0.7C0.57 0.52 0.47 0.42 0.3 0.42C0.15 0.42 0.05 0.5 0 0.6"/><path transform="translate(2.38 -2.70) scale(5.400)" d="M0 1.12H0.6"/><path transform="translate(6.38 -2.70) scale(5.400)" d="M0 1L0.3 0L0.6 1M0.1 0.68H0.5"/><path transform="translate(10.47 -2.70) scale(5.400)" d="M0 1V0H0.22C0.47 0 0.57 0.2 0.57 0.5C0.57 0.8 0.47 1 0.22 1Z"/><path transform="translate(14.47 -2.70) scale(5.400)" d="M0.57 0.15C0.5 0.05 0.4 0 0.3 0C0.1 0 0 0.2 0 0.5C0 0.8 0.1 1 0.3 1C0.4 1 0.5 0.95 0.57 0.85"/><path transform="translate(18.47 -2.70) scale(5.400)" d="M0.285 0C0.06 0 0 0.22 0 0.5C0 0.78 0.06 1 0.285 1C0.51 1 0.57 0.78 0.57 0.5C0.57 0.22 0.51 0 0.285 0Z"/></g>
<g transform="translate(1506.40 671.16)" fill="none" stroke="#ffffff" stroke-width="0.1163" stroke-linecap="round" stroke-linejoin="round" opacity="0.85"><path transform="translate(-4.90 -8.60) scale(17.200)" d="M0.285 0.47C0.12 0.47 0.04 0.38 0.04 0.24C0.04 0.09 0.13 0 0.285 0C0.44 0 0.53 0.09 0.53 0.24C0.53 0.38 0.45 0.47 0.285 0.47C0.1 0.47 0 0.58 0 0.73C0 0.9 0.1 1 0.285 1C0.47 1 0.57 0.9 0.57 0.73C0.57 0.58 0.47 0.47 0.285 0.47Z"/></g>
<g transform="translate(1506.40 698.66)" fill="none" stroke="#ffffff" stroke-width="0.1391" stroke-linecap="round" stroke-linejoin="round" opacity="0.8"><path transform="translate(-13.70 -5.75) scale(11.500)" d="M0.55 0.12C0.48 0.04 0.4 0 0.3 0C0.1 0 0 0.2 0 0.5C0 0.8 0.1 1 0.3 1C0.45 1 0.57 0.92 0.57 0.75V0.52H0.33"/><path transform="translate(-3.28 -5.75) scale(11.500)" d="M0 1V0L0.57 1V0"/><path transform="translate(7.14 -5.75) scale(11.500)" d="M0 1V0H0.22C0.47 0 0.57 0.2 0.57 0.5C0.57 0.8 0.47 1 0.22 1Z"/></g>
<g transform="translate(1506.40 749.42)" fill="none" stroke="#ffffff" stroke-width="0.1163" stroke-linecap="round" stroke-linejoin="round" opacity="0.85"><path transform="translate(-4.90 -8.60) scale(17.200)" d="M0.05 1H0.2C0.42 1 0.57 0.8 0.57 0.45C0.57 0.15 0.47 0 0.28 0C0.1 0 0 0.12 0 0.3C0 0.48 0.1 0.58 0.27 0.58C0.42 0.58 0.52 0.5 0.57 0.4"/></g>
<g transform="translate(1506.40 774.82)" fill="none" stroke="#ffffff" stroke-width="0.1463" stroke-linecap="round" stroke-linejoin="round" opacity="0.8"><path transform="translate(-19.40 -4.10) scale(8.200)" d="M0.55 0.12C0.48 0.04 0.4 0 0.3 0C0.1 0 0 0.2 0 0.5C0 0.8 0.1 1 0.3 1C0.45 1 0.57 0.92 0.57 0.75V0.52H0.33"/><path transform="translate(-12.60 -4.10) scale(8.200)" d="M0 1V0H0.3C0.47 0 0.57 0.1 0.57 0.28C0.57 0.45 0.47 0.55 0.3 0.55H0"/><path transform="translate(-5.10 -4.10) scale(8.200)" d="M0 0H0.4M0.2 0V1M0 1H0.4"/><path transform="translate(0.88 -4.10) scale(8.200)" d="M0.3 0C0.06 0 0 0.22 0 0.5C0 0.78 0.06 1 0.3 1C0.54 1 0.6 0.78 0.6 0.5C0.6 0.22 0.54 0 0.3 0Z"/><path transform="translate(7.80 -4.10) scale(8.200)" d="M0.02 0.17C0.08 0.05 0.18 0 0.3 0C0.48 0 0.57 0.12 0.57 0.28C0.57 0.42 0.5 0.52 0.4 0.6L0 1H0.57"/><path transform="translate(14.48 -4.10) scale(8.200)" d="M0.44 1V0L0 0.68H0.6"/></g>
<g transform="translate(1506.40 827.69)" fill="none" stroke="#ffffff" stroke-width="0.1163" stroke-linecap="round" stroke-linejoin="round" opacity="0.85"><path transform="translate(-13.50 -8.60) scale(17.200)" d="M0.08 0.27L0.29 0V1M0 1H0.57"/><path transform="translate(3.70 -8.60) scale(17.200)" d="M0.285 0C0.06 0 0 0.22 0 0.5C0 0.78 0.06 1 0.285 1C0.51 1 0.57 0.78 0.57 0.5C0.57 0.22 0.51 0 0.285 0Z"/></g>
<g transform="translate(1506.40 853.09)" fill="none" stroke="#ffffff" stroke-width="0.1463" stroke-linecap="round" stroke-linejoin="round" opacity="0.8"><path transform="translate(-19.40 -4.10) scale(8.200)" d="M0.55 0.12C0.48 0.04 0.4 0 0.3 0C0.1 0 0 0.2 0 0.5C0 0.8 0.1 1 0.3 1C0.45 1 0.57 0.92 0.57 0.75V0.52H0.33"/><path transform="translate(-12.57 -4.10) scale(8.200)" d="M0 1V0H0.3C0.47 0 0.57 0.1 0.57 0.28C0.57 0.45 0.47 0.55 0.3 0.55H0"/><path transform="translate(-5.05 -4.10) scale(8.200)" d="M0 0H0.4M0.2 0V1M0 1H0.4"/><path transform="translate(0.95 -4.10) scale(8.200)" d="M0.3 0C0.06 0 0 0.22 0 0.5C0 0.78 0.06 1 0.3 1C0.54 1 0.6 0.78 0.6 0.5C0.6 0.22 0.54 0 0.3 0Z"/><path transform="translate(7.90 -4.10) scale(8.200)" d="M0.02 0.17C0.08 0.05 0.18 0 0.3 0C0.48 0 0.57 0.12 0.57 0.28C0.57 0.42 0.5 0.52 0.4 0.6L0 1H0.57"/><path transform="translate(14.73 -4.10) scale(8.200)" d="M0.02 0H0.55L0.27 0.38H0.33C0.5 0.38 0.57 0.52 0.57 0.68C0.57 0.88 0.47 1 0.28 1C0.15 1 0.07 0.95 0 0.88"/></g>
<g transform="translate(1506.40 905.95)" fill="none" stroke="#ffffff" stroke-width="0.1163" stroke-linecap="round" stroke-linejoin="round" opacity="0.85"><path transform="translate(-13.50 -8.60) scale(17.200)" d="M0.08 0.27L0.29 0V1M0 1H0.57"/><path transform="translate(3.70 -8.60) scale(17.200)" d="M0.08 0.27L0.29 0V1M0 1H0.57"/></g>
<g transform="translate(1506.40 933.45)" fill="none" stroke="#ffffff" stroke-width="0.1391" stroke-linecap="round" stroke-linejoin="round" opacity="0.8"><path transform="translate(-14.20 -5.75) scale(11.500)" d="M0 1V0H0.3C0.47 0 0.57 0.1 0.57 0.27C0.57 0.43 0.47 0.53 0.3 0.53H0M0.3 0.53L0.57 1"/><path transform="translate(-3.28 -5.75) scale(11.500)" d="M0 0V0.7C0 0.9 0.1 1 0.285 1C0.47 1 0.57 0.9 0.57 0.7V0"/><path transform="translate(7.64 -5.75) scale(11.500)" d="M0 1V0L0.57 1V0"/></g>
<g transform="translate(1506.40 984.22)" fill="none" stroke="#ffffff" stroke-width="0.1163" stroke-linecap="round" stroke-linejoin="round" opacity="0.85"><path transform="translate(-13.50 -8.60) scale(17.200)" d="M0.08 0.27L0.29 0V1M0 1H0.57"/><path transform="translate(3.70 -8.60) scale(17.200)" d="M0.02 0.17C0.08 0.05 0.18 0 0.3 0C0.48 0 0.57 0.12 0.57 0.28C0.57 0.42 0.5 0.52 0.4 0.6L0 1H0.57"/></g>
<g transform="translate(1506.40 1009.62)" fill="none" stroke="#ffffff" stroke-width="0.1463" stroke-linecap="round" stroke-linejoin="round" opacity="0.8"><path transform="translate(-19.40 -4.10) scale(8.200)" d="M0.55 0.12C0.48 0.04 0.4 0 0.3 0C0.1 0 0 0.2 0 0.5C0 0.8 0.1 1 0.3 1C0.45 1 0.57 0.92 0.57 0.75V0.52H0.33"/><path transform="translate(-12.57 -4.10) scale(8.200)" d="M0 1V0H0.3C0.47 0 0.57 0.1 0.57 0.28C0.57 0.45 0.47 0.55 0.3 0.55H0"/><path transform="translate(-5.05 -4.10) scale(8.200)" d="M0 0H0.4M0.2 0V1M0 1H0.4"/><path transform="translate(0.95 -4.10) scale(8.200)" d="M0.3 0C0.06 0 0 0.22 0 0.5C0 0.78 0.06 1 0.3 1C0.54 1 0.6 0.78 0.6 0.5C0.6 0.22 0.54 0 0.3 0Z"/><path transform="translate(7.90 -4.10) scale(8.200)" d="M0.02 0.17C0.08 0.05 0.18 0 0.3 0C0.48 0 0.57 0.12 0.57 0.28C0.57 0.42 0.5 0.52 0.4 0.6L0 1H0.57"/><path transform="translate(14.73 -4.10) scale(8.200)" d="M0.02 0.17C0.08 0.05 0.18 0 0.3 0C0.48 0 0.57 0.12 0.57 0.28C0.57 0.42 0.5 0.52 0.4 0.6L0 1H0.57"/></g>
<g transform="translate(1506.40 1062.48)" fill="none" stroke="#ffffff" stroke-width="0.1163" stroke-linecap="round" stroke-linejoin="round" opacity="0.85"><path transform="translate(-13.50 -8.60) scale(17.200)" d="M0.08 0.27L0.29 0V1M0 1H0.57"/><path transform="translate(3.70 -8.60) scale(17.200)" d="M0.02 0H0.55L0.27 0.38H0.33C0.5 0.38 0.57 0.52 0.57 0.68C0.57 0.88 0.47 1 0.28 1C0.15 1 0.07 0.95 0 0.88"/></g>
<g transform="translate(1506.40 1089.98)" fill="none" stroke="#ffffff" stroke-width="0.1391" stroke-linecap="round" stroke-linejoin="round" opacity="0.8"><path transform="translate(-13.70 -5.75) scale(11.500)" d="M0.55 0.12C0.48 0.04 0.4 0 0.3 0C0.1 0 0 0.2 0 0.5C0 0.8 0.1 1 0.3 1C0.45 1 0.57 0.92 0.57 0.75V0.52H0.33"/><path transform="translate(-3.28 -5.75) scale(11.500)" d="M0 1V0L0.57 1V0"/><path transform="translate(7.14 -5.75) scale(11.500)" d="M0 1V0H0.22C0.47 0 0.57 0.2 0.57 0.5C0.57 0.8 0.47 1 0.22 1Z"/></g>
<g transform="translate(1506.40 1140.75)" fill="none" stroke="#ffffff" stroke-width="0.1163" stroke-linecap="round" stroke-linejoin="round" opacity="0.85"><path transform="translate(-13.63 -8.60) scale(17.200)" d="M0.08 0.27L0.29 0V1M0 1H0.57"/><path transform="translate(3.31 -8.60) scale(17.200)" d="M0.44 1V0L0 0.68H0.6"/></g>
<g transform="translate(1506.40 1166.14)" fill="none" stroke="#ffffff" stroke-width="0.1463" stroke-linecap="round" stroke-linejoin="round" opacity="0.8"><path transform="translate(-19.40 -4.10) scale(8.200)" d="M0.55 0.12C0.48 0.04 0.4 0 0.3 0C0.1 0 0 0.2 0 0.5C0 0.8 0.1 1 0.3 1C0.45 1 0.57 0.92 0.57 0.75V0.52H0.33"/><path transform="translate(-12.57 -4.10) scale(8.200)" d="M0 1V0H0.3C0.47 0 0.57 0.1 0.57 0.28C0.57 0.45 0.47 0.55 0.3 0.55H0"/><path transform="translate(-5.05 -4.10) scale(8.200)" d="M0 0H0.4M0.2 0V1M0 1H0.4"/><path transform="translate(0.95 -4.10) scale(8.200)" d="M0.3 0C0.06 0 0 0.22 0 0.5C0 0.78 0.06 1 0.3 1C0.54 1 0.6 0.78 0.6 0.5C0.6 0.22 0.54 0 0.3 0Z"/><path transform="translate(7.90 -4.10) scale(8.200)" d="M0.02 0.17C0.08 0.05 0.18 0 0.3 0C0.48 0 0.57 0.12 0.57 0.28C0.57 0.42 0.5 0.52 0.4 0.6L0 1H0.57"/><path transform="translate(14.73 -4.10) scale(8.200)" d="M0.08 0.27L0.29 0V1M0 1H0.57"/></g>
<g transform="translate(1506.40 1219.01)" fill="none" stroke="#ffffff" stroke-width="0.1163" stroke-linecap="round" stroke-linejoin="round" opacity="0.85"><path transform="translate(-13.50 -8.60) scale(17.200)" d="M0.08 0.27L0.29 0V1M0 1H0.57"/><path transform="translate(3.70 -8.60) scale(17.200)" d="M0.53 0H0.06L0.02 0.45C0.1 0.4 0.2 0.37 0.3 0.37C0.47 0.37 0.57 0.5 0.57 0.68C0.57 0.88 0.47 1 0.28 1C0.15 1 0.06 0.95 0 0.88"/></g>
<g transform="translate(1506.40 1244.41)" fill="none" stroke="#ffffff" stroke-width="0.1463" stroke-linecap="round" stroke-linejoin="round" opacity="0.8"><path transform="translate(-19.40 -4.10) scale(8.200)" d="M0.55 0.12C0.48 0.04 0.4 0 0.3 0C0.1 0 0 0.2 0 0.5C0 0.8 0.1 1 0.3 1C0.45 1 0.57 0.92 0.57 0.75V0.52H0.33"/><path transform="translate(-12.57 -4.10) scale(8.200)" d="M0 1V0H0.3C0.47 0 0.57 0.1 0.57 0.28C0.57 0.45 0.47 0.55 0.3 0.55H0"/><path transform="translate(-5.05 -4.10) scale(8.200)" d="M0 0H0.4M0.2 0V1M0 1H0.4"/><path transform="translate(0.95 -4.10) scale(8.200)" d="M0.3 0C0.06 0 0 0.22 0 0.5C0 0.78 0.06 1 0.3 1C0.54 1 0.6 0.78 0.6 0.5C0.6 0.22 0.54 0 0.3 0Z"/><path transform="translate(7.90 -4.10) scale(8.200)" d="M0.02 0.17C0.08 0.05 0.18 0 0.3 0C0.48 0 0.57 0.12 0.57 0.28C0.57 0.42 0.5 0.52 0.4 0.6L0 1H0.57"/><path transform="translate(14.73 -4.10) scale(8.200)" d="M0.285 0C0.06 0 0 0.22 0 0.5C0 0.78 0.06 1 0.285 1C0.51 1 0.57 0.78 0.57 0.5C0.57 0.22 0.51 0 0.285 0Z"/></g>
<g transform="translate(1506.40 1297.27)" fill="none" stroke="#ffffff" stroke-width="0.1163" stroke-linecap="round" stroke-linejoin="round" opacity="0.85"><path transform="translate(-13.50 -8.60) scale(17.200)" d="M0.08 0.27L0.29 0V1M0 1H0.57"/><path transform="translate(3.70 -8.60) scale(17.200)" d="M0.52 0H0.38C0.15 0 0 0.2 0 0.55C0 0.85 0.1 1 0.29 1C0.47 1 0.57 0.88 0.57 0.7C0.57 0.52 0.47 0.42 0.3 0.42C0.15 0.42 0.05 0.5 0 0.6"/></g>
<g transform="translate(1506.40 1322.67)" fill="none" stroke="#ffffff" stroke-width="0.1463" stroke-linecap="round" stroke-linejoin="round" opacity="0.8"><path transform="translate(-19.40 -4.10) scale(8.200)" d="M0.55 0.12C0.48 0.04 0.4 0 0.3 0C0.1 0 0 0.2 0 0.5C0 0.8 0.1 1 0.3 1C0.45 1 0.57 0.92 0.57 0.75V0.52H0.33"/><path transform="translate(-12.57 -4.10) scale(8.200)" d="M0 1V0H0.3C0.47 0 0.57 0.1 0.57 0.28C0.57 0.45 0.47 0.55 0.3 0.55H0"/><path transform="translate(-5.05 -4.10) scale(8.200)" d="M0 0H0.4M0.2 0V1M0 1H0.4"/><path transform="translate(0.95 -4.10) scale(8.200)" d="M0.3 0C0.06 0 0 0.22 0 0.5C0 0.78 0.06 1 0.3 1C0.54 1 0.6 0.78 0.6 0.5C0.6 0.22 0.54 0 0.3 0Z"/><path transform="translate(7.90 -4.10) scale(8.200)" d="M0.08 0.27L0.29 0V1M0 1H0.57"/><path transform="translate(14.73 -4.10) scale(8.200)" d="M0.05 1H0.2C0.42 1 0.57 0.8 0.57 0.45C0.57 0.15 0.47 0 0.28 0C0.1 0 0 0.12 0 0.3C0 0.48 0.1 0.58 0.27 0.58C0.42 0.58 0.52 0.5 0.57 0.4"/></g>
<g transform="translate(460.60 372.80) rotate(-90)" fill="none" stroke="#ffffff" stroke-width="0.1636" stroke-linecap="round" stroke-linejoin="round" opacity="0.7"><path transform="translate(-1.57 -2.75) scale(5.500)" d="M0.08 0.27L0.29 0V1M0 1H0.57"/></g>
<g transform="translate(469.60 372.80) rotate(-90)" fill="none" stroke="#ffffff" stroke-width="0.1739" stroke-linecap="round" stroke-linejoin="round" opacity="0.7"><path transform="translate(-6.80 -2.30) scale(4.600)" d="M0.28 0.3V0.86M0 0.58H0.56"/><path transform="translate(-3.16 -2.30) scale(4.600)" d="M0.08 0.27L0.29 0V1M0 1H0.57"/><path transform="translate(0.40 -2.30) scale(4.600)" d="M0 0L0.31 1L0.62 0"/><path transform="translate(4.18 -2.30) scale(4.600)" d="M0.08 0.27L0.29 0V1M0 1H0.57"/></g>
<g transform="translate(490.20 372.80) rotate(-90)" fill="none" stroke="#ffffff" stroke-width="0.1636" stroke-linecap="round" stroke-linejoin="round" opacity="0.7"><path transform="translate(-1.57 -2.75) scale(5.500)" d="M0.02 0.17C0.08 0.05 0.18 0 0.3 0C0.48 0 0.57 0.12 0.57 0.28C0.57 0.42 0.5 0.52 0.4 0.6L0 1H0.57"/></g>
<g transform="translate(499.20 372.80) rotate(-90)" fill="none" stroke="#ffffff" stroke-width="0.1739" stroke-linecap="round" stroke-linejoin="round" opacity="0.7"><path transform="translate(-5.45 -2.30) scale(4.600)" d="M0.55 0.12C0.48 0.04 0.4 0 0.3 0C0.1 0 0 0.2 0 0.5C0 0.8 0.1 1 0.3 1C0.45 1 0.57 0.92 0.57 0.75V0.52H0.33"/><path transform="translate(-1.31 -2.30) scale(4.600)" d="M0 1V0L0.57 1V0"/><path transform="translate(2.83 -2.30) scale(4.600)" d="M0 1V0H0.22C0.47 0 0.57 0.2 0.57 0.5C0.57 0.8 0.47 1 0.22 1Z"/></g>
<g transform="translate(563.20 374.50) rotate(-90)" fill="none" stroke="#ffffff" stroke-width="0.1636" stroke-linecap="round" stroke-linejoin="round" opacity="0.7"><path transform="translate(-1.57 -2.75) scale(5.500)" d="M0.08 0.27L0.29 0V1M0 1H0.57"/></g>
<g transform="translate(572.20 374.50) rotate(-90)" fill="none" stroke="#ffffff" stroke-width="0.1739" stroke-linecap="round" stroke-linejoin="round" opacity="0.7"><path transform="translate(-6.80 -2.30) scale(4.600)" d="M0.28 0.3V0.86M0 0.58H0.56"/><path transform="translate(-3.16 -2.30) scale(4.600)" d="M0.08 0.27L0.29 0V1M0 1H0.57"/><path transform="translate(0.40 -2.30) scale(4.600)" d="M0 0L0.31 1L0.62 0"/><path transform="translate(4.18 -2.30) scale(4.600)" d="M0.08 0.27L0.29 0V1M0 1H0.57"/></g>
<g transform="translate(592.80 374.50) rotate(-90)" fill="none" stroke="#ffffff" stroke-width="0.1636" stroke-linecap="round" stroke-linejoin="round" opacity="0.7"><path transform="translate(-1.57 -2.75) scale(5.500)" d="M0.02 0.17C0.08 0.05 0.18 0 0.3 0C0.48 0 0.57 0.12 0.57 0.28C0.57 0.42 0.5 0.52 0.4 0.6L0 1H0.57"/></g>
<g transform="translate(601.80 374.50) rotate(-90)" fill="none" stroke="#ffffff" stroke-width="0.1739" stroke-linecap="round" stroke-linejoin="round" opacity="0.7"><path transform="translate(-5.45 -2.30) scale(4.600)" d="M0.55 0.12C0.48 0.04 0.4 0 0.3 0C0.1 0 0 0.2 0 0.5C0 0.8 0.1 1 0.3 1C0.45 1 0.57 0.92 0.57 0.75V0.52H0.33"/><path transform="translate(-1.31 -2.30) scale(4.600)" d="M0 1V0L0.57 1V0"/><path transform="translate(2.83 -2.30) scale(4.600)" d="M0 1V0H0.22C0.47 0 0.57 0.2 0.57 0.5C0.57 0.8 0.47 1 0.22 1Z"/></g>
<g transform="translate(655.60 371.30) rotate(-90)" fill="none" stroke="#ffffff" stroke-width="0.1636" stroke-linecap="round" stroke-linejoin="round" opacity="0.7"><path transform="translate(-1.57 -2.75) scale(5.500)" d="M0.08 0.27L0.29 0V1M0 1H0.57"/></g>
<g transform="translate(664.60 371.30) rotate(-90)" fill="none" stroke="#ffffff" stroke-width="0.1739" stroke-linecap="round" stroke-linejoin="round" opacity="0.7"><path transform="translate(-6.80 -2.30) scale(4.600)" d="M0.28 0.3V0.86M0 0.58H0.56"/><path transform="translate(-3.16 -2.30) scale(4.600)" d="M0.08 0.27L0.29 0V1M0 1H0.57"/><path transform="translate(0.40 -2.30) scale(4.600)" d="M0 0L0.31 1L0.62 0"/><path transform="translate(4.18 -2.30) scale(4.600)" d="M0.08 0.27L0.29 0V1M0 1H0.57"/></g>
<g transform="translate(685.20 371.30) rotate(-90)" fill="none" stroke="#ffffff" stroke-width="0.1636" stroke-linecap="round" stroke-linejoin="round" opacity="0.7"><path transform="translate(-1.57 -2.75) scale(5.500)" d="M0.02 0.17C0.08 0.05 0.18 0 0.3 0C0.48 0 0.57 0.12 0.57 0.28C0.57 0.42 0.5 0.52 0.4 0.6L0 1H0.57"/></g>
<g transform="translate(694.20 371.30) rotate(-90)" fill="none" stroke="#ffffff" stroke-width="0.1739" stroke-linecap="round" stroke-linejoin="round" opacity="0.7"><path transform="translate(-5.45 -2.30) scale(4.600)" d="M0.55 0.12C0.48 0.04 0.4 0 0.3 0C0.1 0 0 0.2 0 0.5C0 0.8 0.1 1 0.3 1C0.45 1 0.57 0.92 0.57 0.75V0.52H0.33"/><path transform="translate(-1.31 -2.30) scale(4.600)" d="M0 1V0L0.57 1V0"/><path transform="translate(2.83 -2.30) scale(4.600)" d="M0 1V0H0.22C0.47 0 0.57 0.2 0.57 0.5C0.57 0.8 0.47 1 0.22 1Z"/></g>
<g transform="translate(273.20 691.90) rotate(-90)" fill="none" stroke="#ffffff" stroke-width="0.1636" stroke-linecap="round" stroke-linejoin="round" opacity="0.7"><path transform="translate(-1.57 -2.75) scale(5.500)" d="M0.08 0.27L0.29 0V1M0 1H0.57"/></g>
<g transform="translate(282.20 691.90) rotate(-90)" fill="none" stroke="#ffffff" stroke-width="0.1739" stroke-linecap="round" stroke-linejoin="round" opacity="0.7"><path transform="translate(-6.80 -2.30) scale(4.600)" d="M0.28 0.3V0.86M0 0.58H0.56"/><path transform="translate(-3.16 -2.30) scale(4.600)" d="M0.02 0H0.55L0.27 0.38H0.33C0.5 0.38 0.57 0.52 0.57 0.68C0.57 0.88 0.47 1 0.28 1C0.15 1 0.07 0.95 0 0.88"/><path transform="translate(0.40 -2.30) scale(4.600)" d="M0 0L0.31 1L0.62 0"/><path transform="translate(4.18 -2.30) scale(4.600)" d="M0.02 0H0.55L0.27 0.38H0.33C0.5 0.38 0.57 0.52 0.57 0.68C0.57 0.88 0.47 1 0.28 1C0.15 1 0.07 0.95 0 0.88"/></g>
<g transform="translate(302.80 691.90) rotate(-90)" fill="none" stroke="#ffffff" stroke-width="0.1636" stroke-linecap="round" stroke-linejoin="round" opacity="0.7"><path transform="translate(-1.57 -2.75) scale(5.500)" d="M0.02 0.17C0.08 0.05 0.18 0 0.3 0C0.48 0 0.57 0.12 0.57 0.28C0.57 0.42 0.5 0.52 0.4 0.6L0 1H0.57"/></g>
<g transform="translate(311.80 691.90) rotate(-90)" fill="none" stroke="#ffffff" stroke-width="0.1739" stroke-linecap="round" stroke-linejoin="round" opacity="0.7"><path transform="translate(-5.45 -2.30) scale(4.600)" d="M0.55 0.12C0.48 0.04 0.4 0 0.3 0C0.1 0 0 0.2 0 0.5C0 0.8 0.1 1 0.3 1C0.45 1 0.57 0.92 0.57 0.75V0.52H0.33"/><path transform="translate(-1.31 -2.30) scale(4.600)" d="M0 1V0L0.57 1V0"/><path transform="translate(2.83 -2.30) scale(4.600)" d="M0 1V0H0.22C0.47 0 0.57 0.2 0.57 0.5C0.57 0.8 0.47 1 0.22 1Z"/></g>
<g transform="translate(184.10 752.60) rotate(-90)" fill="none" stroke="#ffffff" stroke-width="0.1636" stroke-linecap="round" stroke-linejoin="round" opacity="0.7"><path transform="translate(-1.57 -2.75) scale(5.500)" d="M0.08 0.27L0.29 0V1M0 1H0.57"/></g>
<g transform="translate(193.10 752.60) rotate(-90)" fill="none" stroke="#ffffff" stroke-width="0.1739" stroke-linecap="round" stroke-linejoin="round" opacity="0.7"><path transform="translate(-6.80 -2.30) scale(4.600)" d="M0.28 0.3V0.86M0 0.58H0.56"/><path transform="translate(-3.16 -2.30) scale(4.600)" d="M0.02 0H0.55L0.27 0.38H0.33C0.5 0.38 0.57 0.52 0.57 0.68C0.57 0.88 0.47 1 0.28 1C0.15 1 0.07 0.95 0 0.88"/><path transform="translate(0.40 -2.30) scale(4.600)" d="M0 0L0.31 1L0.62 0"/><path transform="translate(4.18 -2.30) scale(4.600)" d="M0.02 0H0.55L0.27 0.38H0.33C0.5 0.38 0.57 0.52 0.57 0.68C0.57 0.88 0.47 1 0.28 1C0.15 1 0.07 0.95 0 0.88"/></g>
<g transform="translate(213.70 752.60) rotate(-90)" fill="none" stroke="#ffffff" stroke-width="0.1636" stroke-linecap="round" stroke-linejoin="round" opacity="0.7"><path transform="translate(-1.57 -2.75) scale(5.500)" d="M0.02 0.17C0.08 0.05 0.18 0 0.3 0C0.48 0 0.57 0.12 0.57 0.28C0.57 0.42 0.5 0.52 0.4 0.6L0 1H0.57"/></g>
<g transform="translate(222.70 752.60) rotate(-90)" fill="none" stroke="#ffffff" stroke-width="0.1739" stroke-linecap="round" stroke-linejoin="round" opacity="0.7"><path transform="translate(-5.45 -2.30) scale(4.600)" d="M0.55 0.12C0.48 0.04 0.4 0 0.3 0C0.1 0 0 0.2 0 0.5C0 0.8 0.1 1 0.3 1C0.45 1 0.57 0.92 0.57 0.75V0.52H0.33"/><path transform="translate(-1.31 -2.30) scale(4.600)" d="M0 1V0L0.57 1V0"/><path transform="translate(2.83 -2.30) scale(4.600)" d="M0 1V0H0.22C0.47 0 0.57 0.2 0.57 0.5C0.57 0.8 0.47 1 0.22 1Z"/></g>
<g transform="translate(273.20 752.60) rotate(-90)" fill="none" stroke="#ffffff" stroke-width="0.1636" stroke-linecap="round" stroke-linejoin="round" opacity="0.7"><path transform="translate(-1.57 -2.75) scale(5.500)" d="M0.08 0.27L0.29 0V1M0 1H0.57"/></g>
<g transform="translate(282.20 752.60) rotate(-90)" fill="none" stroke="#ffffff" stroke-width="0.1739" stroke-linecap="round" stroke-linejoin="round" opacity="0.7"><path transform="translate(-6.80 -2.30) scale(4.600)" d="M0.28 0.3V0.86M0 0.58H0.56"/><path transform="translate(-3.16 -2.30) scale(4.600)" d="M0.02 0H0.55L0.27 0.38H0.33C0.5 0.38 0.57 0.52 0.57 0.68C0.57 0.88 0.47 1 0.28 1C0.15 1 0.07 0.95 0 0.88"/><path transform="translate(0.40 -2.30) scale(4.600)" d="M0 0L0.31 1L0.62 0"/><path transform="translate(4.18 -2.30) scale(4.600)" d="M0.02 0H0.55L0.27 0.38H0.33C0.5 0.38 0.57 0.52 0.57 0.68C0.57 0.88 0.47 1 0.28 1C0.15 1 0.07 0.95 0 0.88"/></g>
<g transform="translate(302.80 752.60) rotate(-90)" fill="none" stroke="#ffffff" stroke-width="0.1636" stroke-linecap="round" stroke-linejoin="round" opacity="0.7"><path transform="translate(-1.57 -2.75) scale(5.500)" d="M0.02 0.17C0.08 0.05 0.18 0 0.3 0C0.48 0 0.57 0.12 0.57 0.28C0.57 0.42 0.5 0.52 0.4 0.6L0 1H0.57"/></g>
<g transform="translate(311.80 752.60) rotate(-90)" fill="none" stroke="#ffffff" stroke-width="0.1739" stroke-linecap="round" stroke-linejoin="round" opacity="0.7"><path transform="translate(-5.45 -2.30) scale(4.600)" d="M0.55 0.12C0.48 0.04 0.4 0 0.3 0C0.1 0 0 0.2 0 0.5C0 0.8 0.1 1 0.3 1C0.45 1 0.57 0.92 0.57 0.75V0.52H0.33"/><path transform="translate(-1.31 -2.30) scale(4.600)" d="M0 1V0L0.57 1V0"/><path transform="translate(2.83 -2.30) scale(4.600)" d="M0 1V0H0.22C0.47 0 0.57 0.2 0.57 0.5C0.57 0.8 0.47 1 0.22 1Z"/></g>
<g transform="translate(184.10 813.70) rotate(-90)" fill="none" stroke="#ffffff" stroke-width="0.1636" stroke-linecap="round" stroke-linejoin="round" opacity="0.7"><path transform="translate(-1.57 -2.75) scale(5.500)" d="M0.08 0.27L0.29 0V1M0 1H0.57"/></g>
<g transform="translate(193.10 813.70) rotate(-90)" fill="none" stroke="#ffffff" stroke-width="0.1739" stroke-linecap="round" stroke-linejoin="round" opacity="0.7"><path transform="translate(-6.80 -2.30) scale(4.600)" d="M0.28 0.3V0.86M0 0.58H0.56"/><path transform="translate(-3.16 -2.30) scale(4.600)" d="M0.02 0H0.55L0.27 0.38H0.33C0.5 0.38 0.57 0.52 0.57 0.68C0.57 0.88 0.47 1 0.28 1C0.15 1 0.07 0.95 0 0.88"/><path transform="translate(0.40 -2.30) scale(4.600)" d="M0 0L0.31 1L0.62 0"/><path transform="translate(4.18 -2.30) scale(4.600)" d="M0.02 0H0.55L0.27 0.38H0.33C0.5 0.38 0.57 0.52 0.57 0.68C0.57 0.88 0.47 1 0.28 1C0.15 1 0.07 0.95 0 0.88"/></g>
<g transform="translate(213.70 813.70) rotate(-90)" fill="none" stroke="#ffffff" stroke-width="0.1636" stroke-linecap="round" stroke-linejoin="round" opacity="0.7"><path transform="translate(-1.57 -2.75) scale(5.500)" d="M0.02 0.17C0.08 0.05 0.18 0 0.3 0C0.48 0 0.57 0.12 0.57 0.28C0.57 0.42 0.5 0.52 0.4 0.6L0 1H0.57"/></g>
<g transform="translate(222.70 813.70) rotate(-90)" fill="none" stroke="#ffffff" stroke-width="0.1739" stroke-linecap="round" stroke-linejoin="round" opacity="0.7"><path transform="translate(-5.45 -2.30) scale(4.600)" d="M0.55 0.12C0.48 0.04 0.4 0 0.3 0C0.1 0 0 0.2 0 0.5C0 0.8 0.1 1 0.3 1C0.45 1 0.57 0.92 0.57 0.75V0.52H0.33"/><path transform="translate(-1.31 -2.30) scale(4.600)" d="M0 1V0L0.57 1V0"/><path transform="translate(2.83 -2.30) scale(4.600)" d="M0 1V0H0.22C0.47 0 0.57 0.2 0.57 0.5C0.57 0.8 0.47 1 0.22 1Z"/></g>
<g transform="translate(273.20 813.70) rotate(-90)" fill="none" stroke="#ffffff" stroke-width="0.1636" stroke-linecap="round" stroke-linejoin="round" opacity="0.7"><path transform="translate(-1.57 -2.75) scale(5.500)" d="M0.08 0.27L0.29 0V1M0 1H0.57"/></g>
<g transform="translate(282.20 813.70) rotate(-90)" fill="none" stroke="#ffffff" stroke-width="0.1739" stroke-linecap="round" stroke-linejoin="round" opacity="0.7"><path transform="translate(-6.80 -2.30) scale(4.600)" d="M0.28 0.3V0.86M0 0.58H0.56"/><path transform="translate(-3.16 -2.30) scale(4.600)" d="M0.02 0H0.55L0.27 0.38H0.33C0.5 0.38 0.57 0.52 0.57 0.68C0.57 0.88 0.47 1 0.28 1C0.15 1 0.07 0.95 0 0.88"/><path transform="translate(0.40 -2.30) scale(4.600)" d="M0 0L0.31 1L0.62 0"/><path transform="translate(4.18 -2.30) scale(4.600)" d="M0.02 0H0.55L0.27 0.38H0.33C0.5 0.38 0.57 0.52 0.57 0.68C0.57 0.88 0.47 1 0.28 1C0.15 1 0.07 0.95 0 0.88"/></g>
<g transform="translate(302.80 813.70) rotate(-90)" fill="none" stroke="#ffffff" stroke-width="0.1636" stroke-linecap="round" stroke-linejoin="round" opacity="0.7"><path transform="translate(-1.57 -2.75) scale(5.500)" d="M0.02 0.17C0.08 0.05 0.18 0 0.3 0C0.48 0 0.57 0.12 0.57 0.28C0.57 0.42 0.5 0.52 0.4 0.6L0 1H0.57"/></g>
<g transform="translate(311.80 813.70) rotate(-90)" fill="none" stroke="#ffffff" stroke-width="0.1739" stroke-linecap="round" stroke-linejoin="round" opacity="0.7"><path transform="translate(-5.45 -2.30) scale(4.600)" d="M0.55 0.12C0.48 0.04 0.4 0 0.3 0C0.1 0 0 0.2 0 0.5C0 0.8 0.1 1 0.3 1C0.45 1 0.57 0.92 0.57 0.75V0.52H0.33"/><path transform="translate(-1.31 -2.30) scale(4.600)" d="M0 1V0L0.57 1V0"/><path transform="translate(2.83 -2.30) scale(4.600)" d="M0 1V0H0.22C0.47 0 0.57 0.2 0.57 0.5C0.57 0.8 0.47 1 0.22 1Z"/></g>
<g transform="translate(184.10 874.50) rotate(-90)" fill="none" stroke="#ffffff" stroke-width="0.1636" stroke-linecap="round" stroke-linejoin="round" opacity="0.7"><path transform="translate(-1.57 -2.75) scale(5.500)" d="M0.08 0.27L0.29 0V1M0 1H0.57"/></g>
<g transform="translate(193.10 874.50) rotate(-90)" fill="none" stroke="#ffffff" stroke-width="0.1739" stroke-linecap="round" stroke-linejoin="round" opacity="0.7"><path transform="translate(-6.80 -2.30) scale(4.600)" d="M0.28 0.3V0.86M0 0.58H0.56"/><path transform="translate(-3.16 -2.30) scale(4.600)" d="M0.02 0H0.55L0.27 0.38H0.33C0.5 0.38 0.57 0.52 0.57 0.68C0.57 0.88 0.47 1 0.28 1C0.15 1 0.07 0.95 0 0.88"/><path transform="translate(0.40 -2.30) scale(4.600)" d="M0 0L0.31 1L0.62 0"/><path transform="translate(4.18 -2.30) scale(4.600)" d="M0.02 0H0.55L0.27 0.38H0.33C0.5 0.38 0.57 0.52 0.57 0.68C0.57 0.88 0.47 1 0.28 1C0.15 1 0.07 0.95 0 0.88"/></g>
<g transform="translate(213.70 874.50) rotate(-90)" fill="none" stroke="#ffffff" stroke-width="0.1636" stroke-linecap="round" stroke-linejoin="round" opacity="0.7"><path transform="translate(-1.57 -2.75) scale(5.500)" d="M0.02 0.17C0.08 0.05 0.18 0 0.3 0C0.48 0 0.57 0.12 0.57 0.28C0.57 0.42 0.5 0.52 0.4 0.6L0 1H0.57"/></g>
<g transform="translate(222.70 874.50) rotate(-90)" fill="none" stroke="#ffffff" stroke-width="0.1739" stroke-linecap="round" stroke-linejoin="round" opacity="0.7"><path transform="translate(-5.45 -2.30) scale(4.600)" d="M0.55 0.12C0.48 0.04 0.4 0 0.3 0C0.1 0 0 0.2 0 0.5C0 0.8 0.1 1 0.3 1C0.45 1 0.57 0.92 0.57 0.75V0.52H0.33"/><path transform="translate(-1.31 -2.30) scale(4.600)" d="M0 1V0L0.57 1V0"/><path transform="translate(2.83 -2.30) scale(4.600)" d="M0 1V0H0.22C0.47 0 0.57 0.2 0.57 0.5C0.57 0.8 0.47 1 0.22 1Z"/></g>
<g transform="translate(184.10 935.00) rotate(-90)" fill="none" stroke="#ffffff" stroke-width="0.1636" stroke-linecap="round" stroke-linejoin="round" opacity="0.7"><path transform="translate(-1.57 -2.75) scale(5.500)" d="M0.08 0.27L0.29 0V1M0 1H0.57"/></g>
<g transform="translate(193.10 935.00) rotate(-90)" fill="none" stroke="#ffffff" stroke-width="0.1739" stroke-linecap="round" stroke-linejoin="round" opacity="0.7"><path transform="translate(-6.80 -2.30) scale(4.600)" d="M0.28 0.3V0.86M0 0.58H0.56"/><path transform="translate(-3.16 -2.30) scale(4.600)" d="M0.02 0H0.55L0.27 0.38H0.33C0.5 0.38 0.57 0.52 0.57 0.68C0.57 0.88 0.47 1 0.28 1C0.15 1 0.07 0.95 0 0.88"/><path transform="translate(0.40 -2.30) scale(4.600)" d="M0 0L0.31 1L0.62 0"/><path transform="translate(4.18 -2.30) scale(4.600)" d="M0.02 0H0.55L0.27 0.38H0.33C0.5 0.38 0.57 0.52 0.57 0.68C0.57 0.88 0.47 1 0.28 1C0.15 1 0.07 0.95 0 0.88"/></g>
<g transform="translate(213.70 935.00) rotate(-90)" fill="none" stroke="#ffffff" stroke-width="0.1636" stroke-linecap="round" stroke-linejoin="round" opacity="0.7"><path transform="translate(-1.57 -2.75) scale(5.500)" d="M0.02 0.17C0.08 0.05 0.18 0 0.3 0C0.48 0 0.57 0.12 0.57 0.28C0.57 0.42 0.5 0.52 0.4 0.6L0 1H0.57"/></g>
<g transform="translate(222.70 935.00) rotate(-90)" fill="none" stroke="#ffffff" stroke-width="0.1739" stroke-linecap="round" stroke-linejoin="round" opacity="0.7"><path transform="translate(-5.45 -2.30) scale(4.600)" d="M0.55 0.12C0.48 0.04 0.4 0 0.3 0C0.1 0 0 0.2 0 0.5C0 0.8 0.1 1 0.3 1C0.45 1 0.57 0.92 0.57 0.75V0.52H0.33"/><path transform="translate(-1.31 -2.30) scale(4.600)" d="M0 1V0L0.57 1V0"/><path transform="translate(2.83 -2.30) scale(4.600)" d="M0 1V0H0.22C0.47 0 0.57 0.2 0.57 0.5C0.57 0.8 0.47 1 0.22 1Z"/></g>
<g transform="translate(47.20 913.30) rotate(-90)" fill="none" stroke="#ffffff" stroke-width="0.1636" stroke-linecap="round" stroke-linejoin="round" opacity="0.7"><path transform="translate(-1.57 -2.75) scale(5.500)" d="M0.08 0.27L0.29 0V1M0 1H0.57"/></g>
<g transform="translate(56.20 913.30) rotate(-90)" fill="none" stroke="#ffffff" stroke-width="0.1739" stroke-linecap="round" stroke-linejoin="round" opacity="0.7"><path transform="translate(-6.80 -2.30) scale(4.600)" d="M0.28 0.3V0.86M0 0.58H0.56"/><path transform="translate(-3.16 -2.30) scale(4.600)" d="M0.02 0H0.55L0.27 0.38H0.33C0.5 0.38 0.57 0.52 0.57 0.68C0.57 0.88 0.47 1 0.28 1C0.15 1 0.07 0.95 0 0.88"/><path transform="translate(0.40 -2.30) scale(4.600)" d="M0 0L0.31 1L0.62 0"/><path transform="translate(4.18 -2.30) scale(4.600)" d="M0.02 0H0.55L0.27 0.38H0.33C0.5 0.38 0.57 0.52 0.57 0.68C0.57 0.88 0.47 1 0.28 1C0.15 1 0.07 0.95 0 0.88"/></g>
<g transform="translate(76.80 913.30) rotate(-90)" fill="none" stroke="#ffffff" stroke-width="0.1636" stroke-linecap="round" stroke-linejoin="round" opacity="0.7"><path transform="translate(-1.57 -2.75) scale(5.500)" d="M0.02 0.17C0.08 0.05 0.18 0 0.3 0C0.48 0 0.57 0.12 0.57 0.28C0.57 0.42 0.5 0.52 0.4 0.6L0 1H0.57"/></g>
<g transform="translate(85.80 913.30) rotate(-90)" fill="none" stroke="#ffffff" stroke-width="0.1739" stroke-linecap="round" stroke-linejoin="round" opacity="0.7"><path transform="translate(-5.45 -2.30) scale(4.600)" d="M0.55 0.12C0.48 0.04 0.4 0 0.3 0C0.1 0 0 0.2 0 0.5C0 0.8 0.1 1 0.3 1C0.45 1 0.57 0.92 0.57 0.75V0.52H0.33"/><path transform="translate(-1.31 -2.30) scale(4.600)" d="M0 1V0L0.57 1V0"/><path transform="translate(2.83 -2.30) scale(4.600)" d="M0 1V0H0.22C0.47 0 0.57 0.2 0.57 0.5C0.57 0.8 0.47 1 0.22 1Z"/></g>
<g transform="translate(334.10 919.50) rotate(-90)" fill="none" stroke="#ffffff" stroke-width="0.1636" stroke-linecap="round" stroke-linejoin="round" opacity="0.7"><path transform="translate(-1.57 -2.75) scale(5.500)" d="M0.08 0.27L0.29 0V1M0 1H0.57"/></g>
<g transform="translate(343.10 919.50) rotate(-90)" fill="none" stroke="#ffffff" stroke-width="0.1739" stroke-linecap="round" stroke-linejoin="round" opacity="0.7"><path transform="translate(-6.80 -2.30) scale(4.600)" d="M0.28 0.3V0.86M0 0.58H0.56"/><path transform="translate(-3.16 -2.30) scale(4.600)" d="M0.02 0H0.55L0.27 0.38H0.33C0.5 0.38 0.57 0.52 0.57 0.68C0.57 0.88 0.47 1 0.28 1C0.15 1 0.07 0.95 0 0.88"/><path transform="translate(0.40 -2.30) scale(4.600)" d="M0 0L0.31 1L0.62 0"/><path transform="translate(4.18 -2.30) scale(4.600)" d="M0.02 0H0.55L0.27 0.38H0.33C0.5 0.38 0.57 0.52 0.57 0.68C0.57 0.88 0.47 1 0.28 1C0.15 1 0.07 0.95 0 0.88"/></g>
<g transform="translate(363.70 919.50) rotate(-90)" fill="none" stroke="#ffffff" stroke-width="0.1636" stroke-linecap="round" stroke-linejoin="round" opacity="0.7"><path transform="translate(-1.57 -2.75) scale(5.500)" d="M0.02 0.17C0.08 0.05 0.18 0 0.3 0C0.48 0 0.57 0.12 0.57 0.28C0.57 0.42 0.5 0.52 0.4 0.6L0 1H0.57"/></g>
<g transform="translate(372.70 919.50) rotate(-90)" fill="none" stroke="#ffffff" stroke-width="0.1739" stroke-linecap="round" stroke-linejoin="round" opacity="0.7"><path transform="translate(-5.45 -2.30) scale(4.600)" d="M0.55 0.12C0.48 0.04 0.4 0 0.3 0C0.1 0 0 0.2 0 0.5C0 0.8 0.1 1 0.3 1C0.45 1 0.57 0.92 0.57 0.75V0.52H0.33"/><path transform="translate(-1.31 -2.30) scale(4.600)" d="M0 1V0L0.57 1V0"/><path transform="translate(2.83 -2.30) scale(4.600)" d="M0 1V0H0.22C0.47 0 0.57 0.2 0.57 0.5C0.57 0.8 0.47 1 0.22 1Z"/></g>
<g transform="translate(1094.00 131.60) rotate(-90)" fill="none" stroke="#ffffff" stroke-width="0.1364" stroke-linecap="round" stroke-linejoin="round" opacity="0.75"><path transform="translate(-8.63 -5.50) scale(11.000)" d="M0.55 0.12C0.45 0.03 0.38 0 0.28 0C0.1 0 0.02 0.1 0.02 0.25C0.02 0.55 0.57 0.4 0.57 0.72C0.57 0.9 0.45 1 0.28 1C0.15 1 0.07 0.96 0 0.88"/><path transform="translate(2.37 -5.50) scale(11.000)" d="M0.08 0.27L0.29 0V1M0 1H0.57"/></g>
<g transform="translate(1106.00 131.10) rotate(-90)" fill="none" stroke="#ffffff" stroke-width="0.1400" stroke-linecap="round" stroke-linejoin="round" opacity="0.75"><path transform="translate(-12.85 -5.00) scale(10.000)" d="M0.55 0.12C0.48 0.04 0.4 0 0.3 0C0.1 0 0 0.2 0 0.5C0 0.8 0.1 1 0.3 1C0.45 1 0.57 0.92 0.57 0.75V0.52H0.33"/><path transform="translate(-2.85 -5.00) scale(10.000)" d="M0 1V0L0.57 1V0"/><path transform="translate(7.15 -5.00) scale(10.000)" d="M0 1V0H0.22C0.47 0 0.57 0.2 0.57 0.5C0.57 0.8 0.47 1 0.22 1Z"/></g>
<g transform="translate(1094.00 267.90) rotate(-90)" fill="none" stroke="#ffffff" stroke-width="0.1364" stroke-linecap="round" stroke-linejoin="round" opacity="0.75"><path transform="translate(-8.63 -5.50) scale(11.000)" d="M0.55 0.12C0.45 0.03 0.38 0 0.28 0C0.1 0 0.02 0.1 0.02 0.25C0.02 0.55 0.57 0.4 0.57 0.72C0.57 0.9 0.45 1 0.28 1C0.15 1 0.07 0.96 0 0.88"/><path transform="translate(2.37 -5.50) scale(11.000)" d="M0.08 0.27L0.29 0V1M0 1H0.57"/></g>
<g transform="translate(1106.00 267.40) rotate(-90)" fill="none" stroke="#ffffff" stroke-width="0.1400" stroke-linecap="round" stroke-linejoin="round" opacity="0.75"><path transform="translate(-12.85 -5.00) scale(10.000)" d="M0.55 0.12C0.48 0.04 0.4 0 0.3 0C0.1 0 0 0.2 0 0.5C0 0.8 0.1 1 0.3 1C0.45 1 0.57 0.92 0.57 0.75V0.52H0.33"/><path transform="translate(-2.85 -5.00) scale(10.000)" d="M0 1V0L0.57 1V0"/><path transform="translate(7.15 -5.00) scale(10.000)" d="M0 1V0H0.22C0.47 0 0.57 0.2 0.57 0.5C0.57 0.8 0.47 1 0.22 1Z"/></g>
<g transform="translate(1359.80 131.60) rotate(-90)" fill="none" stroke="#ffffff" stroke-width="0.1364" stroke-linecap="round" stroke-linejoin="round" opacity="0.75"><path transform="translate(-8.63 -5.50) scale(11.000)" d="M0.55 0.12C0.45 0.03 0.38 0 0.28 0C0.1 0 0.02 0.1 0.02 0.25C0.02 0.55 0.57 0.4 0.57 0.72C0.57 0.9 0.45 1 0.28 1C0.15 1 0.07 0.96 0 0.88"/><path transform="translate(2.37 -5.50) scale(11.000)" d="M0.08 0.27L0.29 0V1M0 1H0.57"/></g>
<g transform="translate(1371.80 131.10) rotate(-90)" fill="none" stroke="#ffffff" stroke-width="0.1400" stroke-linecap="round" stroke-linejoin="round" opacity="0.75"><path transform="translate(-12.85 -5.00) scale(10.000)" d="M0.55 0.12C0.48 0.04 0.4 0 0.3 0C0.1 0 0 0.2 0 0.5C0 0.8 0.1 1 0.3 1C0.45 1 0.57 0.92 0.57 0.75V0.52H0.33"/><path transform="translate(-2.85 -5.00) scale(10.000)" d="M0 1V0L0.57 1V0"/><path transform="translate(7.15 -5.00) scale(10.000)" d="M0 1V0H0.22C0.47 0 0.57 0.2 0.57 0.5C0.57 0.8 0.47 1 0.22 1Z"/></g>
<g transform="translate(1359.80 267.90) rotate(-90)" fill="none" stroke="#ffffff" stroke-width="0.1364" stroke-linecap="round" stroke-linejoin="round" opacity="0.75"><path transform="translate(-8.63 -5.50) scale(11.000)" d="M0.55 0.12C0.45 0.03 0.38 0 0.28 0C0.1 0 0.02 0.1 0.02 0.25C0.02 0.55 0.57 0.4 0.57 0.72C0.57 0.9 0.45 1 0.28 1C0.15 1 0.07 0.96 0 0.88"/><path transform="translate(2.37 -5.50) scale(11.000)" d="M0.08 0.27L0.29 0V1M0 1H0.57"/></g>
<g transform="translate(1371.80 267.40) rotate(-90)" fill="none" stroke="#ffffff" stroke-width="0.1400" stroke-linecap="round" stroke-linejoin="round" opacity="0.75"><path transform="translate(-12.85 -5.00) scale(10.000)" d="M0.55 0.12C0.48 0.04 0.4 0 0.3 0C0.1 0 0 0.2 0 0.5C0 0.8 0.1 1 0.3 1C0.45 1 0.57 0.92 0.57 0.75V0.52H0.33"/><path transform="translate(-2.85 -5.00) scale(10.000)" d="M0 1V0L0.57 1V0"/><path transform="translate(7.15 -5.00) scale(10.000)" d="M0 1V0H0.22C0.47 0 0.57 0.2 0.57 0.5C0.57 0.8 0.47 1 0.22 1Z"/></g>
<g transform="translate(1128.60 297.00) rotate(-90)" fill="none" stroke="#ffffff" stroke-width="0.1333" stroke-linecap="round" stroke-linejoin="round" opacity="0.75"><path transform="translate(-9.00 -3.75) scale(7.500)" d="M0 0V1H0.32C0.48 1 0.57 0.9 0.57 0.74C0.57 0.58 0.47 0.5 0.3 0.5H0M0.3 0.5C0.43 0.5 0.52 0.42 0.52 0.26C0.52 0.1 0.43 0 0.28 0H0"/><path transform="translate(-2.14 -3.75) scale(7.500)" d="M0.08 0.27L0.29 0V1M0 1H0.57"/><path transform="translate(4.73 -3.75) scale(7.500)" d="M0.02 0.17C0.08 0.05 0.18 0 0.3 0C0.48 0 0.57 0.12 0.57 0.28C0.57 0.42 0.5 0.52 0.4 0.6L0 1H0.57"/></g>
<g transform="translate(1137.10 297.00) rotate(-90)" fill="none" stroke="#ffffff" stroke-width="0.1333" stroke-linecap="round" stroke-linejoin="round" opacity="0.75"><path transform="translate(-8.00 -3.75) scale(7.500)" d="M0.55 0.12C0.48 0.04 0.4 0 0.3 0C0.1 0 0 0.2 0 0.5C0 0.8 0.1 1 0.3 1C0.45 1 0.57 0.92 0.57 0.75V0.52H0.33"/><path transform="translate(-2.14 -3.75) scale(7.500)" d="M0 1V0L0.57 1V0"/><path transform="translate(3.73 -3.75) scale(7.500)" d="M0 1V0H0.22C0.47 0 0.57 0.2 0.57 0.5C0.57 0.8 0.47 1 0.22 1Z"/></g>
<g transform="translate(1153.25 297.00) rotate(-90)" fill="none" stroke="#ffffff" stroke-width="0.1333" stroke-linecap="round" stroke-linejoin="round" opacity="0.75"><path transform="translate(-6.50 -3.75) scale(7.500)" d="M0 1L0.3 0L0.6 1M0.1 0.68H0.5"/><path transform="translate(2.23 -3.75) scale(7.500)" d="M0.05 1H0.2C0.42 1 0.57 0.8 0.57 0.45C0.57 0.15 0.47 0 0.28 0C0.1 0 0 0.12 0 0.3C0 0.48 0.1 0.58 0.27 0.58C0.42 0.58 0.52 0.5 0.57 0.4"/></g>
<g transform="translate(1161.75 297.00) rotate(-90)" fill="none" stroke="#ffffff" stroke-width="0.1333" stroke-linecap="round" stroke-linejoin="round" opacity="0.75"><path transform="translate(-10.00 -3.75) scale(7.500)" d="M0 0L0.31 1L0.62 0"/><path transform="translate(-4.63 -3.75) scale(7.500)" d="M0 0V1H0.32C0.48 1 0.57 0.9 0.57 0.74C0.57 0.58 0.47 0.5 0.3 0.5H0M0.3 0.5C0.43 0.5 0.52 0.42 0.52 0.26C0.52 0.1 0.43 0 0.28 0H0"/><path transform="translate(0.55 -3.75) scale(7.500)" d="M0 0V0.7C0 0.9 0.1 1 0.285 1C0.47 1 0.57 0.9 0.57 0.7V0"/><path transform="translate(5.73 -3.75) scale(7.500)" d="M0.55 0.12C0.45 0.03 0.38 0 0.28 0C0.1 0 0.02 0.1 0.02 0.25C0.02 0.55 0.57 0.4 0.57 0.72C0.57 0.9 0.45 1 0.28 1C0.15 1 0.07 0.96 0 0.88"/></g>
<g transform="translate(1178.80 295.50) rotate(-90)" fill="none" stroke="#ffffff" stroke-width="0.1538" stroke-linecap="round" stroke-linejoin="round" opacity="0.7"><path transform="translate(-5.10 -3.25) scale(6.500)" d="M0 0V1H0.32C0.48 1 0.57 0.9 0.57 0.74C0.57 0.58 0.47 0.5 0.3 0.5H0M0.3 0.5C0.43 0.5 0.52 0.42 0.52 0.26C0.52 0.1 0.43 0 0.28 0H0"/><path transform="translate(1.40 -3.25) scale(6.500)" d="M0.53 0H0.06L0.02 0.45C0.1 0.4 0.2 0.37 0.3 0.37C0.47 0.37 0.57 0.5 0.57 0.68C0.57 0.88 0.47 1 0.28 1C0.15 1 0.06 0.95 0 0.88"/></g>
<g transform="translate(1193.75 295.50) rotate(-90)" fill="none" stroke="#ffffff" stroke-width="0.1538" stroke-linecap="round" stroke-linejoin="round" opacity="0.7"><path transform="translate(-5.15 -3.25) scale(6.500)" d="M0 1L0.3 0L0.6 1M0.1 0.68H0.5"/><path transform="translate(1.45 -3.25) scale(6.500)" d="M0.285 0.47C0.12 0.47 0.04 0.38 0.04 0.24C0.04 0.09 0.13 0 0.285 0C0.44 0 0.53 0.09 0.53 0.24C0.53 0.38 0.45 0.47 0.285 0.47C0.1 0.47 0 0.58 0 0.73C0 0.9 0.1 1 0.285 1C0.47 1 0.57 0.9 0.57 0.73C0.57 0.58 0.47 0.47 0.285 0.47Z"/></g>
<g transform="translate(1209.50 295.50) rotate(-90)" fill="none" stroke="#ffffff" stroke-width="0.1538" stroke-linecap="round" stroke-linejoin="round" opacity="0.7"><path transform="translate(-5.10 -3.25) scale(6.500)" d="M0 0V1H0.32C0.48 1 0.57 0.9 0.57 0.74C0.57 0.58 0.47 0.5 0.3 0.5H0M0.3 0.5C0.43 0.5 0.52 0.42 0.52 0.26C0.52 0.1 0.43 0 0.28 0H0"/><path transform="translate(1.40 -3.25) scale(6.500)" d="M0 0H0.57L0.17 1"/></g>
<g transform="translate(1225.10 295.50) rotate(-90)" fill="none" stroke="#ffffff" stroke-width="0.1538" stroke-linecap="round" stroke-linejoin="round" opacity="0.7"><path transform="translate(-5.15 -3.25) scale(6.500)" d="M0 1L0.3 0L0.6 1M0.1 0.68H0.5"/><path transform="translate(1.45 -3.25) scale(6.500)" d="M0.52 0H0.38C0.15 0 0 0.2 0 0.55C0 0.85 0.1 1 0.29 1C0.47 1 0.57 0.88 0.57 0.7C0.57 0.52 0.47 0.42 0.3 0.42C0.15 0.42 0.05 0.5 0 0.6"/></g>
<g transform="translate(1240.45 295.50) rotate(-90)" fill="none" stroke="#ffffff" stroke-width="0.1538" stroke-linecap="round" stroke-linejoin="round" opacity="0.7"><path transform="translate(-5.15 -3.25) scale(6.500)" d="M0 1L0.3 0L0.6 1M0.1 0.68H0.5"/><path transform="translate(1.45 -3.25) scale(6.500)" d="M0 0H0.57L0.17 1"/></g>
<g transform="translate(1255.80 295.50) rotate(-90)" fill="none" stroke="#ffffff" stroke-width="0.1538" stroke-linecap="round" stroke-linejoin="round" opacity="0.7"><path transform="translate(-5.10 -3.25) scale(6.500)" d="M0 0V1H0.32C0.48 1 0.57 0.9 0.57 0.74C0.57 0.58 0.47 0.5 0.3 0.5H0M0.3 0.5C0.43 0.5 0.52 0.42 0.52 0.26C0.52 0.1 0.43 0 0.28 0H0"/><path transform="translate(1.40 -3.25) scale(6.500)" d="M0.52 0H0.38C0.15 0 0 0.2 0 0.55C0 0.85 0.1 1 0.29 1C0.47 1 0.57 0.88 0.57 0.7C0.57 0.52 0.47 0.42 0.3 0.42C0.15 0.42 0.05 0.5 0 0.6"/></g>
<g transform="translate(1271.00 295.50) rotate(-90)" fill="none" stroke="#ffffff" stroke-width="0.1538" stroke-linecap="round" stroke-linejoin="round" opacity="0.7"><path transform="translate(-5.15 -3.25) scale(6.500)" d="M0 1L0.3 0L0.6 1M0.1 0.68H0.5"/><path transform="translate(1.45 -3.25) scale(6.500)" d="M0.53 0H0.06L0.02 0.45C0.1 0.4 0.2 0.37 0.3 0.37C0.47 0.37 0.57 0.5 0.57 0.68C0.57 0.88 0.47 1 0.28 1C0.15 1 0.06 0.95 0 0.88"/></g>
<g transform="translate(1286.50 295.50) rotate(-90)" fill="none" stroke="#ffffff" stroke-width="0.1538" stroke-linecap="round" stroke-linejoin="round" opacity="0.7"><path transform="translate(-5.10 -3.25) scale(6.500)" d="M0 0V1H0.32C0.48 1 0.57 0.9 0.57 0.74C0.57 0.58 0.47 0.5 0.3 0.5H0M0.3 0.5C0.43 0.5 0.52 0.42 0.52 0.26C0.52 0.1 0.43 0 0.28 0H0"/><path transform="translate(1.40 -3.25) scale(6.500)" d="M0.285 0.47C0.12 0.47 0.04 0.38 0.04 0.24C0.04 0.09 0.13 0 0.285 0C0.44 0 0.53 0.09 0.53 0.24C0.53 0.38 0.45 0.47 0.285 0.47C0.1 0.47 0 0.58 0 0.73C0 0.9 0.1 1 0.285 1C0.47 1 0.57 0.9 0.57 0.73C0.57 0.58 0.47 0.47 0.285 0.47Z"/></g>
<g transform="translate(1304.25 297.00) rotate(-90)" fill="none" stroke="#ffffff" stroke-width="0.1333" stroke-linecap="round" stroke-linejoin="round" opacity="0.75"><path transform="translate(-6.50 -3.75) scale(7.500)" d="M0 1L0.3 0L0.6 1M0.1 0.68H0.5"/><path transform="translate(2.00 -3.75) scale(7.500)" d="M0.44 1V0L0 0.68H0.6"/></g>
<g transform="translate(1312.75 297.00) rotate(-90)" fill="none" stroke="#ffffff" stroke-width="0.1333" stroke-linecap="round" stroke-linejoin="round" opacity="0.75"><path transform="translate(-10.00 -3.75) scale(7.500)" d="M0 0L0.31 1L0.62 0"/><path transform="translate(-4.63 -3.75) scale(7.500)" d="M0 0V1H0.32C0.48 1 0.57 0.9 0.57 0.74C0.57 0.58 0.47 0.5 0.3 0.5H0M0.3 0.5C0.43 0.5 0.52 0.42 0.52 0.26C0.52 0.1 0.43 0 0.28 0H0"/><path transform="translate(0.55 -3.75) scale(7.500)" d="M0 0V0.7C0 0.9 0.1 1 0.285 1C0.47 1 0.57 0.9 0.57 0.7V0"/><path transform="translate(5.73 -3.75) scale(7.500)" d="M0.55 0.12C0.45 0.03 0.38 0 0.28 0C0.1 0 0.02 0.1 0.02 0.25C0.02 0.55 0.57 0.4 0.57 0.72C0.57 0.9 0.45 1 0.28 1C0.15 1 0.07 0.96 0 0.88"/></g>
<g transform="translate(1328.65 297.00) rotate(-90)" fill="none" stroke="#ffffff" stroke-width="0.1333" stroke-linecap="round" stroke-linejoin="round" opacity="0.75"><path transform="translate(-6.50 -3.75) scale(7.500)" d="M0 0V1H0.32C0.48 1 0.57 0.9 0.57 0.74C0.57 0.58 0.47 0.5 0.3 0.5H0M0.3 0.5C0.43 0.5 0.52 0.42 0.52 0.26C0.52 0.1 0.43 0 0.28 0H0"/><path transform="translate(2.23 -3.75) scale(7.500)" d="M0.08 0.27L0.29 0V1M0 1H0.57"/></g>
<g transform="translate(1337.15 297.00) rotate(-90)" fill="none" stroke="#ffffff" stroke-width="0.1333" stroke-linecap="round" stroke-linejoin="round" opacity="0.75"><path transform="translate(-8.00 -3.75) scale(7.500)" d="M0.55 0.12C0.48 0.04 0.4 0 0.3 0C0.1 0 0 0.2 0 0.5C0 0.8 0.1 1 0.3 1C0.45 1 0.57 0.92 0.57 0.75V0.52H0.33"/><path transform="translate(-2.14 -3.75) scale(7.500)" d="M0 1V0L0.57 1V0"/><path transform="translate(3.73 -3.75) scale(7.500)" d="M0 1V0H0.22C0.47 0 0.57 0.2 0.57 0.5C0.57 0.8 0.47 1 0.22 1Z"/></g>
<g transform="translate(1100.50 362.20) rotate(-90)" fill="none" stroke="#ffffff" stroke-width="0.1474" stroke-linecap="round" stroke-linejoin="round" opacity="0.8"><path transform="translate(-2.71 -4.75) scale(9.500)" d="M0.02 0.17C0.08 0.05 0.18 0 0.3 0C0.48 0 0.57 0.12 0.57 0.28C0.57 0.42 0.5 0.52 0.4 0.6L0 1H0.57"/></g>
<g transform="translate(1115.00 362.20) rotate(-90)" fill="none" stroke="#ffffff" stroke-width="0.1333" stroke-linecap="round" stroke-linejoin="round" opacity="0.8"><path transform="translate(-11.90 -4.50) scale(9.000)" d="M0.55 0.12C0.48 0.04 0.4 0 0.3 0C0.1 0 0 0.2 0 0.5C0 0.8 0.1 1 0.3 1C0.45 1 0.57 0.92 0.57 0.75V0.52H0.33"/><path transform="translate(-2.56 -4.50) scale(9.000)" d="M0 1V0L0.57 1V0"/><path transform="translate(6.77 -4.50) scale(9.000)" d="M0 1V0H0.22C0.47 0 0.57 0.2 0.57 0.5C0.57 0.8 0.47 1 0.22 1Z"/></g>
<g transform="translate(1149.00 362.20) rotate(-90)" fill="none" stroke="#ffffff" stroke-width="0.1474" stroke-linecap="round" stroke-linejoin="round" opacity="0.8"><path transform="translate(-2.71 -4.75) scale(9.500)" d="M0.08 0.27L0.29 0V1M0 1H0.57"/></g>
<g transform="translate(1163.50 362.20) rotate(-90)" fill="none" stroke="#ffffff" stroke-width="0.1333" stroke-linecap="round" stroke-linejoin="round" opacity="0.8"><path transform="translate(-12.15 -4.50) scale(9.000)" d="M0 0L0.31 1L0.62 0"/><path transform="translate(-5.61 -4.50) scale(9.000)" d="M0 0V1H0.32C0.48 1 0.57 0.9 0.57 0.74C0.57 0.58 0.47 0.5 0.3 0.5H0M0.3 0.5C0.43 0.5 0.52 0.42 0.52 0.26C0.52 0.1 0.43 0 0.28 0H0"/><path transform="translate(0.70 -4.50) scale(9.000)" d="M0 0V0.7C0 0.9 0.1 1 0.285 1C0.47 1 0.57 0.9 0.57 0.7V0"/><path transform="translate(7.02 -4.50) scale(9.000)" d="M0.55 0.12C0.45 0.03 0.38 0 0.28 0C0.1 0 0.02 0.1 0.02 0.25C0.02 0.55 0.57 0.4 0.57 0.72C0.57 0.9 0.45 1 0.28 1C0.15 1 0.07 0.96 0 0.88"/></g>
<g transform="translate(1152.50 425.00) rotate(-90)" fill="none" stroke="#ffffff" stroke-width="0.1375" stroke-linecap="round" stroke-linejoin="round" opacity="0.8"><path transform="translate(-2.28 -4.00) scale(8.000)" d="M0.02 0H0.55L0.27 0.38H0.33C0.5 0.38 0.57 0.52 0.57 0.68C0.57 0.88 0.47 1 0.28 1C0.15 1 0.07 0.95 0 0.88"/></g>
<g transform="translate(1161.00 418.00) rotate(-90)" fill="none" stroke="#ffffff" stroke-width="0.1333" stroke-linecap="round" stroke-linejoin="round" opacity="0.8"><path transform="translate(-13.48 -3.75) scale(7.500)" d="M0 0L0.31 1L0.62 0"/><path transform="translate(-5.79 -3.75) scale(7.500)" d="M0 0V1H0.32C0.48 1 0.57 0.9 0.57 0.74C0.57 0.58 0.47 0.5 0.3 0.5H0M0.3 0.5C0.43 0.5 0.52 0.42 0.52 0.26C0.52 0.1 0.43 0 0.28 0H0"/><path transform="translate(1.71 -3.75) scale(7.500)" d="M0 0V0.7C0 0.9 0.1 1 0.285 1C0.47 1 0.57 0.9 0.57 0.7V0"/><path transform="translate(9.21 -3.75) scale(7.500)" d="M0.55 0.12C0.45 0.03 0.38 0 0.28 0C0.1 0 0.02 0.1 0.02 0.25C0.02 0.55 0.57 0.4 0.57 0.72C0.57 0.9 0.45 1 0.28 1C0.15 1 0.07 0.96 0 0.88"/></g>
<g transform="translate(1123.50 478.00) rotate(-90)" fill="none" stroke="#ffffff" stroke-width="0.1375" stroke-linecap="round" stroke-linejoin="round" opacity="0.8"><path transform="translate(-2.28 -4.00) scale(8.000)" d="M0.08 0.27L0.29 0V1M0 1H0.57"/></g>
<g transform="translate(1132.00 478.00) rotate(-90)" fill="none" stroke="#ffffff" stroke-width="0.1333" stroke-linecap="round" stroke-linejoin="round" opacity="0.8"><path transform="translate(-9.64 -3.75) scale(7.500)" d="M0.55 0.12C0.48 0.04 0.4 0 0.3 0C0.1 0 0 0.2 0 0.5C0 0.8 0.1 1 0.3 1C0.45 1 0.57 0.92 0.57 0.75V0.52H0.33"/><path transform="translate(-2.14 -3.75) scale(7.500)" d="M0 1V0L0.57 1V0"/><path transform="translate(5.36 -3.75) scale(7.500)" d="M0 1V0H0.22C0.47 0 0.57 0.2 0.57 0.5C0.57 0.8 0.47 1 0.22 1Z"/></g>
<g transform="translate(1182.00 478.00) rotate(-90)" fill="none" stroke="#ffffff" stroke-width="0.1375" stroke-linecap="round" stroke-linejoin="round" opacity="0.8"><path transform="translate(-2.28 -4.00) scale(8.000)" d="M0.02 0.17C0.08 0.05 0.18 0 0.3 0C0.48 0 0.57 0.12 0.57 0.28C0.57 0.42 0.5 0.52 0.4 0.6L0 1H0.57"/></g>
<g transform="translate(1190.50 478.00) rotate(-90)" fill="none" stroke="#ffffff" stroke-width="0.1333" stroke-linecap="round" stroke-linejoin="round" opacity="0.8"><path transform="translate(-13.37 -3.75) scale(7.500)" d="M0.28 0.3V0.86M0 0.58H0.56"/><path transform="translate(-5.91 -3.75) scale(7.500)" d="M0.02 0H0.55L0.27 0.38H0.33C0.5 0.38 0.57 0.52 0.57 0.68C0.57 0.88 0.47 1 0.28 1C0.15 1 0.07 0.95 0 0.88"/><path transform="translate(1.41 -3.75) scale(7.500)" d="M0 0L0.31 1L0.62 0"/><path transform="translate(9.09 -3.75) scale(7.500)" d="M0.02 0H0.55L0.27 0.38H0.33C0.5 0.38 0.57 0.52 0.57 0.68C0.57 0.88 0.47 1 0.28 1C0.15 1 0.07 0.95 0 0.88"/></g>
<g transform="translate(1127.50 539.00) rotate(-90)" fill="none" stroke="#ffffff" stroke-width="0.1474" stroke-linecap="round" stroke-linejoin="round" opacity="0.8"><path transform="translate(-2.71 -4.75) scale(9.500)" d="M0.02 0.17C0.08 0.05 0.18 0 0.3 0C0.48 0 0.57 0.12 0.57 0.28C0.57 0.42 0.5 0.52 0.4 0.6L0 1H0.57"/></g>
<g transform="translate(1142.00 539.00) rotate(-90)" fill="none" stroke="#ffffff" stroke-width="0.1333" stroke-linecap="round" stroke-linejoin="round" opacity="0.8"><path transform="translate(-11.90 -4.50) scale(9.000)" d="M0.55 0.12C0.48 0.04 0.4 0 0.3 0C0.1 0 0 0.2 0 0.5C0 0.8 0.1 1 0.3 1C0.45 1 0.57 0.92 0.57 0.75V0.52H0.33"/><path transform="translate(-2.56 -4.50) scale(9.000)" d="M0 1V0L0.57 1V0"/><path transform="translate(6.77 -4.50) scale(9.000)" d="M0 1V0H0.22C0.47 0 0.57 0.2 0.57 0.5C0.57 0.8 0.47 1 0.22 1Z"/></g>
<g transform="translate(1176.00 539.00) rotate(-90)" fill="none" stroke="#ffffff" stroke-width="0.1474" stroke-linecap="round" stroke-linejoin="round" opacity="0.8"><path transform="translate(-2.71 -4.75) scale(9.500)" d="M0.08 0.27L0.29 0V1M0 1H0.57"/></g>
<g transform="translate(1190.50 539.00) rotate(-90)" fill="none" stroke="#ffffff" stroke-width="0.1333" stroke-linecap="round" stroke-linejoin="round" opacity="0.8"><path transform="translate(-12.15 -4.50) scale(9.000)" d="M0.28 0.3V0.86M0 0.58H0.56"/><path transform="translate(-5.79 -4.50) scale(9.000)" d="M0.02 0H0.55L0.27 0.38H0.33C0.5 0.38 0.57 0.52 0.57 0.68C0.57 0.88 0.47 1 0.28 1C0.15 1 0.07 0.95 0 0.88"/><path transform="translate(0.39 -4.50) scale(9.000)" d="M0 0L0.31 1L0.62 0"/><path transform="translate(7.02 -4.50) scale(9.000)" d="M0.02 0H0.55L0.27 0.38H0.33C0.5 0.38 0.57 0.52 0.57 0.68C0.57 0.88 0.47 1 0.28 1C0.15 1 0.07 0.95 0 0.88"/></g>
<g transform="translate(1179.40 735.00) rotate(-90)" fill="none" stroke="#ffffff" stroke-width="0.1636" stroke-linecap="round" stroke-linejoin="round" opacity="0.7"><path transform="translate(-1.57 -2.75) scale(5.500)" d="M0.02 0.17C0.08 0.05 0.18 0 0.3 0C0.48 0 0.57 0.12 0.57 0.28C0.57 0.42 0.5 0.52 0.4 0.6L0 1H0.57"/></g>
<g transform="translate(1188.40 735.00) rotate(-90)" fill="none" stroke="#ffffff" stroke-width="0.1739" stroke-linecap="round" stroke-linejoin="round" opacity="0.7"><path transform="translate(-5.45 -2.30) scale(4.600)" d="M0.55 0.12C0.48 0.04 0.4 0 0.3 0C0.1 0 0 0.2 0 0.5C0 0.8 0.1 1 0.3 1C0.45 1 0.57 0.92 0.57 0.75V0.52H0.33"/><path transform="translate(-1.31 -2.30) scale(4.600)" d="M0 1V0L0.57 1V0"/><path transform="translate(2.83 -2.30) scale(4.600)" d="M0 1V0H0.22C0.47 0 0.57 0.2 0.57 0.5C0.57 0.8 0.47 1 0.22 1Z"/></g>
<g transform="translate(1209.00 735.00) rotate(-90)" fill="none" stroke="#ffffff" stroke-width="0.1636" stroke-linecap="round" stroke-linejoin="round" opacity="0.7"><path transform="translate(-1.57 -2.75) scale(5.500)" d="M0.08 0.27L0.29 0V1M0 1H0.57"/></g>
<g transform="translate(1218.00 735.00) rotate(-90)" fill="none" stroke="#ffffff" stroke-width="0.1739" stroke-linecap="round" stroke-linejoin="round" opacity="0.7"><path transform="translate(-6.80 -2.30) scale(4.600)" d="M0.28 0.3V0.86M0 0.58H0.56"/><path transform="translate(-3.16 -2.30) scale(4.600)" d="M0.02 0H0.55L0.27 0.38H0.33C0.5 0.38 0.57 0.52 0.57 0.68C0.57 0.88 0.47 1 0.28 1C0.15 1 0.07 0.95 0 0.88"/><path transform="translate(0.40 -2.30) scale(4.600)" d="M0 0L0.31 1L0.62 0"/><path transform="translate(4.18 -2.30) scale(4.600)" d="M0.02 0H0.55L0.27 0.38H0.33C0.5 0.38 0.57 0.52 0.57 0.68C0.57 0.88 0.47 1 0.28 1C0.15 1 0.07 0.95 0 0.88"/></g>
<g transform="translate(1233.50 977.50)" fill="none" stroke="#ffffff" stroke-width="0.1286" stroke-linecap="round" stroke-linejoin="round" opacity="0.8"><path transform="translate(-22.70 -14.00) scale(28.000)" d="M0.53 0H0.06L0.02 0.45C0.1 0.4 0.2 0.37 0.3 0.37C0.47 0.37 0.57 0.5 0.57 0.68C0.57 0.88 0.47 1 0.28 1C0.15 1 0.06 0.95 0 0.88"/><path transform="translate(6.74 -14.00) scale(28.000)" d="M0 0H0.57L0.17 1"/></g>
<g transform="translate(1232.90 1029.50)" fill="none" stroke="#ffffff" stroke-width="0.1500" stroke-linecap="round" stroke-linejoin="round" opacity="0.8"><path transform="translate(-27.50 -10.00) scale(20.000)" d="M0.55 0.12C0.48 0.04 0.4 0 0.3 0C0.1 0 0 0.2 0 0.5C0 0.8 0.1 1 0.3 1C0.45 1 0.57 0.92 0.57 0.75V0.52H0.33"/><path transform="translate(-5.70 -10.00) scale(20.000)" d="M0 1V0L0.57 1V0"/><path transform="translate(16.10 -10.00) scale(20.000)" d="M0 1V0H0.22C0.47 0 0.57 0.2 0.57 0.5C0.57 0.8 0.47 1 0.22 1Z"/></g>
<g transform="translate(1221.00 1164.00) rotate(-90)" fill="none" stroke="#ffffff" stroke-width="0.1429" stroke-linecap="round" stroke-linejoin="round" opacity="0.8"><path transform="translate(-1.99 -3.50) scale(7.000)" d="M0.02 0.17C0.08 0.05 0.18 0 0.3 0C0.48 0 0.57 0.12 0.57 0.28C0.57 0.42 0.5 0.52 0.4 0.6L0 1H0.57"/></g>
<g transform="translate(1228.00 1164.00) rotate(-90)" fill="none" stroke="#ffffff" stroke-width="0.1500" stroke-linecap="round" stroke-linejoin="round" opacity="0.8"><path transform="translate(-10.53 -3.00) scale(6.000)" d="M0 0L0.6 1M0.6 0L0 1"/><path transform="translate(-4.53 -3.00) scale(6.000)" d="M0.3 0C0.06 0 0 0.22 0 0.5C0 0.78 0.06 1 0.3 1C0.54 1 0.6 0.78 0.6 0.5C0.6 0.22 0.54 0 0.3 0Z"/><path transform="translate(1.56 -3.00) scale(6.000)" d="M0 0V0.7C0 0.9 0.1 1 0.285 1C0.47 1 0.57 0.9 0.57 0.7V0"/><path transform="translate(6.81 -3.00) scale(6.000)" d="M0 0H0.62M0.31 0V1"/></g>
<g transform="translate(1251.50 1164.00) rotate(-90)" fill="none" stroke="#ffffff" stroke-width="0.1429" stroke-linecap="round" stroke-linejoin="round" opacity="0.8"><path transform="translate(-1.99 -3.50) scale(7.000)" d="M0.08 0.27L0.29 0V1M0 1H0.57"/></g>
<g transform="translate(1172.50 1203.70)" fill="none" stroke="#ffffff" stroke-width="0.1462" stroke-linecap="round" stroke-linejoin="round" opacity="0.8"><path transform="translate(-3.70 -6.50) scale(13.000)" d="M0.02 0.17C0.08 0.05 0.18 0 0.3 0C0.48 0 0.57 0.12 0.57 0.28C0.57 0.42 0.5 0.52 0.4 0.6L0 1H0.57"/></g>
<g transform="translate(1172.50 1220.20)" fill="none" stroke="#ffffff" stroke-width="0.1462" stroke-linecap="round" stroke-linejoin="round" opacity="0.8"><path transform="translate(-14.05 -6.50) scale(13.000)" d="M0.55 0.12C0.48 0.04 0.4 0 0.3 0C0.1 0 0 0.2 0 0.5C0 0.8 0.1 1 0.3 1C0.45 1 0.57 0.92 0.57 0.75V0.52H0.33"/><path transform="translate(-3.70 -6.50) scale(13.000)" d="M0 1V0L0.57 1V0"/><path transform="translate(6.64 -6.50) scale(13.000)" d="M0 1V0H0.22C0.47 0 0.57 0.2 0.57 0.5C0.57 0.8 0.47 1 0.22 1Z"/></g>
<g transform="translate(1240.50 1203.70)" fill="none" stroke="#ffffff" stroke-width="0.1462" stroke-linecap="round" stroke-linejoin="round" opacity="0.8"><path transform="translate(-3.70 -6.50) scale(13.000)" d="M0.08 0.27L0.29 0V1M0 1H0.57"/></g>
<g transform="translate(1240.50 1216.70)" fill="none" stroke="#ffffff" stroke-width="0.1455" stroke-linecap="round" stroke-linejoin="round" opacity="0.8"><path transform="translate(-18.60 -2.75) scale(5.500)" d="M0 1V0L0.57 1V0"/><path transform="translate(-15.53 -2.75) scale(5.500)" d="M0 0.66H0.5C0.5 0.45 0.42 0.31 0.25 0.31C0.08 0.31 0 0.45 0 0.655C0 0.86 0.08 1 0.25 1C0.35 1 0.43 0.97 0.48 0.92"/><path transform="translate(-12.23 -2.75) scale(5.500)" d="M0.12 0.05V0.85C0.12 0.95 0.18 1 0.27 1H0.35M0 0.31H0.32"/><path transform="translate(-9.76 -2.75) scale(5.500)" d="M0 0.6H0.5"/><path transform="translate(-6.85 -2.75) scale(5.500)" d="M0.2 -0.05C0.05 0.2 0 0.35 0 0.5C0 0.65 0.05 0.8 0.2 1.05"/><path transform="translate(-5.78 -2.75) scale(5.500)" d="M0.57 0.15C0.5 0.05 0.4 0 0.3 0C0.1 0 0 0.2 0 0.5C0 0.8 0.1 1 0.3 1C0.4 1 0.5 0.95 0.57 0.85"/><path transform="translate(-2.90 -2.75) scale(5.500)" d="M0.08 0.27L0.29 0V1M0 1H0.57"/><path transform="translate(-0.01 -2.75) scale(5.500)" d="M0.285 0C0.06 0 0 0.22 0 0.5C0 0.78 0.06 1 0.285 1C0.51 1 0.57 0.78 0.57 0.5C0.57 0.22 0.51 0 0.285 0Z"/><path transform="translate(3.06 -2.75) scale(5.500)" d="M0 0.6H0.5"/><path transform="translate(5.75 -2.75) scale(5.500)" d="M0 1V0H0.3C0.47 0 0.57 0.1 0.57 0.28C0.57 0.45 0.47 0.55 0.3 0.55H0"/><path transform="translate(8.82 -2.75) scale(5.500)" d="M0.05 0.38C0.12 0.33 0.2 0.31 0.28 0.31C0.42 0.31 0.5 0.38 0.5 0.52V1M0.5 0.62H0.25C0.08 0.62 0 0.7 0.0 0.82C0 0.94 0.08 1 0.22 1C0.34 1 0.43 0.95 0.5 0.88"/><path transform="translate(11.70 -2.75) scale(5.500)" d="M0.5 0V1M0.5 0.42C0.42 0.35 0.34 0.31 0.25 0.31C0.08 0.31 0 0.45 0 0.655C0 0.86 0.08 1 0.25 1C0.34 1 0.42 0.96 0.5 0.9"/><path transform="translate(14.39 -2.75) scale(5.500)" d="M0.02 0.17C0.08 0.05 0.18 0 0.3 0C0.48 0 0.57 0.12 0.57 0.28C0.57 0.42 0.5 0.52 0.4 0.6L0 1H0.57"/><path transform="translate(17.50 -2.75) scale(5.500)" d="M0 -0.05C0.15 0.2 0.2 0.35 0.2 0.5C0.2 0.65 0.15 0.8 0 1.05"/></g>
<g transform="translate(1172.50 1255.70)" fill="none" stroke="#ffffff" stroke-width="0.1462" stroke-linecap="round" stroke-linejoin="round" opacity="0.8"><path transform="translate(-3.70 -6.50) scale(13.000)" d="M0.02 0H0.55L0.27 0.38H0.33C0.5 0.38 0.57 0.52 0.57 0.68C0.57 0.88 0.47 1 0.28 1C0.15 1 0.07 0.95 0 0.88"/></g>
<g transform="translate(1172.50 1272.20)" fill="none" stroke="#ffffff" stroke-width="0.1462" stroke-linecap="round" stroke-linejoin="round" opacity="0.8"><path transform="translate(-12.05 -6.50) scale(13.000)" d="M0 0L0.6 1M0.6 0L0 1"/><path transform="translate(-2.50 -6.50) scale(13.000)" d="M0 0H0.4M0.2 0V1M0 1H0.4"/><path transform="translate(4.64 -6.50) scale(13.000)" d="M0 1V0L0.57 1V0"/></g>
<g transform="translate(1240.50 1255.70)" fill="none" stroke="#ffffff" stroke-width="0.1462" stroke-linecap="round" stroke-linejoin="round" opacity="0.8"><path transform="translate(-3.90 -6.50) scale(13.000)" d="M0.44 1V0L0 0.68H0.6"/></g>
<g transform="translate(1240.50 1272.20)" fill="none" stroke="#ffffff" stroke-width="0.1462" stroke-linecap="round" stroke-linejoin="round" opacity="0.8"><path transform="translate(-14.05 -6.50) scale(13.000)" d="M0.55 0.12C0.48 0.04 0.4 0 0.3 0C0.1 0 0 0.2 0 0.5C0 0.8 0.1 1 0.3 1C0.45 1 0.57 0.92 0.57 0.75V0.52H0.33"/><path transform="translate(-3.70 -6.50) scale(13.000)" d="M0 1V0L0.57 1V0"/><path transform="translate(6.64 -6.50) scale(13.000)" d="M0 1V0H0.22C0.47 0 0.57 0.2 0.57 0.5C0.57 0.8 0.47 1 0.22 1Z"/></g>
<g transform="translate(1124.40 1219.00)" fill="none" stroke="#ffffff" stroke-width="0.1500" stroke-linecap="round" stroke-linejoin="round" opacity="0.8"><path transform="translate(-1.71 -3.00) scale(6.000)" d="M0.08 0.27L0.29 0V1M0 1H0.57"/></g>
<g transform="translate(1124.40 1227.00)" fill="none" stroke="#ffffff" stroke-width="0.1600" stroke-linecap="round" stroke-linejoin="round" opacity="0.8"><path transform="translate(-6.42 -2.50) scale(5.000)" d="M0.55 0.12C0.48 0.04 0.4 0 0.3 0C0.1 0 0 0.2 0 0.5C0 0.8 0.1 1 0.3 1C0.45 1 0.57 0.92 0.57 0.75V0.52H0.33"/><path transform="translate(-1.42 -2.50) scale(5.000)" d="M0 1V0L0.57 1V0"/><path transform="translate(3.58 -2.50) scale(5.000)" d="M0 1V0H0.22C0.47 0 0.57 0.2 0.57 0.5C0.57 0.8 0.47 1 0.22 1Z"/></g>
<g transform="translate(1124.40 1250.00)" fill="none" stroke="#ffffff" stroke-width="0.1500" stroke-linecap="round" stroke-linejoin="round" opacity="0.8"><path transform="translate(-1.71 -3.00) scale(6.000)" d="M0.02 0.17C0.08 0.05 0.18 0 0.3 0C0.48 0 0.57 0.12 0.57 0.28C0.57 0.42 0.5 0.52 0.4 0.6L0 1H0.57"/></g>
<g transform="translate(1124.40 1257.00)" fill="none" stroke="#ffffff" stroke-width="0.1600" stroke-linecap="round" stroke-linejoin="round" opacity="0.8"><path transform="translate(-6.46 -2.50) scale(5.000)" d="M0 0L0.6 1M0.6 0L0 1"/><path transform="translate(-0.96 -2.50) scale(5.000)" d="M0 0H0.4M0.2 0V1M0 1H0.4"/><path transform="translate(3.61 -2.50) scale(5.000)" d="M0 1V0L0.57 1V0"/></g>
<g transform="translate(1288.10 1219.00)" fill="none" stroke="#ffffff" stroke-width="0.1500" stroke-linecap="round" stroke-linejoin="round" opacity="0.8"><path transform="translate(-1.71 -3.00) scale(6.000)" d="M0.02 0.17C0.08 0.05 0.18 0 0.3 0C0.48 0 0.57 0.12 0.57 0.28C0.57 0.42 0.5 0.52 0.4 0.6L0 1H0.57"/></g>
<g transform="translate(1288.10 1227.00)" fill="none" stroke="#ffffff" stroke-width="0.1600" stroke-linecap="round" stroke-linejoin="round" opacity="0.8"><path transform="translate(-8.78 -2.50) scale(5.000)" d="M0 0L0.6 1M0.6 0L0 1"/><path transform="translate(-3.78 -2.50) scale(5.000)" d="M0.3 0C0.06 0 0 0.22 0 0.5C0 0.78 0.06 1 0.3 1C0.54 1 0.6 0.78 0.6 0.5C0.6 0.22 0.54 0 0.3 0Z"/><path transform="translate(1.30 -2.50) scale(5.000)" d="M0 0V0.7C0 0.9 0.1 1 0.285 1C0.47 1 0.57 0.9 0.57 0.7V0"/><path transform="translate(5.67 -2.50) scale(5.000)" d="M0 0H0.62M0.31 0V1"/></g>
<g transform="translate(1288.10 1250.00)" fill="none" stroke="#ffffff" stroke-width="0.1500" stroke-linecap="round" stroke-linejoin="round" opacity="0.8"><path transform="translate(-1.71 -3.00) scale(6.000)" d="M0.08 0.27L0.29 0V1M0 1H0.57"/></g>
<g transform="translate(1288.10 1257.00)" fill="none" stroke="#ffffff" stroke-width="0.1600" stroke-linecap="round" stroke-linejoin="round" opacity="0.8"><path transform="translate(-6.42 -2.50) scale(5.000)" d="M0.55 0.12C0.48 0.04 0.4 0 0.3 0C0.1 0 0 0.2 0 0.5C0 0.8 0.1 1 0.3 1C0.45 1 0.57 0.92 0.57 0.75V0.52H0.33"/><path transform="translate(-1.42 -2.50) scale(5.000)" d="M0 1V0L0.57 1V0"/><path transform="translate(3.58 -2.50) scale(5.000)" d="M0 1V0H0.22C0.47 0 0.57 0.2 0.57 0.5C0.57 0.8 0.47 1 0.22 1Z"/></g>
<g fill="none" stroke="#0892a6" stroke-width="1"><path d="M33 574.5C200 495 380 425 556 372"/><path d="M33 617.8C200 535 400 450 633 390.6C750 365 900 330 1120 296"/><path d="M311 679C330 600 380 480 490 375.7"/><path d="M33 657.3C200 650 400 620 633 537C750 500 900 440 1105 345"/><path d="M33 709C150 700 250 690 300 683C450 660 700 570 899 484C980 450 1050 410 1105 370"/><path d="M689.7 367.5C760 332 830 300 958.4 292.5C1000 285 1030 268 1099.5 267.4"/><path d="M701.6 358.5C800 345 950 320 1130 300"/><path d="M490 374C530 366 570 364 590 370C620 368 650 366 685 368"/><path d="M674.7 379.4C750 430 900 520 1042 650C1080 690 1110 740 1127 770"/><path d="M33 840.5C90 822 140 808 188 801C250 780 300 770 330 766C450 748 700 745 958.4 762.2"/><path d="M277.5 692C274 720 274 730 277.5 752.6C274 780 274 790 277.5 813.7"/><path d="M307 692C304 720 304 730 307 752.6C304 780 304 790 307 813.7"/><path d="M188.4 752.6C185 780 185 790 188.4 813.7C185 840 185 850 188.4 874.5C185 900 185 910 188.4 935"/><path d="M218 752.6C215 780 215 790 218 813.7C215 840 215 850 218 874.5C215 900 215 910 218 935"/><path d="M285 818C310 850 330 890 338.6 919.5"/><path d="M307 813.7C320 860 350 900 368 919.5"/><path d="M33 883.5C50 895 60 905 76 910C110 925 150 935 188.4 935"/><path d="M83.6 914.2C250 943 450 975 611 972C750 968 850 955 958.4 918.7"/><path d="M372.5 923.2C500 950 650 985 760 980C850 975 900 965 958.4 950"/><path d="M33 952C200 968 450 1005 647 993.6C780 987 870 965 958.4 935"/><path d="M218 935C300 945 400 955 550 960C700 962 850 940 958.4 918.7"/><path d="M1365 267C1400 290 1440 296 1506.4 292.5"/><path d="M1308 295C1380 220 1430 170 1506.4 145"/><path d="M1186 475C1268 453 1370 430 1506.4 449.2"/><path d="M1214 736.5C1319 738 1422 717 1506.4 684"/><path d="M1182 540C1178 600 1196 676 1212 735"/><path d="M1134 539C1140 615 1160 680 1184 735"/><path d="M1113 362C1120 420 1125 450 1128 478"/><path d="M1155 362C1160 390 1158 410 1157 421"/><path d="M1128 478C1130 500 1132 520 1134 539"/><path d="M1132 295C1120 320 1115 340 1113 362"/><path d="M1157 295C1160 320 1157 340 1155 362"/><path d="M1099.5 131C1085 180 1085 230 1099.5 267.4"/><path d="M1365.3 131C1350 180 1345 230 1365.3 267.4"/><path d="M1099.5 267.4C1110 285 1120 292 1132 295"/><path d="M1365.3 267.4C1350 285 1340 292 1332 295"/><path d="M1506.4 214C1503 260 1503 300 1506.4 370.8"/><path d="M958.4 136.1C962 386.1 990 820 1152.6 890"/><path d="M958.4 214.4C965 464.4 1015 810 1177.3 890"/><path d="M958.4 370.9C968 620.9 1040 800 1202.1 890"/><path d="M958.4 449.2C971 699.2 1065 790 1226.8 890"/><path d="M958.4 527.4C974 777.4 1090 780 1251.6 890"/><path d="M958.4 605.7C977 855.7 1115 770 1276.3 890"/><path d="M958.4 762.2C1010 742.2 1060 912.8 1126 922.8"/><path d="M958.4 840.5C1010 820.5 1060 937.5 1126 947.5"/><path d="M958.4 918.8C1010 898.8 1060 962.3 1126 972.3"/><path d="M958.4 997.0C1010 977.0 1060 987.0 1126 997.0"/><path d="M958.4 1153.5C1010 1133.5 1060 1011.8 1126 1021.8"/><path d="M958.4 1231.8C1010 1211.8 1060 1036.5 1126 1046.5"/><path d="M958.4 1310.1C1010 1290.1 1060 1061.2 1126 1071.2"/><path d="M1127 801.7C1100 850 1095 900 1126 935"/><path d="M1127 816.8C1110 860 1105 910 1126 960"/><path d="M1506.4 214.4C1503 474.4 1460 840 1338 922.8"/><path d="M1506.4 370.9C1500 630.9 1445 865 1338 935.2"/><path d="M1506.4 527.4C1497 787.4 1430 890 1338 947.5"/><path d="M1506.4 605.7C1494 865.7 1415 915 1338 959.9"/><path d="M1506.4 762.2C1491 1022.2 1400 940 1338 972.3"/><path d="M1506.4 840.5C1488 1100.5 1385 965 1338 984.6"/><path d="M1152.6 1108C1110 1180 1060 1250 1006 1345"/><path d="M1165 1108C1130 1200 1080 1280 1039 1345"/><path d="M1177.3 1108C1150 1200 1120 1280 1100 1345"/><path d="M1189.7 1108C1170 1200 1140 1290 1129 1345"/><path d="M1202 1108C1195 1200 1185 1280 1179 1345"/><path d="M1214.4 1108C1210 1200 1208 1290 1206 1345"/><path d="M1239 1108C1245 1200 1250 1290 1252 1345"/><path d="M1264 1108C1290 1200 1320 1290 1342 1345"/><path d="M1276 1108C1310 1200 1350 1290 1369 1345"/><path d="M1301 1108C1350 1180 1400 1280 1415 1345"/><path d="M1313 1108C1380 1180 1430 1280 1461 1345"/><path d="M958.4 1310C1000 1260 1080 1180 1152.6 1108"/><path d="M958.4 1231C1020 1180 1080 1120 1126 1085"/><path d="M958.4 1153C1020 1130 1080 1100 1126 1073"/><path d="M1338 1060C1400 1100 1450 1140 1506.4 1153"/><path d="M1338 1073C1400 1130 1450 1200 1506.4 1231"/><path d="M1338 1085C1400 1160 1450 1260 1506.4 1310"/><path d="M1506.4 1075C1440 1130 1360 1200 1288 1262"/><path d="M1506.4 997C1440 1010 1380 1020 1338 1022"/><path d="M1506.4 918.7C1460 990 1380 1060 1301 1108"/><path d="M1288 1214C1350 1260 1420 1300 1480 1345"/><path d="M1288 1238C1360 1200 1440 1140 1560 1100"/><path d="M1172 1212C1190 1230 1210 1240 1240 1264"/><path d="M1124 1214C1140 1205 1160 1200 1172 1212"/><path d="M1124 1262C1140 1270 1160 1268 1172 1264"/><path d="M1288 1214C1270 1205 1250 1205 1240 1212"/><path d="M1288 1262C1270 1270 1250 1270 1240 1264"/><path d="M1214 736C1210 770 1205 790 1214 785"/><path d="M1182 735C1150 760 1140 790 1127 816"/><path d="M1184 735C1100 700 1000 560 958.4 370.8"/><path d="M1040 913C1150 905 1250 890 1340 906"/><path d="M1040 930C1160 915 1260 895 1420 860"/><path d="M1166 876C1190 930 1215 985 1230 1000C1240 1040 1235 1090 1227 1140"/><path d="M1369 984C1330 1020 1300 1080 1269 1125"/><path d="M1370 968C1320 980 1280 1050 1262 1095"/></g>
<path d="M474.90 372.80h10M479.90 367.80v10" stroke="#ff26e2" stroke-width="1.2"/>
<path d="M577.50 374.50h10M582.50 369.50v10" stroke="#ff26e2" stroke-width="1.2"/>
<path d="M669.90 371.30h10M674.90 366.30v10" stroke="#ff26e2" stroke-width="1.2"/>
<path d="M287.50 691.90h10M292.50 686.90v10" stroke="#ff26e2" stroke-width="1.2"/>
<path d="M198.40 752.60h10M203.40 747.60v10" stroke="#ff26e2" stroke-width="1.2"/>
<path d="M287.50 752.60h10M292.50 747.60v10" stroke="#ff26e2" stroke-width="1.2"/>
<path d="M198.40 813.70h10M203.40 808.70v10" stroke="#ff26e2" stroke-width="1.2"/>
<path d="M287.50 813.70h10M292.50 808.70v10" stroke="#ff26e2" stroke-width="1.2"/>
<path d="M198.40 874.50h10M203.40 869.50v10" stroke="#ff26e2" stroke-width="1.2"/>
<path d="M198.40 935.00h10M203.40 930.00v10" stroke="#ff26e2" stroke-width="1.2"/>
<path d="M61.50 913.30h10M66.50 908.30v10" stroke="#ff26e2" stroke-width="1.2"/>
<path d="M348.40 919.50h10M353.40 914.50v10" stroke="#ff26e2" stroke-width="1.2"/>
<path d="M1227.40 171.60h10M1232.40 166.60v10" stroke="#ff26e2" stroke-width="1.2"/>
<path d="M1126.00 362.20h12M1132.00 356.20v12" stroke="#ff26e2" stroke-width="1.2"/>
<path d="M1152.00 455.00h10M1157.00 450.00v10" stroke="#ff26e2" stroke-width="1.2"/>
<path d="M1153.00 539.00h12M1159.00 533.00v12" stroke="#ff26e2" stroke-width="1.2"/>
<path d="M1193.70 735.00h10M1198.70 730.00v10" stroke="#ff26e2" stroke-width="1.2"/>
<path d="M1235.80 1164.00h8M1239.80 1160.00v8" stroke="#ff26e2" stroke-width="1.2"/>
<path d="M1200.00 1236.00h12M1206.00 1230.00v12" stroke="#ff26e2" stroke-width="1.2"/>
<path d="M1119.40 1238.00h10M1124.40 1233.00v10" stroke="#ff26e2" stroke-width="1.2"/>
<path d="M1283.10 1238.00h10M1288.10 1233.00v10" stroke="#ff26e2" stroke-width="1.2"/>
</g>
</svg></body></html>
